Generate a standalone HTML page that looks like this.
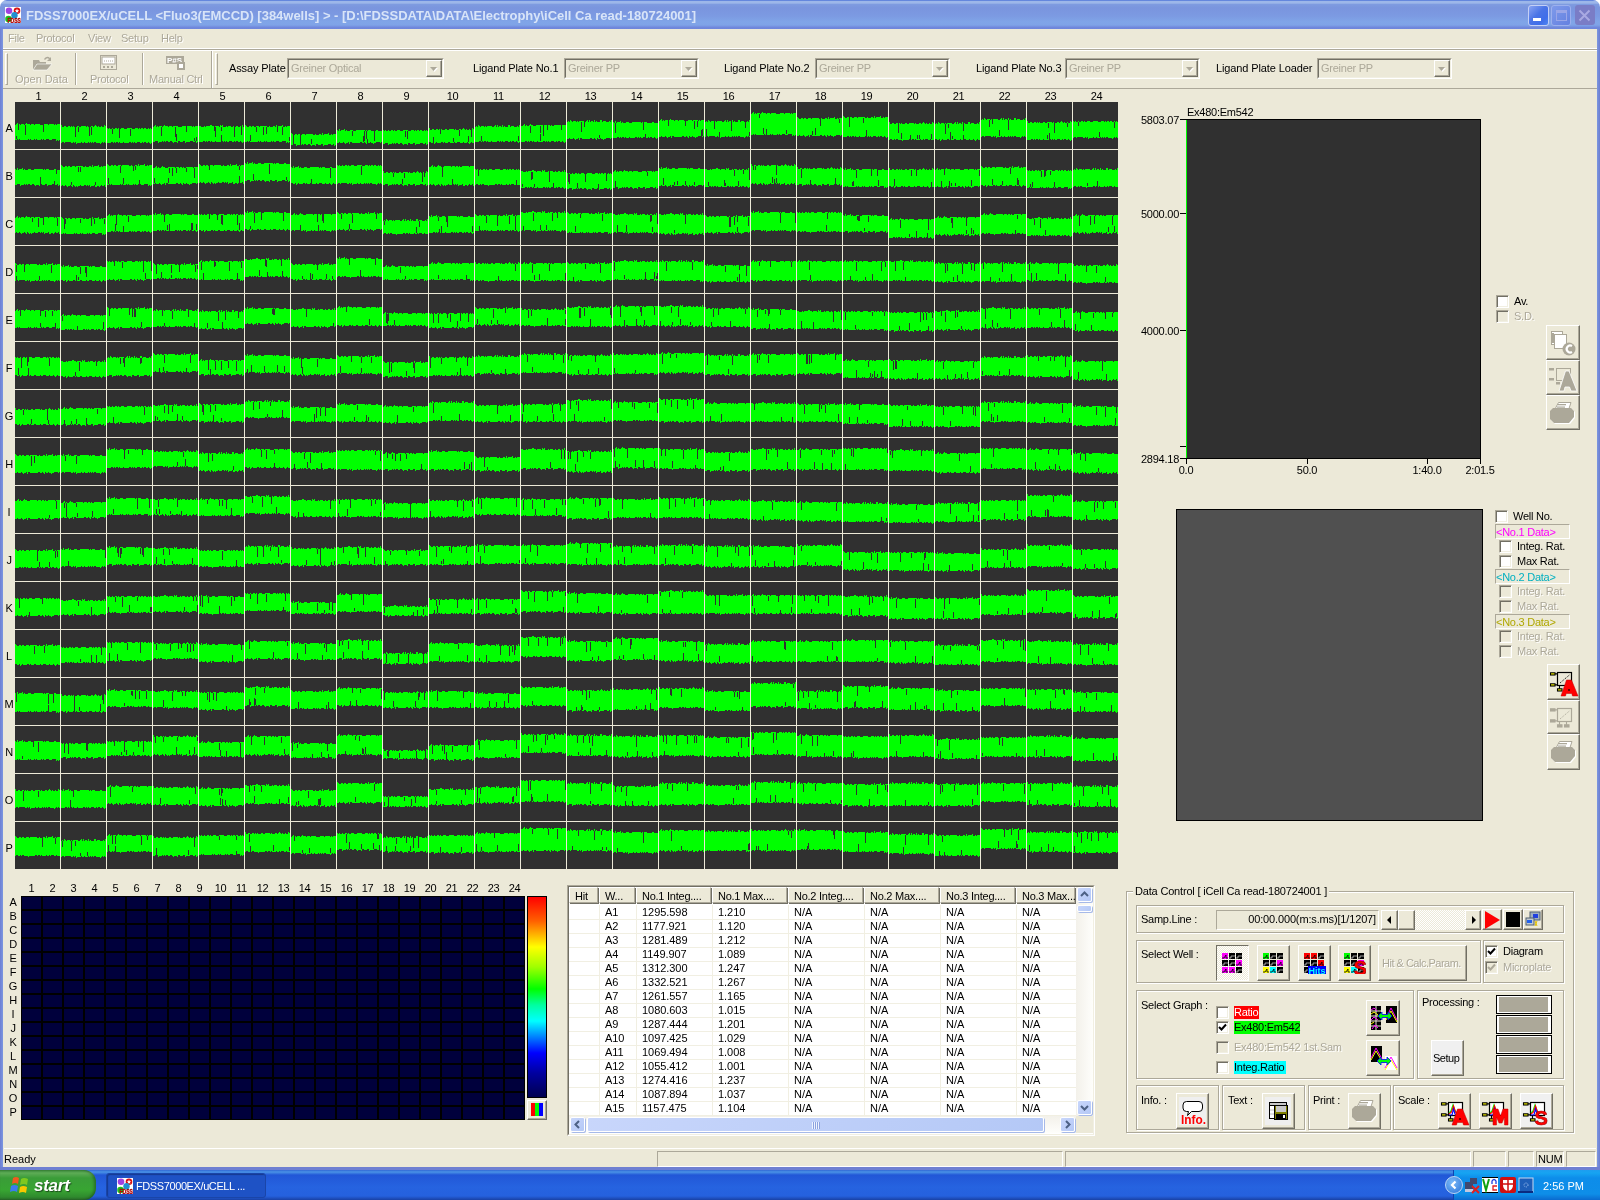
<!DOCTYPE html><html><head><meta charset="utf-8"><style>
*{margin:0;padding:0;box-sizing:border-box}
html,body{width:1600px;height:1200px;overflow:hidden;background:#ECE9D8;font-family:"Liberation Sans",sans-serif;font-size:11px;color:#000}
.ab{position:absolute}
.t{position:absolute;white-space:nowrap;line-height:1;letter-spacing:-0.25px}
.dis{color:#ACA899;text-shadow:1px 1px 0 #fff}
.cb{position:absolute;width:13px;height:13px;background:#fff;border-top:1px solid #ACA899;border-left:1px solid #ACA899;border-right:1px solid #fff;border-bottom:1px solid #fff;box-shadow:inset 1px 1px 0 #716F64, inset -1px -1px 0 #F1EFE2}
.cbd{background:#ECE9D8}
.btn{position:absolute;background:#ECE9D8;border-top:1px solid #fff;border-left:1px solid #fff;border-right:1px solid #716F64;border-bottom:1px solid #716F64;box-shadow:inset -1px -1px 0 #ACA899}
.grp{position:absolute;border:1px solid #D0D0BF;box-shadow:1px 1px 0 #fff inset, 1px 1px 0 #fff}
.sunk{position:absolute;border-top:1px solid #ACA899;border-left:1px solid #ACA899;border-right:1px solid #fff;border-bottom:1px solid #fff}
</style></head><body><div style="position:absolute;left:0;top:0;width:1600px;height:1200px;overflow:hidden;will-change:transform">

<div class="ab" style="left:0;top:0;width:10px;height:10px;background:#fff"></div><div class="ab" style="left:1590px;top:0;width:10px;height:10px;background:#fff"></div>
<div class="ab" style="left:0;top:0;width:1600px;height:29px;border-radius:7px 7px 0 0;background:linear-gradient(to bottom,#6487DD 0px,#6487DD 1px,#9DB7E9 1.5px,#9DB7E9 3px,#7E9BE0 4.5px,#7A95DE 8px,#7C9AE2 16px,#80A5E8 22px,#7FA3E7 25px,#7088DC 27.5px,#6E86DB 29px)"></div>
<svg class="ab" style="left:5px;top:7px" width="16" height="16" viewBox="0 0 16 16"><rect width="16" height="16" fill="#fff"/><circle cx="4" cy="3.8" r="3.3" fill="#A040E0"/><circle cx="12" cy="3.8" r="3.3" fill="#D81010"/><path d="M12 1.5 L12.7 3.2 L14.2 3.3 L13 4.3 L13.4 5.8 L12 5 L10.6 5.8 L11 4.3 L9.8 3.3 L11.3 3.2Z" fill="#fff"/><circle cx="9.5" cy="8.2" r="3.2" fill="#2090D0"/><circle cx="3.5" cy="12" r="3.3" fill="#20C020"/><text x="2.5" y="15.6" font-family="Liberation Sans" font-weight="bold" font-size="6.5" fill="#FF0000" stroke="#600000" stroke-width="0.3" textLength="13.5" lengthAdjust="spacingAndGlyphs">FDSS</text></svg>
<div class="t" style="left:26px;top:9px;font-size:13px;font-weight:bold;color:#D8E4F8;letter-spacing:-0.02px">FDSS7000EX/uCELL &lt;Fluo3(EMCCD) [384wells] &gt; - [D:\FDSSDATA\DATA\Electrophy\iCell Ca read-180724001]</div>
<div class="ab" style="left:1528px;top:5px;width:21px;height:21px;border-radius:3px;border:1px solid #C4D0F6;background:linear-gradient(135deg,#8AA4F2 0%,#4A74E6 45%,#3F6EEA 75%,#4F86F2 100%)"><div class="ab" style="left:4px;top:12px;width:8px;height:3px;background:#fff"></div></div>
<div class="ab" style="left:1551px;top:5px;width:20px;height:21px;border-radius:3px;border:1px solid #9CB0EE;background:linear-gradient(135deg,#7E9AEA,#6480E0)"><div class="ab" style="left:4px;top:4px;width:11px;height:11px;border:1px solid #9AA6E8;border-top-width:3px"></div></div>
<div class="ab" style="left:1575px;top:5px;width:20px;height:20px;border-radius:3px;background:#7A7DC6"><svg class="ab" style="left:3px;top:4px" width="13" height="13"><path d="M1.5 1.5 L11.5 11.5 M11.5 1.5 L1.5 11.5" stroke="#A9A9E2" stroke-width="2"/></svg></div>
<div class="ab" style="left:0;top:29px;width:3px;height:1141px;background:linear-gradient(to right,#6E7FD3,#7C97E0)"></div>
<div class="ab" style="left:1597px;top:29px;width:3px;height:1141px;background:linear-gradient(to right,#7C97E0,#6B7DD0)"></div>
<div class="ab" style="left:0;top:1167px;width:1600px;height:3px;background:#6F80D2"></div>
<div class="t dis" style="left:8px;top:33px;text-shadow:1px 1px 0 #fff">File</div>
<div class="t dis" style="left:36px;top:33px;text-shadow:1px 1px 0 #fff">Protocol</div>
<div class="t dis" style="left:88px;top:33px;text-shadow:1px 1px 0 #fff">View</div>
<div class="t dis" style="left:121px;top:33px;text-shadow:1px 1px 0 #fff">Setup</div>
<div class="t dis" style="left:161px;top:33px;text-shadow:1px 1px 0 #fff">Help</div>
<div class="ab" style="left:3px;top:48px;width:1594px;height:3px;background:#fff;border-top:1px solid #fff"></div>
<div class="ab" style="left:3px;top:49px;width:1594px;height:1px;background:#ACA899"></div>
<div class="ab" style="left:5px;top:53px;width:3px;height:32px;border-left:1px solid #fff;border-top:1px solid #fff;border-right:1px solid #ACA899;border-bottom:1px solid #ACA899"></div>
<div class="ab" style="left:75px;top:53px;width:2px;height:32px;border-left:1px solid #ACA899;border-right:1px solid #fff"></div>
<div class="ab" style="left:142px;top:53px;width:2px;height:32px;border-left:1px solid #ACA899;border-right:1px solid #fff"></div>
<div class="ab" style="left:211px;top:51px;width:2px;height:37px;border-left:1px solid #ACA899;border-right:1px solid #fff"></div>
<div class="ab" style="left:215px;top:53px;width:3px;height:32px;border-left:1px solid #fff;border-top:1px solid #fff;border-right:1px solid #ACA899;border-bottom:1px solid #ACA899"></div>
<div class="t dis" style="left:15px;top:74px;letter-spacing:-0.05px">Open Data</div>
<div class="t dis" style="left:90px;top:74px;text-shadow:1px 1px 0 #fff">Protocol</div>
<div class="t dis" style="left:149px;top:74px;text-shadow:1px 1px 0 #fff">Manual Ctrl</div>
<svg class="ab" style="left:32px;top:55px" width="21" height="16"><path d="M1 5 L7 5 L8 7 L14 7 L14 9 L5 9 L1 15 Z" fill="#ACA899"/><path d="M5 9 L20 9 L15 15 L1 15 Z" fill="#ACA899" stroke="#fff" stroke-width="0.6"/><path d="M12 4 Q15 0 18 3 L19 2 L19 6 L15 6 L17 4 Q15 2 13 5Z" fill="#ACA899"/></svg>
<svg class="ab" style="left:100px;top:55px" width="18" height="16"><rect x="0.5" y="0.5" width="16" height="14" fill="#ECE9D8" stroke="#ACA899"/><rect x="2" y="2" width="13" height="7" fill="#fff" stroke="#ACA899"/><path d="M4 6 H13" stroke="#ACA899" stroke-dasharray="1 1"/><rect x="3" y="11" width="2" height="2" fill="#ACA899"/><rect x="7" y="11" width="2" height="2" fill="#ACA899"/><rect x="11" y="11" width="2" height="2" fill="#ACA899"/></svg>
<svg class="ab" style="left:166px;top:55px" width="20" height="16"><rect x="0" y="1" width="18" height="8" fill="#ACA899"/><text x="1" y="8" font-size="8" fill="#fff" font-family="Liberation Sans" font-weight="bold">P#S</text><rect x="11" y="7" width="8" height="8" fill="#ACA899"/><rect x="13" y="9" width="4" height="4" fill="#fff"/></svg>
<div class="t" style="left:229px;top:63px;letter-spacing:-0.12px">Assay Plate</div>
<div class="ab" style="left:287px;top:58px;width:157px;height:21px;border-top:1px solid #ACA899;border-left:1px solid #ACA899;border-right:1px solid #fff;border-bottom:1px solid #fff;background:#ECE9D8"><div class="ab" style="left:0;top:0;right:0;bottom:0;border-top:1px solid #716F64;border-left:1px solid #716F64;border-right:1px solid #F1EFE2;border-bottom:1px solid #F1EFE2"></div><div class="t dis" style="left:3px;top:4px;text-shadow:none">Greiner Optical</div><div class="ab" style="right:1px;top:1px;width:16px;height:17px;border-top:1px solid #fff;border-left:1px solid #fff;border-right:1px solid #716F64;border-bottom:1px solid #716F64;box-shadow:inset -1px -1px 0 #ACA899"><svg class="ab" style="left:2px;top:5px" width="10" height="7"><path d="M2 2 H9 L5.5 6Z" fill="#fff"/><path d="M1 1 H8 L4.5 5Z" fill="#ACA899"/></svg></div></div>
<div class="t" style="left:473px;top:63px;letter-spacing:-0.12px">Ligand Plate No.1</div>
<div class="ab" style="left:564px;top:58px;width:135px;height:21px;border-top:1px solid #ACA899;border-left:1px solid #ACA899;border-right:1px solid #fff;border-bottom:1px solid #fff;background:#ECE9D8"><div class="ab" style="left:0;top:0;right:0;bottom:0;border-top:1px solid #716F64;border-left:1px solid #716F64;border-right:1px solid #F1EFE2;border-bottom:1px solid #F1EFE2"></div><div class="t dis" style="left:3px;top:4px;text-shadow:none">Greiner PP</div><div class="ab" style="right:1px;top:1px;width:16px;height:17px;border-top:1px solid #fff;border-left:1px solid #fff;border-right:1px solid #716F64;border-bottom:1px solid #716F64;box-shadow:inset -1px -1px 0 #ACA899"><svg class="ab" style="left:2px;top:5px" width="10" height="7"><path d="M2 2 H9 L5.5 6Z" fill="#fff"/><path d="M1 1 H8 L4.5 5Z" fill="#ACA899"/></svg></div></div>
<div class="t" style="left:724px;top:63px;letter-spacing:-0.12px">Ligand Plate No.2</div>
<div class="ab" style="left:815px;top:58px;width:135px;height:21px;border-top:1px solid #ACA899;border-left:1px solid #ACA899;border-right:1px solid #fff;border-bottom:1px solid #fff;background:#ECE9D8"><div class="ab" style="left:0;top:0;right:0;bottom:0;border-top:1px solid #716F64;border-left:1px solid #716F64;border-right:1px solid #F1EFE2;border-bottom:1px solid #F1EFE2"></div><div class="t dis" style="left:3px;top:4px;text-shadow:none">Greiner PP</div><div class="ab" style="right:1px;top:1px;width:16px;height:17px;border-top:1px solid #fff;border-left:1px solid #fff;border-right:1px solid #716F64;border-bottom:1px solid #716F64;box-shadow:inset -1px -1px 0 #ACA899"><svg class="ab" style="left:2px;top:5px" width="10" height="7"><path d="M2 2 H9 L5.5 6Z" fill="#fff"/><path d="M1 1 H8 L4.5 5Z" fill="#ACA899"/></svg></div></div>
<div class="t" style="left:976px;top:63px;letter-spacing:-0.12px">Ligand Plate No.3</div>
<div class="ab" style="left:1065px;top:58px;width:135px;height:21px;border-top:1px solid #ACA899;border-left:1px solid #ACA899;border-right:1px solid #fff;border-bottom:1px solid #fff;background:#ECE9D8"><div class="ab" style="left:0;top:0;right:0;bottom:0;border-top:1px solid #716F64;border-left:1px solid #716F64;border-right:1px solid #F1EFE2;border-bottom:1px solid #F1EFE2"></div><div class="t dis" style="left:3px;top:4px;text-shadow:none">Greiner PP</div><div class="ab" style="right:1px;top:1px;width:16px;height:17px;border-top:1px solid #fff;border-left:1px solid #fff;border-right:1px solid #716F64;border-bottom:1px solid #716F64;box-shadow:inset -1px -1px 0 #ACA899"><svg class="ab" style="left:2px;top:5px" width="10" height="7"><path d="M2 2 H9 L5.5 6Z" fill="#fff"/><path d="M1 1 H8 L4.5 5Z" fill="#ACA899"/></svg></div></div>
<div class="t" style="left:1216px;top:63px;letter-spacing:-0.12px">Ligand Plate Loader</div>
<div class="ab" style="left:1317px;top:58px;width:135px;height:21px;border-top:1px solid #ACA899;border-left:1px solid #ACA899;border-right:1px solid #fff;border-bottom:1px solid #fff;background:#ECE9D8"><div class="ab" style="left:0;top:0;right:0;bottom:0;border-top:1px solid #716F64;border-left:1px solid #716F64;border-right:1px solid #F1EFE2;border-bottom:1px solid #F1EFE2"></div><div class="t dis" style="left:3px;top:4px;text-shadow:none">Greiner PP</div><div class="ab" style="right:1px;top:1px;width:16px;height:17px;border-top:1px solid #fff;border-left:1px solid #fff;border-right:1px solid #716F64;border-bottom:1px solid #716F64;box-shadow:inset -1px -1px 0 #ACA899"><svg class="ab" style="left:2px;top:5px" width="10" height="7"><path d="M2 2 H9 L5.5 6Z" fill="#fff"/><path d="M1 1 H8 L4.5 5Z" fill="#ACA899"/></svg></div></div>
<div class="ab" style="left:3px;top:88px;width:1594px;height:1px;background:#ACA899"></div>
<div class="ab" style="left:15px;top:102px;width:1104px;height:767px;background:#ECE9D8"></div>
<div class="t" style="left:16px;top:91px;width:45px;text-align:center">1</div>
<div class="t" style="left:62px;top:91px;width:45px;text-align:center">2</div>
<div class="t" style="left:108px;top:91px;width:45px;text-align:center">3</div>
<div class="t" style="left:154px;top:91px;width:45px;text-align:center">4</div>
<div class="t" style="left:200px;top:91px;width:45px;text-align:center">5</div>
<div class="t" style="left:246px;top:91px;width:45px;text-align:center">6</div>
<div class="t" style="left:292px;top:91px;width:45px;text-align:center">7</div>
<div class="t" style="left:338px;top:91px;width:45px;text-align:center">8</div>
<div class="t" style="left:384px;top:91px;width:45px;text-align:center">9</div>
<div class="t" style="left:430px;top:91px;width:45px;text-align:center">10</div>
<div class="t" style="left:476px;top:91px;width:45px;text-align:center">11</div>
<div class="t" style="left:522px;top:91px;width:45px;text-align:center">12</div>
<div class="t" style="left:568px;top:91px;width:45px;text-align:center">13</div>
<div class="t" style="left:614px;top:91px;width:45px;text-align:center">14</div>
<div class="t" style="left:660px;top:91px;width:45px;text-align:center">15</div>
<div class="t" style="left:706px;top:91px;width:45px;text-align:center">16</div>
<div class="t" style="left:752px;top:91px;width:45px;text-align:center">17</div>
<div class="t" style="left:798px;top:91px;width:45px;text-align:center">18</div>
<div class="t" style="left:844px;top:91px;width:45px;text-align:center">19</div>
<div class="t" style="left:890px;top:91px;width:45px;text-align:center">20</div>
<div class="t" style="left:936px;top:91px;width:45px;text-align:center">21</div>
<div class="t" style="left:982px;top:91px;width:45px;text-align:center">22</div>
<div class="t" style="left:1028px;top:91px;width:45px;text-align:center">23</div>
<div class="t" style="left:1074px;top:91px;width:45px;text-align:center">24</div>
<div class="t" style="left:4px;top:123px;width:10px;text-align:center">A</div>
<div class="t" style="left:4px;top:171px;width:10px;text-align:center">B</div>
<div class="t" style="left:4px;top:219px;width:10px;text-align:center">C</div>
<div class="t" style="left:4px;top:267px;width:10px;text-align:center">D</div>
<div class="t" style="left:4px;top:315px;width:10px;text-align:center">E</div>
<div class="t" style="left:4px;top:363px;width:10px;text-align:center">F</div>
<div class="t" style="left:4px;top:411px;width:10px;text-align:center">G</div>
<div class="t" style="left:4px;top:459px;width:10px;text-align:center">H</div>
<div class="t" style="left:4px;top:507px;width:10px;text-align:center">I</div>
<div class="t" style="left:4px;top:555px;width:10px;text-align:center">J</div>
<div class="t" style="left:4px;top:603px;width:10px;text-align:center">K</div>
<div class="t" style="left:4px;top:651px;width:10px;text-align:center">L</div>
<div class="t" style="left:4px;top:699px;width:10px;text-align:center">M</div>
<div class="t" style="left:4px;top:747px;width:10px;text-align:center">N</div>
<div class="t" style="left:4px;top:795px;width:10px;text-align:center">O</div>
<div class="t" style="left:4px;top:843px;width:10px;text-align:center">P</div>
<svg class="ab" style="left:15px;top:102px" width="1104" height="767" viewBox="0 0 1104 767"><defs><path id="ft0" d="M0 4v1M1 4v1M5 4v1M7 4v1M8 4v1M9 4v1M10 4v1M11 3v2M12 3v2M13 4v1M14 4v1M16 4v1M17 4v1M18 4v1M19 4v1M21 3v2M22 4v1M23 3v2M27 4v1M29 4v1M30 4v1M31 4v1M34 4v1M37 4v1M38 4v1M41 4v1M43 3v2" stroke="#00FF00" stroke-width="1" transform="translate(0.5 0)"/><path id="fb0" d="M0 0v1M1 0v1M3 0v1M5 0v1M6 0v1M7 0v1M8 0v1M9 0v1M10 0v1M11 0v1M12 0v1M14 0v1M16 0v1M17 0v1M18 0v1M20 0v1M22 0v1M23 0v1M24 0v1M25 0v1M27 0v1M29 0v1M30 0v1M34 0v1M35 0v1M36 0v1M41 0v2M42 0v1M43 0v2M44 0v1" stroke="#00FF00" stroke-width="1" transform="translate(0.5 0)"/><path id="ft1" d="M1 4v1M2 3v2M4 4v1M6 4v1M7 4v1M8 4v1M10 4v1M11 3v2M12 4v1M13 4v1M14 4v1M16 4v1M17 4v1M18 4v1M20 4v1M21 4v1M22 4v1M23 4v1M24 4v1M29 4v1M30 4v1M31 4v1M32 4v1M34 4v1M35 4v1M36 4v1M37 4v1M38 4v1M40 4v1M42 4v1M43 4v1M44 4v1" stroke="#00FF00" stroke-width="1" transform="translate(0.5 0)"/><path id="fb1" d="M0 0v1M1 0v1M2 0v1M3 0v1M6 0v1M8 0v1M11 0v1M13 0v1M14 0v1M15 0v1M17 0v1M18 0v1M19 0v1M20 0v1M21 0v1M24 0v1M26 0v1M28 0v1M29 0v1M33 0v1M34 0v1M36 0v1M39 0v1M40 0v1M42 0v1M43 0v2M44 0v1" stroke="#00FF00" stroke-width="1" transform="translate(0.5 0)"/><path id="ft2" d="M0 4v1M2 4v1M5 4v1M8 4v1M9 4v1M11 4v1M14 4v1M15 4v1M16 4v1M20 4v1M21 4v1M22 4v1M23 4v1M24 4v1M28 4v1M29 4v1M30 4v1M32 4v1M34 4v1M35 4v1M37 4v1M38 4v1M41 4v1M43 4v1" stroke="#00FF00" stroke-width="1" transform="translate(0.5 0)"/><path id="fb2" d="M2 0v1M3 0v1M5 0v2M6 0v1M8 0v1M9 0v1M10 0v1M11 0v1M14 0v1M16 0v1M17 0v1M18 0v1M21 0v1M22 0v1M23 0v1M24 0v1M26 0v1M27 0v1M31 0v1M32 0v1M33 0v1M35 0v1M36 0v1M37 0v1M39 0v1M40 0v2M41 0v1M43 0v1M44 0v1" stroke="#00FF00" stroke-width="1" transform="translate(0.5 0)"/><path id="ft3" d="M0 3v2M1 4v1M4 4v1M5 4v1M7 4v1M8 4v1M11 4v1M12 4v1M13 4v1M15 4v1M16 4v1M17 4v1M18 4v1M19 4v1M20 4v1M21 4v1M24 4v1M28 4v1M29 4v1M31 3v2M33 4v1M34 4v1M35 4v1M36 4v1M37 3v2M40 4v1M42 4v1M43 4v1M44 4v1" stroke="#00FF00" stroke-width="1" transform="translate(0.5 0)"/><path id="fb3" d="M0 0v1M3 0v1M10 0v1M11 0v1M13 0v1M15 0v2M16 0v1M17 0v1M18 0v1M19 0v1M21 0v1M22 0v1M24 0v1M25 0v1M26 0v1M28 0v1M30 0v1M32 0v1M35 0v1M36 0v1M37 0v1M38 0v1M39 0v2M40 0v1M42 0v1M44 0v1" stroke="#00FF00" stroke-width="1" transform="translate(0.5 0)"/><path id="ft4" d="M0 3v2M3 4v1M4 4v1M7 4v1M8 4v1M10 4v1M12 4v1M16 4v1M17 4v1M20 4v1M21 4v1M22 4v1M23 4v1M24 4v1M26 4v1M30 4v1M31 4v1M33 4v1M34 3v2M35 4v1M37 4v1M40 4v1M43 3v2M44 4v1" stroke="#00FF00" stroke-width="1" transform="translate(0.5 0)"/><path id="fb4" d="M0 0v1M1 0v1M3 0v1M4 0v1M5 0v1M7 0v1M8 0v2M9 0v1M10 0v1M12 0v2M15 0v1M16 0v1M17 0v1M18 0v1M19 0v1M20 0v1M21 0v1M22 0v1M25 0v1M26 0v1M28 0v1M29 0v2M31 0v1M32 0v1M34 0v1M35 0v1M36 0v2M37 0v1M38 0v1M43 0v1" stroke="#00FF00" stroke-width="1" transform="translate(0.5 0)"/><path id="ft5" d="M1 4v1M3 3v2M4 4v1M6 4v1M7 4v1M8 4v1M10 4v1M12 4v1M13 4v1M14 4v1M15 4v1M16 4v1M19 4v1M20 3v2M22 3v2M24 4v1M25 4v1M27 3v2M29 4v1M33 3v2M34 3v2M36 4v1M37 4v1M38 4v1M42 4v1M44 3v2" stroke="#00FF00" stroke-width="1" transform="translate(0.5 0)"/><path id="fb5" d="M0 0v1M2 0v1M3 0v1M5 0v1M6 0v2M7 0v1M8 0v1M10 0v1M11 0v2M13 0v1M14 0v2M15 0v1M16 0v2M17 0v1M18 0v1M20 0v1M21 0v1M22 0v1M25 0v1M27 0v1M29 0v2M30 0v1M31 0v1M32 0v1M34 0v2M35 0v2M36 0v1M37 0v1M38 0v2M39 0v1M41 0v1M42 0v1M44 0v2" stroke="#00FF00" stroke-width="1" transform="translate(0.5 0)"/><path id="ft6" d="M2 4v1M3 3v2M5 4v1M8 4v1M9 3v2M10 4v1M11 4v1M15 4v1M16 4v1M17 4v1M18 4v1M19 4v1M20 4v1M21 4v1M23 4v1M24 4v1M25 4v1M27 4v1M28 4v1M30 4v1M33 4v1M34 4v1M35 4v1M36 4v1M37 4v1M38 4v1M39 4v1M41 4v1M42 4v1M43 4v1M44 4v1" stroke="#00FF00" stroke-width="1" transform="translate(0.5 0)"/><path id="fb6" d="M0 0v1M1 0v1M5 0v2M6 0v1M7 0v1M8 0v1M10 0v1M12 0v1M15 0v1M16 0v1M19 0v1M20 0v2M21 0v1M22 0v1M23 0v1M24 0v2M27 0v1M28 0v1M29 0v1M32 0v2M33 0v1M34 0v1M35 0v1M36 0v1M40 0v1M41 0v1M43 0v2M44 0v1" stroke="#00FF00" stroke-width="1" transform="translate(0.5 0)"/><path id="ft7" d="M0 4v1M2 3v2M4 4v1M5 4v1M6 4v1M7 3v2M9 4v1M13 4v1M14 4v1M15 4v1M19 4v1M20 4v1M21 4v1M22 4v1M23 4v1M24 4v1M25 4v1M26 4v1M27 4v1M29 4v1M31 4v1M32 4v1M33 4v1M39 4v1M40 4v1" stroke="#00FF00" stroke-width="1" transform="translate(0.5 0)"/><path id="fb7" d="M0 0v1M3 0v1M4 0v1M6 0v1M9 0v1M10 0v1M11 0v1M12 0v1M13 0v2M14 0v1M15 0v1M16 0v1M17 0v1M18 0v1M19 0v1M22 0v1M25 0v1M27 0v1M28 0v1M29 0v1M30 0v1M32 0v1M33 0v1M35 0v1M39 0v1M40 0v1M42 0v1M43 0v1M44 0v1" stroke="#00FF00" stroke-width="1" transform="translate(0.5 0)"/></defs><rect x="0" y="0" width="45" height="47" fill="#303030"/><rect x="46" y="0" width="45" height="47" fill="#303030"/><rect x="92" y="0" width="45" height="47" fill="#303030"/><rect x="138" y="0" width="45" height="47" fill="#303030"/><rect x="184" y="0" width="45" height="47" fill="#303030"/><rect x="230" y="0" width="45" height="47" fill="#303030"/><rect x="276" y="0" width="45" height="47" fill="#303030"/><rect x="322" y="0" width="45" height="47" fill="#303030"/><rect x="368" y="0" width="45" height="47" fill="#303030"/><rect x="414" y="0" width="45" height="47" fill="#303030"/><rect x="460" y="0" width="45" height="47" fill="#303030"/><rect x="506" y="0" width="45" height="47" fill="#303030"/><rect x="552" y="0" width="45" height="47" fill="#303030"/><rect x="598" y="0" width="45" height="47" fill="#303030"/><rect x="644" y="0" width="45" height="47" fill="#303030"/><rect x="690" y="0" width="45" height="47" fill="#303030"/><rect x="736" y="0" width="45" height="47" fill="#303030"/><rect x="782" y="0" width="45" height="47" fill="#303030"/><rect x="828" y="0" width="45" height="47" fill="#303030"/><rect x="874" y="0" width="45" height="47" fill="#303030"/><rect x="920" y="0" width="45" height="47" fill="#303030"/><rect x="966" y="0" width="45" height="47" fill="#303030"/><rect x="1012" y="0" width="45" height="47" fill="#303030"/><rect x="1058" y="0" width="45" height="47" fill="#303030"/><rect x="0" y="23" width="45" height="14" fill="#00FF00"/><use href="#ft1" x="0" y="18"/><use href="#fb0" x="0" y="37"/><path d="M1.5 11v3M3.5 0v5M28.5 0v7M10.5 0v10" transform="translate(0 23)" stroke="#303030"/><rect x="46" y="25" width="45" height="15" fill="#00FF00"/><use href="#ft4" x="46" y="20"/><use href="#fb3" x="46" y="40"/><path d="M17.5 0v5M30.5 0v8M14.5 0v10M28.5 0v9" transform="translate(46 25)" stroke="#303030"/><rect x="92" y="27" width="45" height="13" fill="#00FF00"/><use href="#ft2" x="92" y="22"/><use href="#fb1" x="92" y="40"/><path d="M12.5 0v9M23.5 0v7M5.5 0v5" transform="translate(92 27)" stroke="#303030"/><rect x="138" y="25" width="45" height="14" fill="#00FF00"/><use href="#ft1" x="138" y="20"/><use href="#fb6" x="138" y="39"/><path d="M22.5 0v10M8.5 0v9M23.5 7v7M43.5 10v4M41.5 11v3M33.5 0v5" transform="translate(138 25)" stroke="#303030"/><rect x="184" y="25" width="45" height="14" fill="#00FF00"/><use href="#ft0" x="184" y="20"/><use href="#fb1" x="184" y="39"/><path d="M42.5 0v8M22.5 0v4M22.5 8v6M15.5 0v4M16.5 0v10M35.5 0v10" transform="translate(184 25)" stroke="#303030"/><rect x="230" y="25" width="45" height="14" fill="#00FF00"/><use href="#ft3" x="230" y="20"/><use href="#fb0" x="230" y="39"/><path d="M37.5 0v8M11.5 0v5M5.5 8v6M21.5 0v7M18.5 0v8M44.5 10v4M32.5 0v5" transform="translate(230 25)" stroke="#303030"/><rect x="276" y="33" width="45" height="9" fill="#00FF00"/><use href="#ft3" x="276" y="28"/><use href="#fb6" x="276" y="42"/><path d="M2.5 0v9M9.5 0v10M20.5 4v5" transform="translate(276 33)" stroke="#303030"/><rect x="322" y="29" width="45" height="11" fill="#00FF00"/><use href="#ft7" x="322" y="24"/><use href="#fb4" x="322" y="40"/><path d="M26.5 5v6M27.5 0v10M15.5 0v5M37.5 0v10M30.5 8v3M29.5 0v8" transform="translate(322 29)" stroke="#303030"/><rect x="368" y="29" width="45" height="12" fill="#00FF00"/><use href="#ft2" x="368" y="24"/><use href="#fb6" x="368" y="41"/><path d="M24.5 0v8M22.5 0v6" transform="translate(368 29)" stroke="#303030"/><rect x="414" y="28" width="45" height="12" fill="#00FF00"/><use href="#ft4" x="414" y="23"/><use href="#fb2" x="414" y="40"/><path d="M42.5 0v7M4.5 7v5M11.5 0v4M39.5 6v6M30.5 0v6M24.5 8v4" transform="translate(414 28)" stroke="#303030"/><rect x="460" y="25" width="45" height="14" fill="#00FF00"/><use href="#ft5" x="460" y="20"/><use href="#fb1" x="460" y="39"/><path d="M6.5 9v5M43.5 9v5" transform="translate(460 25)" stroke="#303030"/><rect x="506" y="24" width="45" height="15" fill="#00FF00"/><use href="#ft6" x="506" y="19"/><use href="#fb1" x="506" y="39"/><path d="M19.5 0v7M22.5 0v4M26.5 0v4M40.5 0v4M19.5 8v7M9.5 0v7M22.5 0v10" transform="translate(506 24)" stroke="#303030"/><rect x="552" y="20" width="45" height="16" fill="#00FF00"/><use href="#ft5" x="552" y="15"/><use href="#fb4" x="552" y="36"/><path d="M32.5 13v3M14.5 0v10M17.5 0v5" transform="translate(552 20)" stroke="#303030"/><rect x="598" y="21" width="45" height="14" fill="#00FF00"/><use href="#ft7" x="598" y="16"/><use href="#fb1" x="598" y="35"/><path d="M32.5 11v3M30.5 0v7M2.5 0v10" transform="translate(598 21)" stroke="#303030"/><rect x="644" y="19" width="45" height="15" fill="#00FF00"/><use href="#ft1" x="644" y="14"/><use href="#fb4" x="644" y="34"/><path d="M9.5 0v5M26.5 0v5M35.5 0v8M42.5 9v6M38.5 0v6M43.5 8v7" transform="translate(644 19)" stroke="#303030"/><rect x="690" y="20" width="45" height="14" fill="#00FF00"/><use href="#ft5" x="690" y="15"/><use href="#fb3" x="690" y="34"/><path d="M1.5 7v7M9.5 0v7M14.5 10v4M44.5 10v4M26.5 0v9M40.5 0v6" transform="translate(690 20)" stroke="#303030"/><rect x="736" y="12" width="45" height="20" fill="#00FF00"/><use href="#ft1" x="736" y="7"/><use href="#fb0" x="736" y="32"/><path d="M12.5 14v6M15.5 15v5M35.5 16v4M8.5 0v4" transform="translate(736 12)" stroke="#303030"/><rect x="782" y="17" width="45" height="16" fill="#00FF00"/><use href="#ft3" x="782" y="12"/><use href="#fb4" x="782" y="33"/><path d="M42.5 0v4M15.5 12v4M23.5 0v7M18.5 9v7" transform="translate(782 17)" stroke="#303030"/><rect x="828" y="16" width="45" height="18" fill="#00FF00"/><use href="#ft3" x="828" y="11"/><use href="#fb1" x="828" y="34"/><path d="M23.5 12v6M6.5 0v9M20.5 0v5" transform="translate(828 16)" stroke="#303030"/><rect x="874" y="22" width="45" height="15" fill="#00FF00"/><use href="#ft4" x="874" y="17"/><use href="#fb7" x="874" y="37"/><path d="M9.5 0v9M28.5 11v4M30.5 11v4M12.5 9v6M21.5 11v4M42.5 10v5" transform="translate(874 22)" stroke="#303030"/><rect x="920" y="22" width="45" height="15" fill="#00FF00"/><use href="#ft5" x="920" y="17"/><use href="#fb2" x="920" y="37"/><path d="M15.5 8v7M13.5 0v4M28.5 0v7M10.5 0v10M17.5 12v3M28.5 11v4" transform="translate(920 22)" stroke="#303030"/><rect x="966" y="18" width="45" height="16" fill="#00FF00"/><use href="#ft5" x="966" y="13"/><use href="#fb3" x="966" y="34"/><path d="M27.5 0v10M18.5 10v6M8.5 0v7M11.5 0v4" transform="translate(966 18)" stroke="#303030"/><rect x="1012" y="21" width="45" height="16" fill="#00FF00"/><use href="#ft4" x="1012" y="16"/><use href="#fb1" x="1012" y="37"/><path d="M20.5 12v4M22.5 10v6M27.5 0v10M21.5 0v5M40.5 0v4" transform="translate(1012 21)" stroke="#303030"/><rect x="1058" y="20" width="45" height="15" fill="#00FF00"/><use href="#ft2" x="1058" y="15"/><use href="#fb3" x="1058" y="35"/><path d="M41.5 0v6M26.5 10v5M5.5 0v4" transform="translate(1058 20)" stroke="#303030"/><rect x="0" y="48" width="45" height="47" fill="#303030"/><rect x="46" y="48" width="45" height="47" fill="#303030"/><rect x="92" y="48" width="45" height="47" fill="#303030"/><rect x="138" y="48" width="45" height="47" fill="#303030"/><rect x="184" y="48" width="45" height="47" fill="#303030"/><rect x="230" y="48" width="45" height="47" fill="#303030"/><rect x="276" y="48" width="45" height="47" fill="#303030"/><rect x="322" y="48" width="45" height="47" fill="#303030"/><rect x="368" y="48" width="45" height="47" fill="#303030"/><rect x="414" y="48" width="45" height="47" fill="#303030"/><rect x="460" y="48" width="45" height="47" fill="#303030"/><rect x="506" y="48" width="45" height="47" fill="#303030"/><rect x="552" y="48" width="45" height="47" fill="#303030"/><rect x="598" y="48" width="45" height="47" fill="#303030"/><rect x="644" y="48" width="45" height="47" fill="#303030"/><rect x="690" y="48" width="45" height="47" fill="#303030"/><rect x="736" y="48" width="45" height="47" fill="#303030"/><rect x="782" y="48" width="45" height="47" fill="#303030"/><rect x="828" y="48" width="45" height="47" fill="#303030"/><rect x="874" y="48" width="45" height="47" fill="#303030"/><rect x="920" y="48" width="45" height="47" fill="#303030"/><rect x="966" y="48" width="45" height="47" fill="#303030"/><rect x="1012" y="48" width="45" height="47" fill="#303030"/><rect x="1058" y="48" width="45" height="47" fill="#303030"/><rect x="0" y="68" width="45" height="14" fill="#00FF00"/><use href="#ft7" x="0" y="63"/><use href="#fb6" x="0" y="82"/><path d="M41.5 0v4M25.5 7v7M39.5 11v3" transform="translate(0 68)" stroke="#303030"/><rect x="46" y="65" width="45" height="18" fill="#00FF00"/><use href="#ft3" x="46" y="60"/><use href="#fb5" x="46" y="83"/><path d="M19.5 0v5M10.5 15v3M17.5 0v5M34.5 15v3" transform="translate(46 65)" stroke="#303030"/><rect x="92" y="64" width="45" height="18" fill="#00FF00"/><use href="#ft3" x="92" y="59"/><use href="#fb0" x="92" y="82"/><path d="M32.5 14v4M1.5 12v6M13.5 0v7M28.5 0v4M26.5 0v5M16.5 12v6" transform="translate(92 64)" stroke="#303030"/><rect x="138" y="66" width="45" height="15" fill="#00FF00"/><use href="#ft6" x="138" y="61"/><use href="#fb4" x="138" y="81"/><path d="M16.5 0v5M33.5 0v4M19.5 0v8M15.5 10v5M23.5 0v5M41.5 0v10M1.5 10v5" transform="translate(138 66)" stroke="#303030"/><rect x="184" y="64" width="45" height="16" fill="#00FF00"/><use href="#ft3" x="184" y="59"/><use href="#fb5" x="184" y="80"/><path d="M10.5 0v4M40.5 10v6M40.5 0v4" transform="translate(184 64)" stroke="#303030"/><rect x="230" y="62" width="45" height="16" fill="#00FF00"/><use href="#ft7" x="230" y="57"/><use href="#fb6" x="230" y="78"/><path d="M8.5 10v6M24.5 0v10M41.5 13v3" transform="translate(230 62)" stroke="#303030"/><rect x="276" y="66" width="45" height="15" fill="#00FF00"/><use href="#ft7" x="276" y="61"/><use href="#fb2" x="276" y="81"/><path d="M20.5 11v4M39.5 0v10" transform="translate(276 66)" stroke="#303030"/><rect x="322" y="64" width="45" height="17" fill="#00FF00"/><use href="#ft2" x="322" y="59"/><use href="#fb3" x="322" y="81"/><path d="M24.5 0v6M24.5 0v9" transform="translate(322 64)" stroke="#303030"/><rect x="368" y="71" width="45" height="11" fill="#00FF00"/><use href="#ft4" x="368" y="66"/><use href="#fb6" x="368" y="82"/><path d="M41.5 0v4M10.5 0v4M19.5 6v5M21.5 0v5M39.5 0v9" transform="translate(368 71)" stroke="#303030"/><rect x="414" y="65" width="45" height="17" fill="#00FF00"/><use href="#ft6" x="414" y="60"/><use href="#fb5" x="414" y="82"/><path d="M23.5 12v5M13.5 0v10" transform="translate(414 65)" stroke="#303030"/><rect x="460" y="68" width="45" height="14" fill="#00FF00"/><use href="#ft2" x="460" y="63"/><use href="#fb7" x="460" y="82"/><path d="M3.5 0v6M41.5 10v4" transform="translate(460 68)" stroke="#303030"/><rect x="506" y="70" width="45" height="15" fill="#00FF00"/><use href="#ft0" x="506" y="65"/><use href="#fb1" x="506" y="85"/><path d="M28.5 0v10M10.5 0v8M11.5 0v7M10.5 0v4M13.5 12v3M32.5 11v4M1.5 12v3" transform="translate(506 70)" stroke="#303030"/><rect x="552" y="72" width="45" height="14" fill="#00FF00"/><use href="#ft2" x="552" y="67"/><use href="#fb6" x="552" y="86"/><path d="M18.5 0v8M1.5 0v8M2.5 0v10M39.5 0v7M10.5 9v5M31.5 10v4" transform="translate(552 72)" stroke="#303030"/><rect x="598" y="70" width="45" height="15" fill="#00FF00"/><use href="#ft1" x="598" y="65"/><use href="#fb6" x="598" y="85"/><path d="M2.5 9v6M34.5 0v4" transform="translate(598 70)" stroke="#303030"/><rect x="644" y="67" width="45" height="16" fill="#00FF00"/><use href="#ft7" x="644" y="62"/><use href="#fb4" x="644" y="83"/><path d="M18.5 12v4M35.5 13v3M4.5 9v7M26.5 12v4M15.5 13v3" transform="translate(644 67)" stroke="#303030"/><rect x="690" y="68" width="45" height="16" fill="#00FF00"/><use href="#ft0" x="690" y="63"/><use href="#fb1" x="690" y="84"/><path d="M3.5 12v4M20.5 13v3M44.5 0v10M29.5 0v6M19.5 10v6M38.5 0v4M33.5 11v5" transform="translate(690 68)" stroke="#303030"/><rect x="736" y="64" width="45" height="17" fill="#00FF00"/><use href="#ft4" x="736" y="59"/><use href="#fb5" x="736" y="81"/><path d="M25.5 0v9M25.5 12v5M21.5 11v6M2.5 0v4M4.5 0v4M23.5 13v4" transform="translate(736 64)" stroke="#303030"/><rect x="782" y="67" width="45" height="15" fill="#00FF00"/><use href="#ft4" x="782" y="62"/><use href="#fb6" x="782" y="82"/><path d="M4.5 0v9M13.5 11v4M38.5 9v6" transform="translate(782 67)" stroke="#303030"/><rect x="828" y="68" width="45" height="16" fill="#00FF00"/><use href="#ft7" x="828" y="63"/><use href="#fb0" x="828" y="84"/><path d="M10.5 11v5M13.5 0v8M9.5 12v4M28.5 0v6M34.5 0v6M35.5 10v6" transform="translate(828 68)" stroke="#303030"/><rect x="874" y="68" width="45" height="16" fill="#00FF00"/><use href="#ft4" x="874" y="63"/><use href="#fb2" x="874" y="84"/><path d="M42.5 12v4M5.5 9v7M27.5 0v6M22.5 0v6" transform="translate(874 68)" stroke="#303030"/><rect x="920" y="68" width="45" height="16" fill="#00FF00"/><use href="#ft1" x="920" y="63"/><use href="#fb4" x="920" y="84"/><path d="M36.5 10v6M44.5 0v6M16.5 13v3M9.5 0v5M6.5 11v5M14.5 11v5M20.5 13v3" transform="translate(920 68)" stroke="#303030"/><rect x="966" y="66" width="45" height="17" fill="#00FF00"/><use href="#ft3" x="966" y="61"/><use href="#fb2" x="966" y="83"/><path d="M37.5 13v4M29.5 0v6M37.5 12v5M21.5 13v4M11.5 11v6M36.5 10v7" transform="translate(966 66)" stroke="#303030"/><rect x="1012" y="69" width="45" height="16" fill="#00FF00"/><use href="#ft2" x="1012" y="64"/><use href="#fb0" x="1012" y="85"/><path d="M5.5 11v5M18.5 0v5M27.5 11v5M23.5 0v4M17.5 0v6M14.5 0v6M3.5 13v3" transform="translate(1012 69)" stroke="#303030"/><rect x="1058" y="68" width="45" height="16" fill="#00FF00"/><use href="#ft5" x="1058" y="63"/><use href="#fb7" x="1058" y="84"/><path d="M24.5 11v5M14.5 13v3" transform="translate(1058 68)" stroke="#303030"/><rect x="0" y="96" width="45" height="47" fill="#303030"/><rect x="46" y="96" width="45" height="47" fill="#303030"/><rect x="92" y="96" width="45" height="47" fill="#303030"/><rect x="138" y="96" width="45" height="47" fill="#303030"/><rect x="184" y="96" width="45" height="47" fill="#303030"/><rect x="230" y="96" width="45" height="47" fill="#303030"/><rect x="276" y="96" width="45" height="47" fill="#303030"/><rect x="322" y="96" width="45" height="47" fill="#303030"/><rect x="368" y="96" width="45" height="47" fill="#303030"/><rect x="414" y="96" width="45" height="47" fill="#303030"/><rect x="460" y="96" width="45" height="47" fill="#303030"/><rect x="506" y="96" width="45" height="47" fill="#303030"/><rect x="552" y="96" width="45" height="47" fill="#303030"/><rect x="598" y="96" width="45" height="47" fill="#303030"/><rect x="644" y="96" width="45" height="47" fill="#303030"/><rect x="690" y="96" width="45" height="47" fill="#303030"/><rect x="736" y="96" width="45" height="47" fill="#303030"/><rect x="782" y="96" width="45" height="47" fill="#303030"/><rect x="828" y="96" width="45" height="47" fill="#303030"/><rect x="874" y="96" width="45" height="47" fill="#303030"/><rect x="920" y="96" width="45" height="47" fill="#303030"/><rect x="966" y="96" width="45" height="47" fill="#303030"/><rect x="1012" y="96" width="45" height="47" fill="#303030"/><rect x="1058" y="96" width="45" height="47" fill="#303030"/><rect x="0" y="116" width="45" height="14" fill="#00FF00"/><use href="#ft1" x="0" y="111"/><use href="#fb5" x="0" y="130"/><path d="M17.5 0v4M23.5 0v9M28.5 0v7M42.5 0v8" transform="translate(0 116)" stroke="#303030"/><rect x="46" y="117" width="45" height="14" fill="#00FF00"/><use href="#ft3" x="46" y="112"/><use href="#fb0" x="46" y="131"/><path d="M19.5 0v4M3.5 0v10M33.5 0v5M4.5 0v5M30.5 0v7M43.5 0v5" transform="translate(46 117)" stroke="#303030"/><rect x="92" y="114" width="45" height="15" fill="#00FF00"/><use href="#ft1" x="92" y="109"/><use href="#fb1" x="92" y="129"/><path d="M16.5 10v5M8.5 8v7M21.5 0v6M9.5 0v9" transform="translate(92 114)" stroke="#303030"/><rect x="138" y="113" width="45" height="15" fill="#00FF00"/><use href="#ft7" x="138" y="108"/><use href="#fb1" x="138" y="128"/><path d="M39.5 8v7M16.5 9v6M38.5 8v7M39.5 11v4M11.5 0v7M14.5 10v5M43.5 9v6" transform="translate(138 113)" stroke="#303030"/><rect x="184" y="113" width="45" height="15" fill="#00FF00"/><use href="#ft2" x="184" y="108"/><use href="#fb2" x="184" y="128"/><path d="M40.5 8v7M38.5 0v10M40.5 12v3M10.5 0v4M23.5 0v10M22.5 0v9M18.5 0v5" transform="translate(184 113)" stroke="#303030"/><rect x="230" y="111" width="45" height="16" fill="#00FF00"/><use href="#ft7" x="230" y="106"/><use href="#fb2" x="230" y="127"/><path d="M5.5 13v3M9.5 0v10M16.5 0v7M38.5 0v8" transform="translate(230 111)" stroke="#303030"/><rect x="276" y="113" width="45" height="15" fill="#00FF00"/><use href="#ft6" x="276" y="108"/><use href="#fb3" x="276" y="128"/><path d="M32.5 0v8M31.5 0v6M27.5 10v5M9.5 10v5M26.5 0v7M9.5 12v3" transform="translate(276 113)" stroke="#303030"/><rect x="322" y="112" width="45" height="15" fill="#00FF00"/><use href="#ft3" x="322" y="107"/><use href="#fb4" x="322" y="127"/><path d="M39.5 0v5M12.5 10v5M15.5 0v9M4.5 0v5" transform="translate(322 112)" stroke="#303030"/><rect x="368" y="119" width="45" height="12" fill="#00FF00"/><use href="#ft5" x="368" y="114"/><use href="#fb7" x="368" y="131"/><path d="M33.5 6v6M1.5 0v4M36.5 0v6" transform="translate(368 119)" stroke="#303030"/><rect x="414" y="115" width="45" height="15" fill="#00FF00"/><use href="#ft7" x="414" y="110"/><use href="#fb1" x="414" y="130"/><path d="M12.5 9v6M17.5 0v5M43.5 9v6M10.5 12v3M18.5 0v10M9.5 0v4" transform="translate(414 115)" stroke="#303030"/><rect x="460" y="114" width="45" height="14" fill="#00FF00"/><use href="#ft3" x="460" y="109"/><use href="#fb1" x="460" y="128"/><path d="M11.5 0v7M22.5 0v10M4.5 10v4M40.5 0v10M34.5 0v8M40.5 10v4" transform="translate(460 114)" stroke="#303030"/><rect x="506" y="111" width="45" height="17" fill="#00FF00"/><use href="#ft0" x="506" y="106"/><use href="#fb3" x="506" y="128"/><path d="M19.5 12v5M2.5 13v4M25.5 12v5M12.5 0v8M36.5 0v5M31.5 0v8" transform="translate(506 111)" stroke="#303030"/><rect x="552" y="112" width="45" height="18" fill="#00FF00"/><use href="#ft3" x="552" y="107"/><use href="#fb0" x="552" y="130"/><path d="M8.5 12v6M13.5 0v4M35.5 0v7" transform="translate(552 112)" stroke="#303030"/><rect x="598" y="113" width="45" height="17" fill="#00FF00"/><use href="#ft0" x="598" y="108"/><use href="#fb3" x="598" y="130"/><path d="M4.5 10v7M37.5 0v7M39.5 12v5M38.5 0v6M13.5 10v7M44.5 0v9" transform="translate(598 113)" stroke="#303030"/><rect x="644" y="113" width="45" height="18" fill="#00FF00"/><use href="#ft0" x="644" y="108"/><use href="#fb5" x="644" y="131"/><path d="M26.5 0v9M15.5 15v3" transform="translate(644 113)" stroke="#303030"/><rect x="690" y="115" width="45" height="15" fill="#00FF00"/><use href="#ft3" x="690" y="110"/><use href="#fb4" x="690" y="130"/><path d="M43.5 0v9M32.5 0v5M29.5 0v8M24.5 0v10M32.5 10v5M25.5 0v10" transform="translate(690 115)" stroke="#303030"/><rect x="736" y="111" width="45" height="17" fill="#00FF00"/><use href="#ft7" x="736" y="106"/><use href="#fb3" x="736" y="128"/><path d="M44.5 0v10M29.5 0v10" transform="translate(736 111)" stroke="#303030"/><rect x="782" y="111" width="45" height="18" fill="#00FF00"/><use href="#ft2" x="782" y="106"/><use href="#fb7" x="782" y="129"/><path d="M30.5 0v6M29.5 12v6" transform="translate(782 111)" stroke="#303030"/><rect x="828" y="114" width="45" height="15" fill="#00FF00"/><use href="#ft7" x="828" y="109"/><use href="#fb6" x="828" y="129"/><path d="M21.5 12v3M25.5 0v6M14.5 0v4M15.5 0v5M16.5 0v5" transform="translate(828 114)" stroke="#303030"/><rect x="874" y="118" width="45" height="17" fill="#00FF00"/><use href="#ft1" x="874" y="113"/><use href="#fb1" x="874" y="135"/><path d="M11.5 0v8M39.5 0v10M20.5 14v3M27.5 11v6M38.5 13v4" transform="translate(874 118)" stroke="#303030"/><rect x="920" y="116" width="45" height="16" fill="#00FF00"/><use href="#ft6" x="920" y="111"/><use href="#fb5" x="920" y="132"/><path d="M31.5 12v4M31.5 0v8M36.5 10v6M38.5 12v4M16.5 0v5M17.5 0v10" transform="translate(920 116)" stroke="#303030"/><rect x="966" y="113" width="45" height="18" fill="#00FF00"/><use href="#ft6" x="966" y="108"/><use href="#fb7" x="966" y="131"/><path d="M36.5 0v4M34.5 15v3" transform="translate(966 113)" stroke="#303030"/><rect x="1012" y="117" width="45" height="16" fill="#00FF00"/><use href="#ft0" x="1012" y="112"/><use href="#fb1" x="1012" y="133"/><path d="M13.5 0v9M18.5 11v5M7.5 0v6" transform="translate(1012 117)" stroke="#303030"/><rect x="1058" y="114" width="45" height="16" fill="#00FF00"/><use href="#ft6" x="1058" y="109"/><use href="#fb5" x="1058" y="130"/><path d="M35.5 11v5M41.5 10v6M39.5 0v9M17.5 0v9M6.5 0v10M21.5 0v8" transform="translate(1058 114)" stroke="#303030"/><rect x="0" y="144" width="45" height="47" fill="#303030"/><rect x="46" y="144" width="45" height="47" fill="#303030"/><rect x="92" y="144" width="45" height="47" fill="#303030"/><rect x="138" y="144" width="45" height="47" fill="#303030"/><rect x="184" y="144" width="45" height="47" fill="#303030"/><rect x="230" y="144" width="45" height="47" fill="#303030"/><rect x="276" y="144" width="45" height="47" fill="#303030"/><rect x="322" y="144" width="45" height="47" fill="#303030"/><rect x="368" y="144" width="45" height="47" fill="#303030"/><rect x="414" y="144" width="45" height="47" fill="#303030"/><rect x="460" y="144" width="45" height="47" fill="#303030"/><rect x="506" y="144" width="45" height="47" fill="#303030"/><rect x="552" y="144" width="45" height="47" fill="#303030"/><rect x="598" y="144" width="45" height="47" fill="#303030"/><rect x="644" y="144" width="45" height="47" fill="#303030"/><rect x="690" y="144" width="45" height="47" fill="#303030"/><rect x="736" y="144" width="45" height="47" fill="#303030"/><rect x="782" y="144" width="45" height="47" fill="#303030"/><rect x="828" y="144" width="45" height="47" fill="#303030"/><rect x="874" y="144" width="45" height="47" fill="#303030"/><rect x="920" y="144" width="45" height="47" fill="#303030"/><rect x="966" y="144" width="45" height="47" fill="#303030"/><rect x="1012" y="144" width="45" height="47" fill="#303030"/><rect x="1058" y="144" width="45" height="47" fill="#303030"/><rect x="0" y="163" width="45" height="15" fill="#00FF00"/><use href="#ft3" x="0" y="158"/><use href="#fb3" x="0" y="178"/><path d="M24.5 11v4M1.5 0v7M1.5 11v4M36.5 0v8M9.5 0v7" transform="translate(0 163)" stroke="#303030"/><rect x="46" y="165" width="45" height="13" fill="#00FF00"/><use href="#ft7" x="46" y="160"/><use href="#fb2" x="46" y="178"/><path d="M19.5 0v7M24.5 0v6M25.5 0v10M25.5 0v6M17.5 10v3M15.5 8v5" transform="translate(46 165)" stroke="#303030"/><rect x="92" y="160" width="45" height="17" fill="#00FF00"/><use href="#ft2" x="92" y="155"/><use href="#fb4" x="92" y="177"/><path d="M15.5 0v6M38.5 11v6M7.5 0v4M36.5 0v10M44.5 0v9" transform="translate(92 160)" stroke="#303030"/><rect x="138" y="163" width="45" height="13" fill="#00FF00"/><use href="#ft3" x="138" y="158"/><use href="#fb1" x="138" y="176"/><path d="M44.5 0v4M3.5 0v9M26.5 0v7M18.5 10v3M18.5 0v8M8.5 7v6M42.5 0v7" transform="translate(138 163)" stroke="#303030"/><rect x="184" y="160" width="45" height="17" fill="#00FF00"/><use href="#ft1" x="184" y="155"/><use href="#fb0" x="184" y="177"/><path d="M38.5 11v6M15.5 0v5M42.5 0v6M2.5 0v8M4.5 11v6M30.5 0v9M16.5 0v4" transform="translate(184 160)" stroke="#303030"/><rect x="230" y="158" width="45" height="16" fill="#00FF00"/><use href="#ft0" x="230" y="153"/><use href="#fb1" x="230" y="174"/><path d="M36.5 0v6M21.5 0v7M20.5 0v6M14.5 10v6M37.5 11v5M22.5 12v4" transform="translate(230 158)" stroke="#303030"/><rect x="276" y="163" width="45" height="14" fill="#00FF00"/><use href="#ft3" x="276" y="158"/><use href="#fb2" x="276" y="177"/><path d="M35.5 9v5M26.5 0v5M41.5 11v3M19.5 8v6M21.5 11v3M21.5 9v5M11.5 11v3" transform="translate(276 163)" stroke="#303030"/><rect x="322" y="157" width="45" height="17" fill="#00FF00"/><use href="#ft7" x="322" y="152"/><use href="#fb7" x="322" y="174"/><path d="M23.5 11v6M12.5 0v6M38.5 0v6" transform="translate(322 157)" stroke="#303030"/><rect x="368" y="165" width="45" height="12" fill="#00FF00"/><use href="#ft6" x="368" y="160"/><use href="#fb0" x="368" y="177"/><path d="M22.5 9v3M17.5 0v6" transform="translate(368 165)" stroke="#303030"/><rect x="414" y="162" width="45" height="15" fill="#00FF00"/><use href="#ft6" x="414" y="157"/><use href="#fb0" x="414" y="177"/><path d="M9.5 11v4M37.5 11v4" transform="translate(414 162)" stroke="#303030"/><rect x="460" y="162" width="45" height="16" fill="#00FF00"/><use href="#ft4" x="460" y="157"/><use href="#fb7" x="460" y="178"/><path d="M23.5 12v4M40.5 0v7" transform="translate(460 162)" stroke="#303030"/><rect x="506" y="162" width="45" height="16" fill="#00FF00"/><use href="#ft6" x="506" y="157"/><use href="#fb7" x="506" y="178"/><path d="M28.5 0v7M11.5 0v9M18.5 10v6M44.5 9v7M13.5 11v5" transform="translate(506 162)" stroke="#303030"/><rect x="552" y="162" width="45" height="16" fill="#00FF00"/><use href="#ft3" x="552" y="157"/><use href="#fb4" x="552" y="178"/><path d="M18.5 0v5M6.5 13v3M33.5 0v9" transform="translate(552 162)" stroke="#303030"/><rect x="598" y="160" width="45" height="17" fill="#00FF00"/><use href="#ft0" x="598" y="155"/><use href="#fb0" x="598" y="177"/><path d="M32.5 10v7M1.5 0v9M11.5 13v4M43.5 14v3M44.5 11v6M41.5 10v7" transform="translate(598 160)" stroke="#303030"/><rect x="644" y="160" width="45" height="18" fill="#00FF00"/><use href="#ft5" x="644" y="155"/><use href="#fb0" x="644" y="178"/><path d="M7.5 0v9M33.5 0v8" transform="translate(644 160)" stroke="#303030"/><rect x="690" y="164" width="45" height="15" fill="#00FF00"/><use href="#ft7" x="690" y="159"/><use href="#fb2" x="690" y="179"/><path d="M32.5 11v4M20.5 0v6M41.5 0v10M34.5 8v7M34.5 0v4" transform="translate(690 164)" stroke="#303030"/><rect x="736" y="160" width="45" height="18" fill="#00FF00"/><use href="#ft1" x="736" y="155"/><use href="#fb2" x="736" y="178"/><path d="M19.5 0v5M8.5 0v4M40.5 0v5" transform="translate(736 160)" stroke="#303030"/><rect x="782" y="160" width="45" height="18" fill="#00FF00"/><use href="#ft1" x="782" y="155"/><use href="#fb3" x="782" y="178"/><path d="M13.5 13v5M12.5 0v8" transform="translate(782 160)" stroke="#303030"/><rect x="828" y="160" width="45" height="18" fill="#00FF00"/><use href="#ft1" x="828" y="155"/><use href="#fb3" x="828" y="178"/><path d="M38.5 0v9M7.5 14v4M42.5 0v5M29.5 12v6M22.5 15v3M13.5 0v9" transform="translate(828 160)" stroke="#303030"/><rect x="874" y="160" width="45" height="18" fill="#00FF00"/><use href="#ft0" x="874" y="155"/><use href="#fb1" x="874" y="178"/><path d="M6.5 0v9M16.5 15v3M14.5 0v8" transform="translate(874 160)" stroke="#303030"/><rect x="920" y="162" width="45" height="17" fill="#00FF00"/><use href="#ft5" x="920" y="157"/><use href="#fb4" x="920" y="179"/><path d="M10.5 0v9M39.5 0v7M27.5 0v10M36.5 0v6M12.5 0v7M18.5 13v4M22.5 11v6" transform="translate(920 162)" stroke="#303030"/><rect x="966" y="162" width="45" height="17" fill="#00FF00"/><use href="#ft5" x="966" y="157"/><use href="#fb3" x="966" y="179"/><path d="M30.5 10v7M9.5 13v4M21.5 0v8M2.5 0v5M18.5 14v3" transform="translate(966 162)" stroke="#303030"/><rect x="1012" y="162" width="45" height="16" fill="#00FF00"/><use href="#ft6" x="1012" y="157"/><use href="#fb2" x="1012" y="178"/><path d="M9.5 9v7M2.5 0v7M31.5 0v10M4.5 9v7M38.5 10v6" transform="translate(1012 162)" stroke="#303030"/><rect x="1058" y="164" width="45" height="16" fill="#00FF00"/><use href="#ft4" x="1058" y="159"/><use href="#fb7" x="1058" y="180"/><path d="M32.5 11v5M13.5 0v6M23.5 0v5M23.5 0v7" transform="translate(1058 164)" stroke="#303030"/><rect x="0" y="192" width="45" height="47" fill="#303030"/><rect x="46" y="192" width="45" height="47" fill="#303030"/><rect x="92" y="192" width="45" height="47" fill="#303030"/><rect x="138" y="192" width="45" height="47" fill="#303030"/><rect x="184" y="192" width="45" height="47" fill="#303030"/><rect x="230" y="192" width="45" height="47" fill="#303030"/><rect x="276" y="192" width="45" height="47" fill="#303030"/><rect x="322" y="192" width="45" height="47" fill="#303030"/><rect x="368" y="192" width="45" height="47" fill="#303030"/><rect x="414" y="192" width="45" height="47" fill="#303030"/><rect x="460" y="192" width="45" height="47" fill="#303030"/><rect x="506" y="192" width="45" height="47" fill="#303030"/><rect x="552" y="192" width="45" height="47" fill="#303030"/><rect x="598" y="192" width="45" height="47" fill="#303030"/><rect x="644" y="192" width="45" height="47" fill="#303030"/><rect x="690" y="192" width="45" height="47" fill="#303030"/><rect x="736" y="192" width="45" height="47" fill="#303030"/><rect x="782" y="192" width="45" height="47" fill="#303030"/><rect x="828" y="192" width="45" height="47" fill="#303030"/><rect x="874" y="192" width="45" height="47" fill="#303030"/><rect x="920" y="192" width="45" height="47" fill="#303030"/><rect x="966" y="192" width="45" height="47" fill="#303030"/><rect x="1012" y="192" width="45" height="47" fill="#303030"/><rect x="1058" y="192" width="45" height="47" fill="#303030"/><rect x="0" y="209" width="45" height="16" fill="#00FF00"/><use href="#ft1" x="0" y="204"/><use href="#fb0" x="0" y="225"/><path d="M30.5 0v6M25.5 0v5M5.5 0v5M40.5 12v4M37.5 0v5M25.5 12v4" transform="translate(0 209)" stroke="#303030"/><rect x="46" y="214" width="45" height="13" fill="#00FF00"/><use href="#ft1" x="46" y="209"/><use href="#fb1" x="46" y="227"/><path d="M16.5 10v3M1.5 0v5M42.5 6v7" transform="translate(46 214)" stroke="#303030"/><rect x="92" y="207" width="45" height="18" fill="#00FF00"/><use href="#ft3" x="92" y="202"/><use href="#fb4" x="92" y="225"/><path d="M25.5 0v8M2.5 0v7M22.5 0v6M28.5 0v8M34.5 13v5M27.5 0v8" transform="translate(92 207)" stroke="#303030"/><rect x="138" y="209" width="45" height="15" fill="#00FF00"/><use href="#ft5" x="138" y="204"/><use href="#fb1" x="138" y="224"/><path d="M19.5 0v8M9.5 0v5M35.5 0v6M11.5 12v3M41.5 12v3" transform="translate(138 209)" stroke="#303030"/><rect x="184" y="210" width="45" height="16" fill="#00FF00"/><use href="#ft5" x="184" y="205"/><use href="#fb4" x="184" y="226"/><path d="M19.5 0v9M39.5 0v6M26.5 0v8M23.5 10v6M8.5 11v5" transform="translate(184 210)" stroke="#303030"/><rect x="230" y="207" width="45" height="14" fill="#00FF00"/><use href="#ft7" x="230" y="202"/><use href="#fb4" x="230" y="221"/><path d="M29.5 0v6M28.5 0v6M27.5 0v5" transform="translate(230 207)" stroke="#303030"/><rect x="276" y="208" width="45" height="16" fill="#00FF00"/><use href="#ft0" x="276" y="203"/><use href="#fb4" x="276" y="224"/><path d="M15.5 0v7M42.5 13v3" transform="translate(276 208)" stroke="#303030"/><rect x="322" y="206" width="45" height="17" fill="#00FF00"/><use href="#ft1" x="322" y="201"/><use href="#fb2" x="322" y="223"/><path d="M32.5 11v6M9.5 0v4" transform="translate(322 206)" stroke="#303030"/><rect x="368" y="212" width="45" height="11" fill="#00FF00"/><use href="#ft1" x="368" y="207"/><use href="#fb1" x="368" y="223"/><path d="M4.5 0v10M5.5 0v7M11.5 6v5M11.5 6v5M3.5 0v9" transform="translate(368 212)" stroke="#303030"/><rect x="414" y="212" width="45" height="13" fill="#00FF00"/><use href="#ft2" x="414" y="207"/><use href="#fb4" x="414" y="225"/><path d="M31.5 0v7M18.5 0v4M21.5 0v8M28.5 7v6M9.5 0v9M4.5 0v9M39.5 0v8" transform="translate(414 212)" stroke="#303030"/><rect x="460" y="207" width="45" height="15" fill="#00FF00"/><use href="#ft3" x="460" y="202"/><use href="#fb5" x="460" y="222"/><path d="M18.5 0v9M2.5 10v5M22.5 11v4M30.5 0v4M16.5 11v4" transform="translate(460 207)" stroke="#303030"/><rect x="506" y="208" width="45" height="15" fill="#00FF00"/><use href="#ft4" x="506" y="203"/><use href="#fb7" x="506" y="223"/><path d="M7.5 0v8M44.5 0v4M44.5 9v6M26.5 8v7M10.5 0v6" transform="translate(506 208)" stroke="#303030"/><rect x="552" y="206" width="45" height="18" fill="#00FF00"/><use href="#ft0" x="552" y="201"/><use href="#fb1" x="552" y="224"/><path d="M12.5 0v10M13.5 0v10M44.5 0v10M43.5 0v7M17.5 0v8M23.5 11v7" transform="translate(552 206)" stroke="#303030"/><rect x="598" y="205" width="45" height="18" fill="#00FF00"/><use href="#ft6" x="598" y="200"/><use href="#fb4" x="598" y="223"/><path d="M41.5 0v8M27.5 0v5M7.5 0v10M23.5 12v6M31.5 13v5M28.5 0v9M11.5 13v5" transform="translate(598 205)" stroke="#303030"/><rect x="644" y="205" width="45" height="18" fill="#00FF00"/><use href="#ft0" x="644" y="200"/><use href="#fb5" x="644" y="223"/><path d="M31.5 15v3M13.5 15v3M19.5 0v10M12.5 0v6M1.5 14v4M21.5 12v6" transform="translate(644 205)" stroke="#303030"/><rect x="690" y="207" width="45" height="17" fill="#00FF00"/><use href="#ft4" x="690" y="202"/><use href="#fb2" x="690" y="224"/><path d="M40.5 0v5M8.5 0v8M25.5 12v5M13.5 0v6M6.5 13v4" transform="translate(690 207)" stroke="#303030"/><rect x="736" y="208" width="45" height="18" fill="#00FF00"/><use href="#ft7" x="736" y="203"/><use href="#fb6" x="736" y="226"/><path d="M6.5 0v7M18.5 14v4M29.5 0v5M17.5 0v6M18.5 0v4M14.5 0v4" transform="translate(736 208)" stroke="#303030"/><rect x="782" y="210" width="45" height="16" fill="#00FF00"/><use href="#ft0" x="782" y="205"/><use href="#fb1" x="782" y="226"/><path d="M44.5 0v8M4.5 9v7M16.5 10v6M36.5 0v10" transform="translate(782 210)" stroke="#303030"/><rect x="828" y="210" width="45" height="17" fill="#00FF00"/><use href="#ft2" x="828" y="205"/><use href="#fb0" x="828" y="227"/><path d="M2.5 0v8M12.5 13v4M41.5 0v4M29.5 0v4" transform="translate(828 210)" stroke="#303030"/><rect x="874" y="211" width="45" height="17" fill="#00FF00"/><use href="#ft2" x="874" y="206"/><use href="#fb6" x="874" y="228"/><path d="M39.5 13v4M31.5 0v9M37.5 0v7M34.5 0v7M10.5 13v4M43.5 0v5M20.5 10v7" transform="translate(874 211)" stroke="#303030"/><rect x="920" y="210" width="45" height="17" fill="#00FF00"/><use href="#ft0" x="920" y="205"/><use href="#fb4" x="920" y="227"/><path d="M26.5 14v3M20.5 0v6M22.5 0v5M10.5 0v10M6.5 0v4" transform="translate(920 210)" stroke="#303030"/><rect x="966" y="207" width="45" height="18" fill="#00FF00"/><use href="#ft0" x="966" y="202"/><use href="#fb5" x="966" y="225"/><path d="M4.5 15v3M4.5 0v10M16.5 14v4M4.5 0v7M29.5 0v10M11.5 11v7" transform="translate(966 207)" stroke="#303030"/><rect x="1012" y="207" width="45" height="18" fill="#00FF00"/><use href="#ft3" x="1012" y="202"/><use href="#fb1" x="1012" y="225"/><path d="M37.5 11v7M12.5 0v6M33.5 0v9M24.5 13v5" transform="translate(1012 207)" stroke="#303030"/><rect x="1058" y="211" width="45" height="17" fill="#00FF00"/><use href="#ft6" x="1058" y="206"/><use href="#fb2" x="1058" y="228"/><path d="M7.5 0v6M39.5 0v4M2.5 11v6M32.5 0v5M32.5 0v6M18.5 12v5M20.5 0v5" transform="translate(1058 211)" stroke="#303030"/><rect x="0" y="240" width="45" height="47" fill="#303030"/><rect x="46" y="240" width="45" height="47" fill="#303030"/><rect x="92" y="240" width="45" height="47" fill="#303030"/><rect x="138" y="240" width="45" height="47" fill="#303030"/><rect x="184" y="240" width="45" height="47" fill="#303030"/><rect x="230" y="240" width="45" height="47" fill="#303030"/><rect x="276" y="240" width="45" height="47" fill="#303030"/><rect x="322" y="240" width="45" height="47" fill="#303030"/><rect x="368" y="240" width="45" height="47" fill="#303030"/><rect x="414" y="240" width="45" height="47" fill="#303030"/><rect x="460" y="240" width="45" height="47" fill="#303030"/><rect x="506" y="240" width="45" height="47" fill="#303030"/><rect x="552" y="240" width="45" height="47" fill="#303030"/><rect x="598" y="240" width="45" height="47" fill="#303030"/><rect x="644" y="240" width="45" height="47" fill="#303030"/><rect x="690" y="240" width="45" height="47" fill="#303030"/><rect x="736" y="240" width="45" height="47" fill="#303030"/><rect x="782" y="240" width="45" height="47" fill="#303030"/><rect x="828" y="240" width="45" height="47" fill="#303030"/><rect x="874" y="240" width="45" height="47" fill="#303030"/><rect x="920" y="240" width="45" height="47" fill="#303030"/><rect x="966" y="240" width="45" height="47" fill="#303030"/><rect x="1012" y="240" width="45" height="47" fill="#303030"/><rect x="1058" y="240" width="45" height="47" fill="#303030"/><rect x="0" y="256" width="45" height="17" fill="#00FF00"/><use href="#ft2" x="0" y="251"/><use href="#fb2" x="0" y="273"/><path d="M13.5 0v4M3.5 10v7M34.5 0v8M6.5 0v10M13.5 10v7M13.5 12v5M12.5 0v8" transform="translate(0 256)" stroke="#303030"/><rect x="46" y="260" width="45" height="14" fill="#00FF00"/><use href="#ft0" x="46" y="255"/><use href="#fb2" x="46" y="274"/><path d="M18.5 0v9M35.5 0v4M14.5 10v4" transform="translate(46 260)" stroke="#303030"/><rect x="92" y="256" width="45" height="17" fill="#00FF00"/><use href="#ft5" x="92" y="251"/><use href="#fb6" x="92" y="273"/><path d="M34.5 0v5M16.5 0v5M17.5 0v9M16.5 0v5M13.5 0v6M33.5 0v6" transform="translate(92 256)" stroke="#303030"/><rect x="138" y="253" width="45" height="16" fill="#00FF00"/><use href="#ft3" x="138" y="248"/><use href="#fb4" x="138" y="269"/><path d="M10.5 12v4M33.5 13v3M37.5 0v8M11.5 0v8M6.5 13v3" transform="translate(138 253)" stroke="#303030"/><rect x="184" y="259" width="45" height="13" fill="#00FF00"/><use href="#ft1" x="184" y="254"/><use href="#fb6" x="184" y="272"/><path d="M11.5 8v5M16.5 0v9M29.5 0v7M37.5 0v10M9.5 0v5M9.5 0v9M22.5 0v9" transform="translate(184 259)" stroke="#303030"/><rect x="230" y="254" width="45" height="16" fill="#00FF00"/><use href="#ft7" x="230" y="249"/><use href="#fb3" x="230" y="270"/><path d="M6.5 9v7M19.5 10v6M32.5 9v7M2.5 13v3M39.5 10v6" transform="translate(230 254)" stroke="#303030"/><rect x="276" y="257" width="45" height="15" fill="#00FF00"/><use href="#ft7" x="276" y="252"/><use href="#fb5" x="276" y="272"/><path d="M11.5 8v7M10.5 0v9M26.5 0v8" transform="translate(276 257)" stroke="#303030"/><rect x="322" y="255" width="45" height="16" fill="#00FF00"/><use href="#ft3" x="322" y="250"/><use href="#fb3" x="322" y="271"/><path d="M3.5 9v7M24.5 0v6M14.5 0v5M24.5 11v5M34.5 0v6" transform="translate(322 255)" stroke="#303030"/><rect x="368" y="261" width="45" height="13" fill="#00FF00"/><use href="#ft3" x="368" y="256"/><use href="#fb6" x="368" y="274"/><path d="M23.5 8v5M6.5 0v10M31.5 0v10M8.5 0v9M30.5 0v5" transform="translate(368 261)" stroke="#303030"/><rect x="414" y="256" width="45" height="17" fill="#00FF00"/><use href="#ft4" x="414" y="251"/><use href="#fb1" x="414" y="273"/><path d="M1.5 0v10M31.5 10v7M27.5 0v4M12.5 0v6M38.5 0v8M28.5 14v3" transform="translate(414 256)" stroke="#303030"/><rect x="460" y="255" width="45" height="16" fill="#00FF00"/><use href="#ft5" x="460" y="250"/><use href="#fb6" x="460" y="271"/><path d="M30.5 12v4M16.5 13v3" transform="translate(460 255)" stroke="#303030"/><rect x="506" y="253" width="45" height="17" fill="#00FF00"/><use href="#ft5" x="506" y="248"/><use href="#fb0" x="506" y="270"/><path d="M32.5 0v5M6.5 0v7M11.5 12v5M42.5 0v8M32.5 0v5" transform="translate(506 253)" stroke="#303030"/><rect x="552" y="254" width="45" height="18" fill="#00FF00"/><use href="#ft4" x="552" y="249"/><use href="#fb2" x="552" y="272"/><path d="M11.5 14v4M21.5 13v5M31.5 12v6M4.5 0v5M1.5 0v4M28.5 0v6" transform="translate(552 254)" stroke="#303030"/><rect x="598" y="253" width="45" height="18" fill="#00FF00"/><use href="#ft4" x="598" y="248"/><use href="#fb0" x="598" y="271"/><path d="M1.5 13v5M22.5 15v3" transform="translate(598 253)" stroke="#303030"/><rect x="644" y="252" width="45" height="18" fill="#00FF00"/><use href="#ft6" x="644" y="247"/><use href="#fb5" x="644" y="270"/><path d="M17.5 0v4M3.5 0v10M11.5 0v4" transform="translate(644 252)" stroke="#303030"/><rect x="690" y="254" width="45" height="18" fill="#00FF00"/><use href="#ft5" x="690" y="249"/><use href="#fb6" x="690" y="272"/><path d="M23.5 13v5M27.5 0v9M2.5 0v9M14.5 0v4" transform="translate(690 254)" stroke="#303030"/><rect x="736" y="253" width="45" height="19" fill="#00FF00"/><use href="#ft1" x="736" y="248"/><use href="#fb6" x="736" y="272"/><path d="M8.5 0v5M17.5 0v8M6.5 0v8" transform="translate(736 253)" stroke="#303030"/><rect x="782" y="253" width="45" height="18" fill="#00FF00"/><use href="#ft3" x="782" y="248"/><use href="#fb4" x="782" y="271"/><path d="M10.5 0v9M10.5 0v9M14.5 0v8M9.5 0v9M12.5 0v9M38.5 0v5" transform="translate(782 253)" stroke="#303030"/><rect x="828" y="259" width="45" height="16" fill="#00FF00"/><use href="#ft6" x="828" y="254"/><use href="#fb0" x="828" y="275"/><path d="M38.5 10v6M34.5 13v3M25.5 0v6M31.5 10v6M27.5 12v4M29.5 13v3M13.5 9v7" transform="translate(828 259)" stroke="#303030"/><rect x="874" y="259" width="45" height="17" fill="#00FF00"/><use href="#ft3" x="874" y="254"/><use href="#fb5" x="874" y="276"/><path d="M4.5 0v9M7.5 0v8M6.5 0v8M6.5 0v5M28.5 12v5" transform="translate(874 259)" stroke="#303030"/><rect x="920" y="260" width="45" height="16" fill="#00FF00"/><use href="#ft1" x="920" y="255"/><use href="#fb5" x="920" y="276"/><path d="M20.5 12v4M8.5 0v7M12.5 13v3M32.5 10v6M38.5 0v6M26.5 12v4" transform="translate(920 260)" stroke="#303030"/><rect x="966" y="256" width="45" height="17" fill="#00FF00"/><use href="#ft5" x="966" y="251"/><use href="#fb1" x="966" y="273"/><path d="M28.5 11v6M18.5 13v4M1.5 13v4" transform="translate(966 256)" stroke="#303030"/><rect x="1012" y="255" width="45" height="19" fill="#00FF00"/><use href="#ft4" x="1012" y="250"/><use href="#fb4" x="1012" y="274"/><path d="M23.5 0v4M42.5 13v6M38.5 0v10M27.5 0v4M11.5 0v4" transform="translate(1012 255)" stroke="#303030"/><rect x="1058" y="260" width="45" height="17" fill="#00FF00"/><use href="#ft6" x="1058" y="255"/><use href="#fb5" x="1058" y="277"/><path d="M33.5 12v5M29.5 0v9M5.5 10v7" transform="translate(1058 260)" stroke="#303030"/><rect x="0" y="288" width="45" height="47" fill="#303030"/><rect x="46" y="288" width="45" height="47" fill="#303030"/><rect x="92" y="288" width="45" height="47" fill="#303030"/><rect x="138" y="288" width="45" height="47" fill="#303030"/><rect x="184" y="288" width="45" height="47" fill="#303030"/><rect x="230" y="288" width="45" height="47" fill="#303030"/><rect x="276" y="288" width="45" height="47" fill="#303030"/><rect x="322" y="288" width="45" height="47" fill="#303030"/><rect x="368" y="288" width="45" height="47" fill="#303030"/><rect x="414" y="288" width="45" height="47" fill="#303030"/><rect x="460" y="288" width="45" height="47" fill="#303030"/><rect x="506" y="288" width="45" height="47" fill="#303030"/><rect x="552" y="288" width="45" height="47" fill="#303030"/><rect x="598" y="288" width="45" height="47" fill="#303030"/><rect x="644" y="288" width="45" height="47" fill="#303030"/><rect x="690" y="288" width="45" height="47" fill="#303030"/><rect x="736" y="288" width="45" height="47" fill="#303030"/><rect x="782" y="288" width="45" height="47" fill="#303030"/><rect x="828" y="288" width="45" height="47" fill="#303030"/><rect x="874" y="288" width="45" height="47" fill="#303030"/><rect x="920" y="288" width="45" height="47" fill="#303030"/><rect x="966" y="288" width="45" height="47" fill="#303030"/><rect x="1012" y="288" width="45" height="47" fill="#303030"/><rect x="1058" y="288" width="45" height="47" fill="#303030"/><rect x="0" y="308" width="45" height="14" fill="#00FF00"/><use href="#ft4" x="0" y="303"/><use href="#fb2" x="0" y="322"/><path d="M32.5 0v10M33.5 10v4M8.5 0v5M16.5 9v5" transform="translate(0 308)" stroke="#303030"/><rect x="46" y="307" width="45" height="15" fill="#00FF00"/><use href="#ft6" x="46" y="302"/><use href="#fb6" x="46" y="322"/><path d="M15.5 10v5M10.5 12v3M25.5 9v6M3.5 11v4M36.5 0v5" transform="translate(46 307)" stroke="#303030"/><rect x="92" y="305" width="45" height="15" fill="#00FF00"/><use href="#ft2" x="92" y="300"/><use href="#fb4" x="92" y="320"/><path d="M37.5 0v8M6.5 10v5" transform="translate(92 305)" stroke="#303030"/><rect x="138" y="304" width="45" height="14" fill="#00FF00"/><use href="#ft0" x="138" y="299"/><use href="#fb4" x="138" y="318"/><path d="M4.5 11v3M19.5 0v6M15.5 0v8M24.5 8v6M29.5 10v4M2.5 10v4M11.5 0v7" transform="translate(138 304)" stroke="#303030"/><rect x="184" y="303" width="45" height="16" fill="#00FF00"/><use href="#ft3" x="184" y="298"/><use href="#fb6" x="184" y="319"/><path d="M14.5 10v6M4.5 0v10M22.5 13v3M11.5 0v7M3.5 0v7M16.5 0v6" transform="translate(184 303)" stroke="#303030"/><rect x="230" y="300" width="45" height="15" fill="#00FF00"/><use href="#ft5" x="230" y="295"/><use href="#fb7" x="230" y="315"/><path d="M8.5 0v7M14.5 0v7M25.5 0v4M8.5 0v8M22.5 12v3M37.5 8v7" transform="translate(230 300)" stroke="#303030"/><rect x="276" y="306" width="45" height="13" fill="#00FF00"/><use href="#ft7" x="276" y="301"/><use href="#fb3" x="276" y="319"/><path d="M34.5 0v8M23.5 6v7M25.5 0v10M29.5 0v8" transform="translate(276 306)" stroke="#303030"/><rect x="322" y="303" width="45" height="16" fill="#00FF00"/><use href="#ft7" x="322" y="298"/><use href="#fb2" x="322" y="319"/><path d="M17.5 12v4M20.5 0v5M31.5 12v4M29.5 10v6" transform="translate(322 303)" stroke="#303030"/><rect x="368" y="305" width="45" height="15" fill="#00FF00"/><use href="#ft1" x="368" y="300"/><use href="#fb4" x="368" y="320"/><path d="M14.5 8v7M30.5 0v5" transform="translate(368 305)" stroke="#303030"/><rect x="414" y="301" width="45" height="17" fill="#00FF00"/><use href="#ft5" x="414" y="296"/><use href="#fb1" x="414" y="318"/><path d="M12.5 13v4M30.5 11v6M4.5 0v10" transform="translate(414 301)" stroke="#303030"/><rect x="460" y="304" width="45" height="15" fill="#00FF00"/><use href="#ft3" x="460" y="299"/><use href="#fb4" x="460" y="319"/><path d="M35.5 9v6M22.5 0v8" transform="translate(460 304)" stroke="#303030"/><rect x="506" y="303" width="45" height="16" fill="#00FF00"/><use href="#ft3" x="506" y="298"/><use href="#fb2" x="506" y="319"/><path d="M39.5 0v6M32.5 9v7M16.5 11v5M1.5 9v7M2.5 0v7M31.5 0v8" transform="translate(506 303)" stroke="#303030"/><rect x="552" y="299" width="45" height="20" fill="#00FF00"/><use href="#ft0" x="552" y="294"/><use href="#fb3" x="552" y="319"/><path d="M11.5 0v10M37.5 16v4M9.5 0v4M3.5 0v8M44.5 0v8M7.5 13v7" transform="translate(552 299)" stroke="#303030"/><rect x="598" y="301" width="45" height="17" fill="#00FF00"/><use href="#ft1" x="598" y="296"/><use href="#fb7" x="598" y="318"/><path d="M5.5 0v5M36.5 0v5M21.5 0v6M44.5 0v10M19.5 0v4" transform="translate(598 301)" stroke="#303030"/><rect x="644" y="298" width="45" height="21" fill="#00FF00"/><use href="#ft3" x="644" y="293"/><use href="#fb6" x="644" y="319"/><path d="M18.5 0v9M12.5 0v7M6.5 0v5M34.5 0v9M28.5 0v6" transform="translate(644 298)" stroke="#303030"/><rect x="690" y="302" width="45" height="17" fill="#00FF00"/><use href="#ft6" x="690" y="297"/><use href="#fb3" x="690" y="319"/><path d="M5.5 12v5M16.5 10v7" transform="translate(690 302)" stroke="#303030"/><rect x="736" y="302" width="45" height="17" fill="#00FF00"/><use href="#ft0" x="736" y="297"/><use href="#fb1" x="736" y="319"/><path d="M30.5 13v4M41.5 13v4M3.5 0v6" transform="translate(736 302)" stroke="#303030"/><rect x="782" y="303" width="45" height="16" fill="#00FF00"/><use href="#ft3" x="782" y="298"/><use href="#fb2" x="782" y="319"/><path d="M41.5 9v7M24.5 0v4M28.5 0v8M7.5 0v9M22.5 0v7" transform="translate(782 303)" stroke="#303030"/><rect x="828" y="303" width="45" height="18" fill="#00FF00"/><use href="#ft7" x="828" y="298"/><use href="#fb0" x="828" y="321"/><path d="M6.5 12v6M24.5 15v3M14.5 12v6M16.5 0v5" transform="translate(828 303)" stroke="#303030"/><rect x="874" y="304" width="45" height="20" fill="#00FF00"/><use href="#ft3" x="874" y="299"/><use href="#fb1" x="874" y="324"/><path d="M18.5 0v4M21.5 15v5M13.5 13v7M33.5 15v5" transform="translate(874 304)" stroke="#303030"/><rect x="920" y="305" width="45" height="19" fill="#00FF00"/><use href="#ft2" x="920" y="300"/><use href="#fb7" x="920" y="324"/><path d="M38.5 0v8M40.5 0v9M27.5 0v7M8.5 0v6M15.5 14v5M8.5 0v8" transform="translate(920 305)" stroke="#303030"/><rect x="966" y="301" width="45" height="18" fill="#00FF00"/><use href="#ft5" x="966" y="296"/><use href="#fb7" x="966" y="319"/><path d="M7.5 0v8M16.5 12v6M12.5 14v4M10.5 11v7M13.5 0v4" transform="translate(966 301)" stroke="#303030"/><rect x="1012" y="302" width="45" height="18" fill="#00FF00"/><use href="#ft6" x="1012" y="297"/><use href="#fb7" x="1012" y="320"/><path d="M42.5 14v4M35.5 0v9M17.5 13v5" transform="translate(1012 302)" stroke="#303030"/><rect x="1058" y="305" width="45" height="18" fill="#00FF00"/><use href="#ft7" x="1058" y="300"/><use href="#fb7" x="1058" y="323"/><path d="M42.5 11v7M23.5 0v8M43.5 0v6M32.5 0v10" transform="translate(1058 305)" stroke="#303030"/><rect x="0" y="336" width="45" height="47" fill="#303030"/><rect x="46" y="336" width="45" height="47" fill="#303030"/><rect x="92" y="336" width="45" height="47" fill="#303030"/><rect x="138" y="336" width="45" height="47" fill="#303030"/><rect x="184" y="336" width="45" height="47" fill="#303030"/><rect x="230" y="336" width="45" height="47" fill="#303030"/><rect x="276" y="336" width="45" height="47" fill="#303030"/><rect x="322" y="336" width="45" height="47" fill="#303030"/><rect x="368" y="336" width="45" height="47" fill="#303030"/><rect x="414" y="336" width="45" height="47" fill="#303030"/><rect x="460" y="336" width="45" height="47" fill="#303030"/><rect x="506" y="336" width="45" height="47" fill="#303030"/><rect x="552" y="336" width="45" height="47" fill="#303030"/><rect x="598" y="336" width="45" height="47" fill="#303030"/><rect x="644" y="336" width="45" height="47" fill="#303030"/><rect x="690" y="336" width="45" height="47" fill="#303030"/><rect x="736" y="336" width="45" height="47" fill="#303030"/><rect x="782" y="336" width="45" height="47" fill="#303030"/><rect x="828" y="336" width="45" height="47" fill="#303030"/><rect x="874" y="336" width="45" height="47" fill="#303030"/><rect x="920" y="336" width="45" height="47" fill="#303030"/><rect x="966" y="336" width="45" height="47" fill="#303030"/><rect x="1012" y="336" width="45" height="47" fill="#303030"/><rect x="1058" y="336" width="45" height="47" fill="#303030"/><rect x="0" y="354" width="45" height="16" fill="#00FF00"/><use href="#ft3" x="0" y="349"/><use href="#fb4" x="0" y="370"/><path d="M19.5 0v7M16.5 0v10" transform="translate(0 354)" stroke="#303030"/><rect x="46" y="354" width="45" height="16" fill="#00FF00"/><use href="#ft7" x="46" y="349"/><use href="#fb3" x="46" y="370"/><path d="M15.5 0v8M4.5 0v5" transform="translate(46 354)" stroke="#303030"/><rect x="92" y="348" width="45" height="17" fill="#00FF00"/><use href="#ft7" x="92" y="343"/><use href="#fb1" x="92" y="365"/><path d="M21.5 0v4M17.5 0v9M35.5 0v5" transform="translate(92 348)" stroke="#303030"/><rect x="138" y="350" width="45" height="14" fill="#00FF00"/><use href="#ft4" x="138" y="345"/><use href="#fb3" x="138" y="364"/><path d="M24.5 10v4M32.5 7v7M30.5 0v5" transform="translate(138 350)" stroke="#303030"/><rect x="184" y="352" width="45" height="16" fill="#00FF00"/><use href="#ft5" x="184" y="347"/><use href="#fb5" x="184" y="368"/><path d="M13.5 0v7M9.5 0v8M34.5 12v4" transform="translate(184 352)" stroke="#303030"/><rect x="230" y="348" width="45" height="17" fill="#00FF00"/><use href="#ft1" x="230" y="343"/><use href="#fb2" x="230" y="365"/><path d="M16.5 0v7M29.5 0v4M29.5 13v4M21.5 0v9" transform="translate(230 348)" stroke="#303030"/><rect x="276" y="351" width="45" height="15" fill="#00FF00"/><use href="#ft3" x="276" y="346"/><use href="#fb6" x="276" y="366"/><path d="M30.5 10v5M13.5 0v6M16.5 9v6M3.5 11v4M19.5 0v10" transform="translate(276 351)" stroke="#303030"/><rect x="322" y="349" width="45" height="18" fill="#00FF00"/><use href="#ft2" x="322" y="344"/><use href="#fb3" x="322" y="367"/><path d="M38.5 0v4M43.5 0v10" transform="translate(322 349)" stroke="#303030"/><rect x="368" y="352" width="45" height="15" fill="#00FF00"/><use href="#ft6" x="368" y="347"/><use href="#fb6" x="368" y="367"/><path d="M17.5 0v7M23.5 0v5M38.5 10v5M4.5 0v4M12.5 0v7M9.5 0v5" transform="translate(368 352)" stroke="#303030"/><rect x="414" y="350" width="45" height="17" fill="#00FF00"/><use href="#ft7" x="414" y="345"/><use href="#fb6" x="414" y="367"/><path d="M42.5 10v7M40.5 12v5M35.5 10v7" transform="translate(414 350)" stroke="#303030"/><rect x="460" y="356" width="45" height="12" fill="#00FF00"/><use href="#ft3" x="460" y="351"/><use href="#fb6" x="460" y="368"/><path d="M12.5 9v3M9.5 0v9" transform="translate(460 356)" stroke="#303030"/><rect x="506" y="348" width="45" height="18" fill="#00FF00"/><use href="#ft0" x="506" y="343"/><use href="#fb6" x="506" y="366"/><path d="M43.5 0v9M29.5 12v6M40.5 0v9" transform="translate(506 348)" stroke="#303030"/><rect x="552" y="350" width="45" height="19" fill="#00FF00"/><use href="#ft0" x="552" y="345"/><use href="#fb5" x="552" y="369"/><path d="M23.5 0v7M16.5 0v5M1.5 0v7M10.5 0v10M8.5 12v7M3.5 0v7" transform="translate(552 350)" stroke="#303030"/><rect x="598" y="347" width="45" height="18" fill="#00FF00"/><use href="#ft6" x="598" y="342"/><use href="#fb6" x="598" y="365"/><path d="M41.5 12v6M14.5 0v9M30.5 11v7M2.5 12v6M1.5 0v8M6.5 15v3M22.5 11v7" transform="translate(598 347)" stroke="#303030"/><rect x="644" y="348" width="45" height="18" fill="#00FF00"/><use href="#ft3" x="644" y="343"/><use href="#fb7" x="644" y="366"/><path d="M13.5 11v7M2.5 0v6M36.5 15v3M38.5 0v9M24.5 0v9M6.5 0v6" transform="translate(644 348)" stroke="#303030"/><rect x="690" y="351" width="45" height="17" fill="#00FF00"/><use href="#ft4" x="690" y="346"/><use href="#fb6" x="690" y="368"/><path d="M15.5 14v3M24.5 0v4M24.5 0v8M18.5 13v4" transform="translate(690 351)" stroke="#303030"/><rect x="736" y="348" width="45" height="19" fill="#00FF00"/><use href="#ft0" x="736" y="343"/><use href="#fb6" x="736" y="367"/><path d="M17.5 0v4M26.5 0v7M15.5 0v10M36.5 12v7" transform="translate(736 348)" stroke="#303030"/><rect x="782" y="348" width="45" height="19" fill="#00FF00"/><use href="#ft6" x="782" y="343"/><use href="#fb2" x="782" y="367"/><path d="M35.5 0v7M25.5 13v6M3.5 0v8M34.5 13v6M24.5 0v5M17.5 12v7M37.5 0v4" transform="translate(782 348)" stroke="#303030"/><rect x="828" y="347" width="45" height="20" fill="#00FF00"/><use href="#ft2" x="828" y="342"/><use href="#fb0" x="828" y="367"/><path d="M8.5 0v7M2.5 15v5M10.5 0v8M44.5 0v4" transform="translate(828 347)" stroke="#303030"/><rect x="874" y="349" width="45" height="19" fill="#00FF00"/><use href="#ft0" x="874" y="344"/><use href="#fb1" x="874" y="368"/><path d="M32.5 0v4M32.5 0v5M1.5 0v4M3.5 0v7" transform="translate(874 349)" stroke="#303030"/><rect x="920" y="352" width="45" height="18" fill="#00FF00"/><use href="#ft6" x="920" y="347"/><use href="#fb2" x="920" y="370"/><path d="M24.5 0v7M35.5 12v6" transform="translate(920 352)" stroke="#303030"/><rect x="966" y="347" width="45" height="19" fill="#00FF00"/><use href="#ft2" x="966" y="342"/><use href="#fb0" x="966" y="366"/><path d="M12.5 0v8M10.5 15v4" transform="translate(966 347)" stroke="#303030"/><rect x="1012" y="348" width="45" height="19" fill="#00FF00"/><use href="#ft6" x="1012" y="343"/><use href="#fb5" x="1012" y="367"/><path d="M21.5 0v4M8.5 12v7M31.5 0v5M44.5 0v5M22.5 16v3M32.5 16v3M28.5 14v5" transform="translate(1012 348)" stroke="#303030"/><rect x="1058" y="352" width="45" height="18" fill="#00FF00"/><use href="#ft7" x="1058" y="347"/><use href="#fb5" x="1058" y="370"/><path d="M12.5 0v7M25.5 15v3M7.5 0v6M25.5 14v4" transform="translate(1058 352)" stroke="#303030"/><rect x="0" y="384" width="45" height="47" fill="#303030"/><rect x="46" y="384" width="45" height="47" fill="#303030"/><rect x="92" y="384" width="45" height="47" fill="#303030"/><rect x="138" y="384" width="45" height="47" fill="#303030"/><rect x="184" y="384" width="45" height="47" fill="#303030"/><rect x="230" y="384" width="45" height="47" fill="#303030"/><rect x="276" y="384" width="45" height="47" fill="#303030"/><rect x="322" y="384" width="45" height="47" fill="#303030"/><rect x="368" y="384" width="45" height="47" fill="#303030"/><rect x="414" y="384" width="45" height="47" fill="#303030"/><rect x="460" y="384" width="45" height="47" fill="#303030"/><rect x="506" y="384" width="45" height="47" fill="#303030"/><rect x="552" y="384" width="45" height="47" fill="#303030"/><rect x="598" y="384" width="45" height="47" fill="#303030"/><rect x="644" y="384" width="45" height="47" fill="#303030"/><rect x="690" y="384" width="45" height="47" fill="#303030"/><rect x="736" y="384" width="45" height="47" fill="#303030"/><rect x="782" y="384" width="45" height="47" fill="#303030"/><rect x="828" y="384" width="45" height="47" fill="#303030"/><rect x="874" y="384" width="45" height="47" fill="#303030"/><rect x="920" y="384" width="45" height="47" fill="#303030"/><rect x="966" y="384" width="45" height="47" fill="#303030"/><rect x="1012" y="384" width="45" height="47" fill="#303030"/><rect x="1058" y="384" width="45" height="47" fill="#303030"/><rect x="0" y="399" width="45" height="17" fill="#00FF00"/><use href="#ft6" x="0" y="394"/><use href="#fb4" x="0" y="416"/><path d="M34.5 14v3M41.5 0v8" transform="translate(0 399)" stroke="#303030"/><rect x="46" y="401" width="45" height="14" fill="#00FF00"/><use href="#ft6" x="46" y="396"/><use href="#fb4" x="46" y="415"/><path d="M3.5 0v5M5.5 8v6M15.5 0v4M5.5 0v8M31.5 8v6M16.5 10v4" transform="translate(46 401)" stroke="#303030"/><rect x="92" y="397" width="45" height="15" fill="#00FF00"/><use href="#ft7" x="92" y="392"/><use href="#fb0" x="92" y="412"/><path d="M30.5 0v10M42.5 0v9M6.5 10v5" transform="translate(92 397)" stroke="#303030"/><rect x="138" y="398" width="45" height="14" fill="#00FF00"/><use href="#ft0" x="138" y="393"/><use href="#fb5" x="138" y="412"/><path d="M28.5 11v3M24.5 0v7M5.5 0v7M6.5 9v5M17.5 11v3M3.5 9v5" transform="translate(138 398)" stroke="#303030"/><rect x="184" y="398" width="45" height="15" fill="#00FF00"/><use href="#ft1" x="184" y="393"/><use href="#fb0" x="184" y="413"/><path d="M32.5 8v7M23.5 0v6M27.5 0v9M8.5 0v4M20.5 0v6" transform="translate(184 398)" stroke="#303030"/><rect x="230" y="395" width="45" height="16" fill="#00FF00"/><use href="#ft0" x="230" y="390"/><use href="#fb3" x="230" y="411"/><path d="M26.5 0v7M17.5 0v10M7.5 0v6M31.5 10v6" transform="translate(230 395)" stroke="#303030"/><rect x="276" y="399" width="45" height="15" fill="#00FF00"/><use href="#ft0" x="276" y="394"/><use href="#fb2" x="276" y="414"/><path d="M39.5 0v8M12.5 12v3M7.5 11v4" transform="translate(276 399)" stroke="#303030"/><rect x="322" y="398" width="45" height="16" fill="#00FF00"/><use href="#ft2" x="322" y="393"/><use href="#fb7" x="322" y="414"/><path d="M2.5 0v4M1.5 13v3M38.5 0v4M43.5 12v4M13.5 0v8M34.5 0v6M10.5 9v7" transform="translate(322 398)" stroke="#303030"/><rect x="368" y="402" width="45" height="13" fill="#00FF00"/><use href="#ft1" x="368" y="397"/><use href="#fb3" x="368" y="415"/><path d="M1.5 0v6M27.5 10v3M27.5 0v8M27.5 0v10" transform="translate(368 402)" stroke="#303030"/><rect x="414" y="399" width="45" height="15" fill="#00FF00"/><use href="#ft4" x="414" y="394"/><use href="#fb5" x="414" y="414"/><path d="M34.5 0v10M28.5 0v6M43.5 0v6M1.5 10v5" transform="translate(414 399)" stroke="#303030"/><rect x="460" y="397" width="45" height="15" fill="#00FF00"/><use href="#ft1" x="460" y="392"/><use href="#fb2" x="460" y="412"/><path d="M6.5 0v10M6.5 0v9M41.5 0v8M3.5 0v5" transform="translate(460 397)" stroke="#303030"/><rect x="506" y="398" width="45" height="15" fill="#00FF00"/><use href="#ft1" x="506" y="393"/><use href="#fb0" x="506" y="413"/><path d="M41.5 0v5M44.5 0v5M14.5 9v6M2.5 0v10M35.5 8v7M23.5 0v8M11.5 0v9" transform="translate(506 398)" stroke="#303030"/><rect x="552" y="397" width="45" height="19" fill="#00FF00"/><use href="#ft6" x="552" y="392"/><use href="#fb6" x="552" y="416"/><path d="M32.5 0v7M41.5 12v7M28.5 0v8M16.5 0v5M33.5 0v6M41.5 16v3" transform="translate(552 397)" stroke="#303030"/><rect x="598" y="398" width="45" height="17" fill="#00FF00"/><use href="#ft3" x="598" y="393"/><use href="#fb1" x="598" y="415"/><path d="M37.5 13v4M9.5 0v9" transform="translate(598 398)" stroke="#303030"/><rect x="644" y="397" width="45" height="18" fill="#00FF00"/><use href="#ft3" x="644" y="392"/><use href="#fb1" x="644" y="415"/><path d="M35.5 0v8M10.5 0v10M44.5 0v7M16.5 0v8M25.5 0v5" transform="translate(644 397)" stroke="#303030"/><rect x="690" y="399" width="45" height="17" fill="#00FF00"/><use href="#ft4" x="690" y="394"/><use href="#fb1" x="690" y="416"/><path d="M5.5 0v4M4.5 13v4" transform="translate(690 399)" stroke="#303030"/><rect x="736" y="400" width="45" height="17" fill="#00FF00"/><use href="#ft0" x="736" y="395"/><use href="#fb5" x="736" y="417"/><path d="M12.5 14v3M21.5 0v8" transform="translate(736 400)" stroke="#303030"/><rect x="782" y="401" width="45" height="17" fill="#00FF00"/><use href="#ft6" x="782" y="396"/><use href="#fb5" x="782" y="418"/><path d="M39.5 0v8M4.5 0v7" transform="translate(782 401)" stroke="#303030"/><rect x="828" y="402" width="45" height="17" fill="#00FF00"/><use href="#ft5" x="828" y="397"/><use href="#fb0" x="828" y="419"/><path d="M43.5 14v3M38.5 13v4" transform="translate(828 402)" stroke="#303030"/><rect x="874" y="403" width="45" height="17" fill="#00FF00"/><use href="#ft7" x="874" y="398"/><use href="#fb1" x="874" y="420"/><path d="M27.5 0v5M29.5 14v3" transform="translate(874 403)" stroke="#303030"/><rect x="920" y="402" width="45" height="17" fill="#00FF00"/><use href="#ft5" x="920" y="397"/><use href="#fb7" x="920" y="419"/><path d="M33.5 0v8M21.5 12v5M43.5 11v6M15.5 0v10M43.5 0v7M38.5 11v6" transform="translate(920 402)" stroke="#303030"/><rect x="966" y="399" width="45" height="18" fill="#00FF00"/><use href="#ft2" x="966" y="394"/><use href="#fb6" x="966" y="417"/><path d="M36.5 0v10M23.5 12v6M36.5 13v5" transform="translate(966 399)" stroke="#303030"/><rect x="1012" y="394" width="45" height="20" fill="#00FF00"/><use href="#ft4" x="1012" y="389"/><use href="#fb7" x="1012" y="414"/><path d="M18.5 14v6M20.5 13v7M4.5 14v6M21.5 14v6M26.5 0v6" transform="translate(1012 394)" stroke="#303030"/><rect x="1058" y="400" width="45" height="17" fill="#00FF00"/><use href="#ft6" x="1058" y="395"/><use href="#fb4" x="1058" y="417"/><path d="M24.5 0v6M13.5 13v4M21.5 0v10M42.5 0v6M30.5 0v7" transform="translate(1058 400)" stroke="#303030"/><rect x="0" y="432" width="45" height="47" fill="#303030"/><rect x="46" y="432" width="45" height="47" fill="#303030"/><rect x="92" y="432" width="45" height="47" fill="#303030"/><rect x="138" y="432" width="45" height="47" fill="#303030"/><rect x="184" y="432" width="45" height="47" fill="#303030"/><rect x="230" y="432" width="45" height="47" fill="#303030"/><rect x="276" y="432" width="45" height="47" fill="#303030"/><rect x="322" y="432" width="45" height="47" fill="#303030"/><rect x="368" y="432" width="45" height="47" fill="#303030"/><rect x="414" y="432" width="45" height="47" fill="#303030"/><rect x="460" y="432" width="45" height="47" fill="#303030"/><rect x="506" y="432" width="45" height="47" fill="#303030"/><rect x="552" y="432" width="45" height="47" fill="#303030"/><rect x="598" y="432" width="45" height="47" fill="#303030"/><rect x="644" y="432" width="45" height="47" fill="#303030"/><rect x="690" y="432" width="45" height="47" fill="#303030"/><rect x="736" y="432" width="45" height="47" fill="#303030"/><rect x="782" y="432" width="45" height="47" fill="#303030"/><rect x="828" y="432" width="45" height="47" fill="#303030"/><rect x="874" y="432" width="45" height="47" fill="#303030"/><rect x="920" y="432" width="45" height="47" fill="#303030"/><rect x="966" y="432" width="45" height="47" fill="#303030"/><rect x="1012" y="432" width="45" height="47" fill="#303030"/><rect x="1058" y="432" width="45" height="47" fill="#303030"/><rect x="0" y="449" width="45" height="16" fill="#00FF00"/><use href="#ft3" x="0" y="444"/><use href="#fb1" x="0" y="465"/><path d="M24.5 11v5M22.5 0v10M42.5 0v6M34.5 11v5M40.5 0v7" transform="translate(0 449)" stroke="#303030"/><rect x="46" y="448" width="45" height="16" fill="#00FF00"/><use href="#ft7" x="46" y="443"/><use href="#fb3" x="46" y="464"/><path d="M44.5 0v8M7.5 11v5" transform="translate(46 448)" stroke="#303030"/><rect x="92" y="446" width="45" height="16" fill="#00FF00"/><use href="#ft7" x="92" y="441"/><use href="#fb6" x="92" y="462"/><path d="M10.5 0v5M14.5 0v6M33.5 0v6M13.5 0v10M11.5 0v9M35.5 0v7M36.5 0v9" transform="translate(92 446)" stroke="#303030"/><rect x="138" y="447" width="45" height="15" fill="#00FF00"/><use href="#ft0" x="138" y="442"/><use href="#fb7" x="138" y="462"/><path d="M10.5 0v6M11.5 10v5M16.5 0v6M3.5 8v7M19.5 12v3M39.5 9v6" transform="translate(138 447)" stroke="#303030"/><rect x="184" y="449" width="45" height="15" fill="#00FF00"/><use href="#ft2" x="184" y="444"/><use href="#fb7" x="184" y="464"/><path d="M37.5 9v6M23.5 0v9" transform="translate(184 449)" stroke="#303030"/><rect x="230" y="445" width="45" height="16" fill="#00FF00"/><use href="#ft5" x="230" y="440"/><use href="#fb4" x="230" y="461"/><path d="M36.5 13v3M12.5 0v10M33.5 0v10M25.5 0v4M18.5 0v10" transform="translate(230 445)" stroke="#303030"/><rect x="276" y="447" width="45" height="16" fill="#00FF00"/><use href="#ft4" x="276" y="442"/><use href="#fb4" x="276" y="463"/><path d="M43.5 12v4M40.5 13v3M29.5 0v10M26.5 0v5M15.5 11v5M29.5 10v6" transform="translate(276 447)" stroke="#303030"/><rect x="322" y="446" width="45" height="16" fill="#00FF00"/><use href="#ft0" x="322" y="441"/><use href="#fb3" x="322" y="462"/><path d="M21.5 0v10M12.5 13v3M6.5 0v5M28.5 0v9M37.5 9v7M20.5 0v6" transform="translate(322 446)" stroke="#303030"/><rect x="368" y="449" width="45" height="13" fill="#00FF00"/><use href="#ft3" x="368" y="444"/><use href="#fb6" x="368" y="462"/><path d="M23.5 0v4M36.5 0v5M2.5 10v3M7.5 0v4" transform="translate(368 449)" stroke="#303030"/><rect x="414" y="445" width="45" height="17" fill="#00FF00"/><use href="#ft3" x="414" y="440"/><use href="#fb7" x="414" y="462"/><path d="M37.5 0v6M20.5 0v4M22.5 0v6M38.5 14v3M7.5 0v10M12.5 14v3M14.5 12v5" transform="translate(414 445)" stroke="#303030"/><rect x="460" y="444" width="45" height="17" fill="#00FF00"/><use href="#ft7" x="460" y="439"/><use href="#fb7" x="460" y="461"/><path d="M44.5 14v3M3.5 0v6M9.5 0v7M5.5 10v7" transform="translate(460 444)" stroke="#303030"/><rect x="506" y="444" width="45" height="17" fill="#00FF00"/><use href="#ft1" x="506" y="439"/><use href="#fb4" x="506" y="461"/><path d="M16.5 0v10M4.5 12v5M9.5 0v6M16.5 0v5" transform="translate(506 444)" stroke="#303030"/><rect x="552" y="442" width="45" height="20" fill="#00FF00"/><use href="#ft6" x="552" y="437"/><use href="#fb3" x="552" y="462"/><path d="M19.5 14v6M13.5 0v4M29.5 14v6M20.5 0v9M43.5 0v4M33.5 0v8" transform="translate(552 442)" stroke="#303030"/><rect x="598" y="445" width="45" height="17" fill="#00FF00"/><use href="#ft5" x="598" y="440"/><use href="#fb7" x="598" y="462"/><path d="M9.5 0v5M5.5 13v4M41.5 0v7M18.5 0v6M11.5 10v7" transform="translate(598 445)" stroke="#303030"/><rect x="644" y="444" width="45" height="18" fill="#00FF00"/><use href="#ft5" x="644" y="439"/><use href="#fb6" x="644" y="462"/><path d="M6.5 12v6M15.5 0v9M33.5 0v8" transform="translate(644 444)" stroke="#303030"/><rect x="690" y="445" width="45" height="19" fill="#00FF00"/><use href="#ft5" x="690" y="440"/><use href="#fb5" x="690" y="464"/><path d="M44.5 0v9M33.5 0v9M1.5 0v5M26.5 16v3M30.5 0v6M12.5 0v10" transform="translate(690 445)" stroke="#303030"/><rect x="736" y="445" width="45" height="19" fill="#00FF00"/><use href="#ft7" x="736" y="440"/><use href="#fb4" x="736" y="464"/><path d="M43.5 0v8M1.5 0v8M4.5 13v6M17.5 16v3M42.5 13v6M23.5 16v3M23.5 14v5" transform="translate(736 445)" stroke="#303030"/><rect x="782" y="444" width="45" height="19" fill="#00FF00"/><use href="#ft4" x="782" y="439"/><use href="#fb3" x="782" y="463"/><path d="M4.5 0v5M18.5 16v3M44.5 15v4M10.5 16v3" transform="translate(782 444)" stroke="#303030"/><rect x="828" y="451" width="45" height="16" fill="#00FF00"/><use href="#ft3" x="828" y="446"/><use href="#fb5" x="828" y="467"/><path d="M34.5 0v10M28.5 0v7M6.5 0v7M20.5 9v7" transform="translate(828 451)" stroke="#303030"/><rect x="874" y="451" width="45" height="17" fill="#00FF00"/><use href="#ft2" x="874" y="446"/><use href="#fb3" x="874" y="468"/><path d="M34.5 10v7M22.5 0v5M35.5 0v7M11.5 0v9M36.5 0v5M39.5 11v6" transform="translate(874 451)" stroke="#303030"/><rect x="920" y="452" width="45" height="16" fill="#00FF00"/><use href="#ft7" x="920" y="447"/><use href="#fb4" x="920" y="468"/><path d="M37.5 10v6M14.5 11v5" transform="translate(920 452)" stroke="#303030"/><rect x="966" y="448" width="45" height="17" fill="#00FF00"/><use href="#ft4" x="966" y="443"/><use href="#fb1" x="966" y="465"/><path d="M29.5 11v6M23.5 13v4M22.5 0v6M26.5 0v10M6.5 11v6" transform="translate(966 448)" stroke="#303030"/><rect x="1012" y="444" width="45" height="20" fill="#00FF00"/><use href="#ft4" x="1012" y="439"/><use href="#fb3" x="1012" y="464"/><path d="M22.5 0v4M35.5 17v3" transform="translate(1012 444)" stroke="#303030"/><rect x="1058" y="448" width="45" height="18" fill="#00FF00"/><use href="#ft2" x="1058" y="443"/><use href="#fb4" x="1058" y="466"/><path d="M12.5 14v4M32.5 11v7M21.5 14v4M8.5 0v5" transform="translate(1058 448)" stroke="#303030"/><rect x="0" y="480" width="45" height="47" fill="#303030"/><rect x="46" y="480" width="45" height="47" fill="#303030"/><rect x="92" y="480" width="45" height="47" fill="#303030"/><rect x="138" y="480" width="45" height="47" fill="#303030"/><rect x="184" y="480" width="45" height="47" fill="#303030"/><rect x="230" y="480" width="45" height="47" fill="#303030"/><rect x="276" y="480" width="45" height="47" fill="#303030"/><rect x="322" y="480" width="45" height="47" fill="#303030"/><rect x="368" y="480" width="45" height="47" fill="#303030"/><rect x="414" y="480" width="45" height="47" fill="#303030"/><rect x="460" y="480" width="45" height="47" fill="#303030"/><rect x="506" y="480" width="45" height="47" fill="#303030"/><rect x="552" y="480" width="45" height="47" fill="#303030"/><rect x="598" y="480" width="45" height="47" fill="#303030"/><rect x="644" y="480" width="45" height="47" fill="#303030"/><rect x="690" y="480" width="45" height="47" fill="#303030"/><rect x="736" y="480" width="45" height="47" fill="#303030"/><rect x="782" y="480" width="45" height="47" fill="#303030"/><rect x="828" y="480" width="45" height="47" fill="#303030"/><rect x="874" y="480" width="45" height="47" fill="#303030"/><rect x="920" y="480" width="45" height="47" fill="#303030"/><rect x="966" y="480" width="45" height="47" fill="#303030"/><rect x="1012" y="480" width="45" height="47" fill="#303030"/><rect x="1058" y="480" width="45" height="47" fill="#303030"/><rect x="0" y="497" width="45" height="16" fill="#00FF00"/><use href="#ft2" x="0" y="492"/><use href="#fb4" x="0" y="513"/><path d="M14.5 13v3M27.5 0v5M4.5 0v9" transform="translate(0 497)" stroke="#303030"/><rect x="46" y="499" width="45" height="13" fill="#00FF00"/><use href="#ft0" x="46" y="494"/><use href="#fb4" x="46" y="512"/><path d="M17.5 0v5M30.5 6v7" transform="translate(46 499)" stroke="#303030"/><rect x="92" y="495" width="45" height="15" fill="#00FF00"/><use href="#ft2" x="92" y="490"/><use href="#fb7" x="92" y="510"/><path d="M15.5 0v10M1.5 10v5M30.5 0v4M43.5 10v5M8.5 0v5M44.5 10v5M22.5 8v7" transform="translate(92 495)" stroke="#303030"/><rect x="138" y="495" width="45" height="14" fill="#00FF00"/><use href="#ft0" x="138" y="490"/><use href="#fb4" x="138" y="509"/><path d="M43.5 0v4M40.5 0v4M31.5 10v4M44.5 8v6" transform="translate(138 495)" stroke="#303030"/><rect x="184" y="495" width="45" height="16" fill="#00FF00"/><use href="#ft7" x="184" y="490"/><use href="#fb7" x="184" y="511"/><path d="M3.5 0v10M20.5 9v7M35.5 0v4M1.5 0v9M3.5 0v6M9.5 0v6M32.5 0v9" transform="translate(184 495)" stroke="#303030"/><rect x="230" y="492" width="45" height="16" fill="#00FF00"/><use href="#ft2" x="230" y="487"/><use href="#fb0" x="230" y="508"/><path d="M12.5 0v10M5.5 0v4M21.5 0v8M38.5 13v3M40.5 0v7M5.5 0v5" transform="translate(230 492)" stroke="#303030"/><rect x="276" y="501" width="45" height="10" fill="#00FF00"/><use href="#ft7" x="276" y="496"/><use href="#fb1" x="276" y="511"/><path d="M26.5 0v8M33.5 7v3M38.5 0v7M41.5 0v8M6.5 0v7" transform="translate(276 501)" stroke="#303030"/><rect x="322" y="493" width="45" height="16" fill="#00FF00"/><use href="#ft6" x="322" y="488"/><use href="#fb7" x="322" y="509"/><path d="M26.5 0v10M14.5 0v5M17.5 13v3" transform="translate(322 493)" stroke="#303030"/><rect x="368" y="505" width="45" height="8" fill="#00FF00"/><use href="#ft0" x="368" y="500"/><use href="#fb2" x="368" y="513"/><path d="M30.5 5v3M34.5 3v5M40.5 2v6M1.5 0v6" transform="translate(368 505)" stroke="#303030"/><rect x="414" y="498" width="45" height="13" fill="#00FF00"/><use href="#ft4" x="414" y="493"/><use href="#fb1" x="414" y="511"/><path d="M42.5 9v4M5.5 10v3M28.5 0v8M10.5 0v5M7.5 0v6M8.5 6v7" transform="translate(414 498)" stroke="#303030"/><rect x="460" y="498" width="45" height="13" fill="#00FF00"/><use href="#ft1" x="460" y="493"/><use href="#fb6" x="460" y="511"/><path d="M11.5 0v5M3.5 0v10M41.5 9v4M40.5 8v5M11.5 0v8M37.5 0v4" transform="translate(460 498)" stroke="#303030"/><rect x="506" y="490" width="45" height="19" fill="#00FF00"/><use href="#ft3" x="506" y="485"/><use href="#fb6" x="506" y="509"/><path d="M44.5 0v4M42.5 15v4M7.5 0v7M31.5 0v5M26.5 0v9M13.5 0v10" transform="translate(506 490)" stroke="#303030"/><rect x="552" y="492" width="45" height="18" fill="#00FF00"/><use href="#ft7" x="552" y="487"/><use href="#fb4" x="552" y="510"/><path d="M31.5 12v6M10.5 0v9" transform="translate(552 492)" stroke="#303030"/><rect x="598" y="493" width="45" height="18" fill="#00FF00"/><use href="#ft6" x="598" y="488"/><use href="#fb4" x="598" y="511"/><path d="M34.5 0v8M8.5 15v3" transform="translate(598 493)" stroke="#303030"/><rect x="644" y="490" width="45" height="21" fill="#00FF00"/><use href="#ft0" x="644" y="485"/><use href="#fb1" x="644" y="511"/><path d="M11.5 18v3M3.5 17v4M10.5 0v5M23.5 0v6M1.5 0v4" transform="translate(644 490)" stroke="#303030"/><rect x="690" y="494" width="45" height="17" fill="#00FF00"/><use href="#ft3" x="690" y="489"/><use href="#fb3" x="690" y="511"/><path d="M14.5 0v10M10.5 0v9" transform="translate(690 494)" stroke="#303030"/><rect x="736" y="494" width="45" height="17" fill="#00FF00"/><use href="#ft1" x="736" y="489"/><use href="#fb2" x="736" y="511"/><path d="M3.5 12v5M40.5 11v6M29.5 14v3M17.5 0v5M41.5 0v8M27.5 0v6M1.5 0v10" transform="translate(736 494)" stroke="#303030"/><rect x="782" y="494" width="45" height="17" fill="#00FF00"/><use href="#ft2" x="782" y="489"/><use href="#fb1" x="782" y="511"/><path d="M7.5 0v5M21.5 0v7M31.5 0v10M14.5 13v4M18.5 0v5" transform="translate(782 494)" stroke="#303030"/><rect x="828" y="495" width="45" height="18" fill="#00FF00"/><use href="#ft0" x="828" y="490"/><use href="#fb6" x="828" y="513"/><path d="M40.5 0v4M8.5 12v6M29.5 0v6M16.5 11v7M26.5 0v8" transform="translate(828 495)" stroke="#303030"/><rect x="874" y="497" width="45" height="19" fill="#00FF00"/><use href="#ft7" x="874" y="492"/><use href="#fb4" x="874" y="516"/><path d="M26.5 0v9M7.5 0v9" transform="translate(874 497)" stroke="#303030"/><rect x="920" y="497" width="45" height="19" fill="#00FF00"/><use href="#ft3" x="920" y="492"/><use href="#fb4" x="920" y="516"/><path d="M14.5 0v5M8.5 12v7M44.5 0v6M18.5 13v6M9.5 0v10" transform="translate(920 497)" stroke="#303030"/><rect x="966" y="494" width="45" height="18" fill="#00FF00"/><use href="#ft4" x="966" y="489"/><use href="#fb7" x="966" y="512"/><path d="M41.5 14v4M27.5 12v6M16.5 15v3" transform="translate(966 494)" stroke="#303030"/><rect x="1012" y="489" width="45" height="21" fill="#00FF00"/><use href="#ft3" x="1012" y="484"/><use href="#fb4" x="1012" y="510"/><path d="M15.5 16v5M19.5 0v10" transform="translate(1012 489)" stroke="#303030"/><rect x="1058" y="495" width="45" height="20" fill="#00FF00"/><use href="#ft3" x="1058" y="490"/><use href="#fb6" x="1058" y="515"/><path d="M26.5 13v7M19.5 14v6M36.5 0v6M2.5 17v3M42.5 17v3M43.5 16v4M36.5 0v7" transform="translate(1058 495)" stroke="#303030"/><rect x="0" y="528" width="45" height="47" fill="#303030"/><rect x="46" y="528" width="45" height="47" fill="#303030"/><rect x="92" y="528" width="45" height="47" fill="#303030"/><rect x="138" y="528" width="45" height="47" fill="#303030"/><rect x="184" y="528" width="45" height="47" fill="#303030"/><rect x="230" y="528" width="45" height="47" fill="#303030"/><rect x="276" y="528" width="45" height="47" fill="#303030"/><rect x="322" y="528" width="45" height="47" fill="#303030"/><rect x="368" y="528" width="45" height="47" fill="#303030"/><rect x="414" y="528" width="45" height="47" fill="#303030"/><rect x="460" y="528" width="45" height="47" fill="#303030"/><rect x="506" y="528" width="45" height="47" fill="#303030"/><rect x="552" y="528" width="45" height="47" fill="#303030"/><rect x="598" y="528" width="45" height="47" fill="#303030"/><rect x="644" y="528" width="45" height="47" fill="#303030"/><rect x="690" y="528" width="45" height="47" fill="#303030"/><rect x="736" y="528" width="45" height="47" fill="#303030"/><rect x="782" y="528" width="45" height="47" fill="#303030"/><rect x="828" y="528" width="45" height="47" fill="#303030"/><rect x="874" y="528" width="45" height="47" fill="#303030"/><rect x="920" y="528" width="45" height="47" fill="#303030"/><rect x="966" y="528" width="45" height="47" fill="#303030"/><rect x="1012" y="528" width="45" height="47" fill="#303030"/><rect x="1058" y="528" width="45" height="47" fill="#303030"/><rect x="0" y="544" width="45" height="18" fill="#00FF00"/><use href="#ft3" x="0" y="539"/><use href="#fb2" x="0" y="562"/><path d="M19.5 0v8M29.5 0v7" transform="translate(0 544)" stroke="#303030"/><rect x="46" y="546" width="45" height="14" fill="#00FF00"/><use href="#ft2" x="46" y="541"/><use href="#fb1" x="46" y="560"/><path d="M40.5 0v7M19.5 11v3M35.5 7v7M30.5 7v7" transform="translate(46 546)" stroke="#303030"/><rect x="92" y="541" width="45" height="17" fill="#00FF00"/><use href="#ft2" x="92" y="536"/><use href="#fb4" x="92" y="558"/><path d="M33.5 0v10M4.5 0v5M10.5 11v6M2.5 10v7M20.5 0v7" transform="translate(92 541)" stroke="#303030"/><rect x="138" y="542" width="45" height="14" fill="#00FF00"/><use href="#ft4" x="138" y="537"/><use href="#fb7" x="138" y="556"/><path d="M25.5 0v5M17.5 0v7M34.5 0v8M28.5 0v4M3.5 0v6M37.5 0v8M40.5 0v7" transform="translate(138 542)" stroke="#303030"/><rect x="184" y="543" width="45" height="16" fill="#00FF00"/><use href="#ft7" x="184" y="538"/><use href="#fb4" x="184" y="559"/><path d="M42.5 0v5M33.5 10v6" transform="translate(184 543)" stroke="#303030"/><rect x="230" y="540" width="45" height="16" fill="#00FF00"/><use href="#ft6" x="230" y="535"/><use href="#fb4" x="230" y="556"/><path d="M4.5 0v7M28.5 10v6M42.5 0v4" transform="translate(230 540)" stroke="#303030"/><rect x="276" y="542" width="45" height="15" fill="#00FF00"/><use href="#ft7" x="276" y="537"/><use href="#fb7" x="276" y="557"/><path d="M33.5 0v4M35.5 0v8M6.5 9v6M31.5 11v4M14.5 0v10" transform="translate(276 542)" stroke="#303030"/><rect x="322" y="539" width="45" height="17" fill="#00FF00"/><use href="#ft0" x="322" y="534"/><use href="#fb6" x="322" y="556"/><path d="M5.5 0v4M6.5 11v6M25.5 10v7M11.5 0v8M25.5 0v4M2.5 0v5M31.5 0v9" transform="translate(322 539)" stroke="#303030"/><rect x="368" y="552" width="45" height="9" fill="#00FF00"/><use href="#ft5" x="368" y="547"/><use href="#fb4" x="368" y="561"/><path d="M25.5 0v10M15.5 0v8M3.5 0v9M40.5 0v9" transform="translate(368 552)" stroke="#303030"/><rect x="414" y="542" width="45" height="17" fill="#00FF00"/><use href="#ft1" x="414" y="537"/><use href="#fb3" x="414" y="559"/><path d="M29.5 0v5M38.5 11v6M10.5 12v5" transform="translate(414 542)" stroke="#303030"/><rect x="460" y="544" width="45" height="15" fill="#00FF00"/><use href="#ft0" x="460" y="539"/><use href="#fb4" x="460" y="559"/><path d="M37.5 0v6M34.5 0v10M4.5 12v3M39.5 0v9M25.5 0v9M11.5 9v6M40.5 0v4" transform="translate(460 544)" stroke="#303030"/><rect x="506" y="536" width="45" height="18" fill="#00FF00"/><use href="#ft0" x="506" y="531"/><use href="#fb2" x="506" y="554"/><path d="M7.5 0v8M41.5 0v6M17.5 0v8M26.5 0v8M39.5 0v8" transform="translate(506 536)" stroke="#303030"/><rect x="552" y="540" width="45" height="18" fill="#00FF00"/><use href="#ft7" x="552" y="535"/><use href="#fb4" x="552" y="558"/><path d="M23.5 0v9M39.5 0v5M19.5 0v10M31.5 14v4M25.5 15v3" transform="translate(552 540)" stroke="#303030"/><rect x="598" y="537" width="45" height="20" fill="#00FF00"/><use href="#ft6" x="598" y="532"/><use href="#fb7" x="598" y="557"/><path d="M18.5 0v6M41.5 16v4M17.5 0v10M30.5 15v5M10.5 16v4M6.5 17v3M8.5 0v6" transform="translate(598 537)" stroke="#303030"/><rect x="644" y="540" width="45" height="18" fill="#00FF00"/><use href="#ft7" x="644" y="535"/><use href="#fb5" x="644" y="558"/><path d="M24.5 11v7M39.5 12v6M24.5 0v5M26.5 0v5M37.5 0v9" transform="translate(644 540)" stroke="#303030"/><rect x="690" y="543" width="45" height="17" fill="#00FF00"/><use href="#ft5" x="690" y="538"/><use href="#fb5" x="690" y="560"/><path d="M1.5 0v6M14.5 11v6" transform="translate(690 543)" stroke="#303030"/><rect x="736" y="540" width="45" height="19" fill="#00FF00"/><use href="#ft1" x="736" y="535"/><use href="#fb2" x="736" y="559"/><path d="M1.5 14v5M34.5 0v8M33.5 0v7" transform="translate(736 540)" stroke="#303030"/><rect x="782" y="540" width="45" height="19" fill="#00FF00"/><use href="#ft6" x="782" y="535"/><use href="#fb7" x="782" y="559"/><path d="M35.5 0v8M39.5 14v5M40.5 15v4M30.5 14v5" transform="translate(782 540)" stroke="#303030"/><rect x="828" y="539" width="45" height="20" fill="#00FF00"/><use href="#ft6" x="828" y="534"/><use href="#fb0" x="828" y="559"/><path d="M32.5 0v7M34.5 17v3" transform="translate(828 539)" stroke="#303030"/><rect x="874" y="540" width="45" height="20" fill="#00FF00"/><use href="#ft1" x="874" y="535"/><use href="#fb5" x="874" y="560"/><path d="M43.5 14v6M16.5 0v8M1.5 0v5M26.5 14v6" transform="translate(874 540)" stroke="#303030"/><rect x="920" y="544" width="45" height="18" fill="#00FF00"/><use href="#ft5" x="920" y="539"/><use href="#fb1" x="920" y="562"/><path d="M8.5 0v4M42.5 0v4M26.5 14v4M44.5 0v5M15.5 0v5" transform="translate(920 544)" stroke="#303030"/><rect x="966" y="539" width="45" height="20" fill="#00FF00"/><use href="#ft0" x="966" y="534"/><use href="#fb7" x="966" y="559"/><path d="M44.5 0v10M16.5 0v4M42.5 0v9M16.5 17v3M22.5 0v8M39.5 0v6" transform="translate(966 539)" stroke="#303030"/><rect x="1012" y="540" width="45" height="21" fill="#00FF00"/><use href="#ft0" x="1012" y="535"/><use href="#fb3" x="1012" y="561"/><path d="M23.5 15v6M11.5 14v7" transform="translate(1012 540)" stroke="#303030"/><rect x="1058" y="543" width="45" height="19" fill="#00FF00"/><use href="#ft5" x="1058" y="538"/><use href="#fb7" x="1058" y="562"/><path d="M7.5 0v9M15.5 0v10M7.5 0v10M19.5 13v6M35.5 0v6M30.5 16v3" transform="translate(1058 543)" stroke="#303030"/><rect x="0" y="576" width="45" height="47" fill="#303030"/><rect x="46" y="576" width="45" height="47" fill="#303030"/><rect x="92" y="576" width="45" height="47" fill="#303030"/><rect x="138" y="576" width="45" height="47" fill="#303030"/><rect x="184" y="576" width="45" height="47" fill="#303030"/><rect x="230" y="576" width="45" height="47" fill="#303030"/><rect x="276" y="576" width="45" height="47" fill="#303030"/><rect x="322" y="576" width="45" height="47" fill="#303030"/><rect x="368" y="576" width="45" height="47" fill="#303030"/><rect x="414" y="576" width="45" height="47" fill="#303030"/><rect x="460" y="576" width="45" height="47" fill="#303030"/><rect x="506" y="576" width="45" height="47" fill="#303030"/><rect x="552" y="576" width="45" height="47" fill="#303030"/><rect x="598" y="576" width="45" height="47" fill="#303030"/><rect x="644" y="576" width="45" height="47" fill="#303030"/><rect x="690" y="576" width="45" height="47" fill="#303030"/><rect x="736" y="576" width="45" height="47" fill="#303030"/><rect x="782" y="576" width="45" height="47" fill="#303030"/><rect x="828" y="576" width="45" height="47" fill="#303030"/><rect x="874" y="576" width="45" height="47" fill="#303030"/><rect x="920" y="576" width="45" height="47" fill="#303030"/><rect x="966" y="576" width="45" height="47" fill="#303030"/><rect x="1012" y="576" width="45" height="47" fill="#303030"/><rect x="1058" y="576" width="45" height="47" fill="#303030"/><rect x="0" y="592" width="45" height="17" fill="#00FF00"/><use href="#ft7" x="0" y="587"/><use href="#fb0" x="0" y="609"/><path d="M38.5 0v9M33.5 11v6M33.5 0v10M1.5 0v8" transform="translate(0 592)" stroke="#303030"/><rect x="46" y="594" width="45" height="15" fill="#00FF00"/><use href="#ft4" x="46" y="589"/><use href="#fb2" x="46" y="609"/><path d="M42.5 0v8M13.5 0v9M13.5 8v7M18.5 11v4M39.5 8v7M41.5 0v4" transform="translate(46 594)" stroke="#303030"/><rect x="92" y="589" width="45" height="15" fill="#00FF00"/><use href="#ft7" x="92" y="584"/><use href="#fb7" x="92" y="604"/><path d="M39.5 0v8M24.5 0v4M25.5 0v5M32.5 0v8M17.5 12v3M28.5 0v8" transform="translate(92 589)" stroke="#303030"/><rect x="138" y="590" width="45" height="15" fill="#00FF00"/><use href="#ft0" x="138" y="585"/><use href="#fb3" x="138" y="605"/><path d="M10.5 8v7M32.5 0v4M29.5 0v4M19.5 0v9" transform="translate(138 590)" stroke="#303030"/><rect x="184" y="591" width="45" height="16" fill="#00FF00"/><use href="#ft2" x="184" y="586"/><use href="#fb4" x="184" y="607"/><path d="M17.5 0v8M8.5 0v7M27.5 13v3M10.5 0v9M14.5 0v7" transform="translate(184 591)" stroke="#303030"/><rect x="230" y="586" width="45" height="17" fill="#00FF00"/><use href="#ft0" x="230" y="581"/><use href="#fb6" x="230" y="603"/><path d="M5.5 14v3M4.5 11v6M19.5 0v5M10.5 0v7M10.5 11v6M9.5 10v7" transform="translate(230 586)" stroke="#303030"/><rect x="276" y="590" width="45" height="16" fill="#00FF00"/><use href="#ft3" x="276" y="585"/><use href="#fb1" x="276" y="606"/><path d="M35.5 13v3M7.5 10v6M37.5 10v6" transform="translate(276 590)" stroke="#303030"/><rect x="322" y="587" width="45" height="16" fill="#00FF00"/><use href="#ft1" x="322" y="582"/><use href="#fb2" x="322" y="603"/><path d="M23.5 0v4M44.5 0v10M13.5 12v4M15.5 0v4M19.5 11v5" transform="translate(322 587)" stroke="#303030"/><rect x="368" y="591" width="45" height="14" fill="#00FF00"/><use href="#ft4" x="368" y="586"/><use href="#fb4" x="368" y="605"/><path d="M10.5 8v6M32.5 8v6M36.5 0v4M1.5 0v7M41.5 0v7M35.5 0v7" transform="translate(368 591)" stroke="#303030"/><rect x="414" y="590" width="45" height="15" fill="#00FF00"/><use href="#ft7" x="414" y="585"/><use href="#fb7" x="414" y="605"/><path d="M41.5 11v4M8.5 0v9M34.5 0v6" transform="translate(414 590)" stroke="#303030"/><rect x="460" y="592" width="45" height="13" fill="#00FF00"/><use href="#ft7" x="460" y="587"/><use href="#fb2" x="460" y="605"/><path d="M21.5 8v5M33.5 0v9M29.5 7v6M14.5 7v6M33.5 0v9" transform="translate(460 592)" stroke="#303030"/><rect x="506" y="586" width="45" height="17" fill="#00FF00"/><use href="#ft3" x="506" y="581"/><use href="#fb2" x="506" y="603"/><path d="M11.5 13v4M11.5 14v3" transform="translate(506 586)" stroke="#303030"/><rect x="552" y="589" width="45" height="19" fill="#00FF00"/><use href="#ft4" x="552" y="584"/><use href="#fb6" x="552" y="608"/><path d="M15.5 16v3M32.5 16v3M15.5 0v4M14.5 14v5M9.5 16v3M19.5 0v9M22.5 0v7" transform="translate(552 589)" stroke="#303030"/><rect x="598" y="588" width="45" height="19" fill="#00FF00"/><use href="#ft4" x="598" y="583"/><use href="#fb0" x="598" y="607"/><path d="M32.5 15v4M43.5 0v10M38.5 0v4M23.5 16v3M37.5 13v6" transform="translate(598 588)" stroke="#303030"/><rect x="644" y="587" width="45" height="18" fill="#00FF00"/><use href="#ft4" x="644" y="582"/><use href="#fb7" x="644" y="605"/><path d="M12.5 0v7M22.5 0v8M11.5 0v6" transform="translate(644 587)" stroke="#303030"/><rect x="690" y="590" width="45" height="18" fill="#00FF00"/><use href="#ft7" x="690" y="585"/><use href="#fb7" x="690" y="608"/><path d="M29.5 0v5M32.5 0v5M10.5 15v3M37.5 15v3M34.5 0v7" transform="translate(690 590)" stroke="#303030"/><rect x="736" y="582" width="45" height="22" fill="#00FF00"/><use href="#ft5" x="736" y="577"/><use href="#fb6" x="736" y="604"/><path d="M34.5 18v4M42.5 0v4" transform="translate(736 582)" stroke="#303030"/><rect x="782" y="590" width="45" height="16" fill="#00FF00"/><use href="#ft5" x="782" y="585"/><use href="#fb3" x="782" y="606"/><path d="M20.5 0v6M40.5 0v10M1.5 0v9M6.5 0v6M12.5 11v5M18.5 13v3M11.5 0v5" transform="translate(782 590)" stroke="#303030"/><rect x="828" y="585" width="45" height="20" fill="#00FF00"/><use href="#ft3" x="828" y="580"/><use href="#fb6" x="828" y="605"/><path d="M39.5 14v6M11.5 15v5M14.5 0v9M12.5 14v6M26.5 0v5" transform="translate(828 585)" stroke="#303030"/><rect x="874" y="587" width="45" height="20" fill="#00FF00"/><use href="#ft6" x="874" y="582"/><use href="#fb0" x="874" y="607"/><path d="M21.5 16v4M17.5 0v6M37.5 16v4M35.5 17v3M26.5 13v7" transform="translate(874 587)" stroke="#303030"/><rect x="920" y="589" width="45" height="19" fill="#00FF00"/><use href="#ft7" x="920" y="584"/><use href="#fb6" x="920" y="608"/><path d="M8.5 12v7M22.5 0v4M37.5 16v3M16.5 0v7M21.5 12v7" transform="translate(920 589)" stroke="#303030"/><rect x="966" y="587" width="45" height="16" fill="#00FF00"/><use href="#ft2" x="966" y="582"/><use href="#fb7" x="966" y="603"/><path d="M23.5 9v7M44.5 0v8" transform="translate(966 587)" stroke="#303030"/><rect x="1012" y="588" width="45" height="18" fill="#00FF00"/><use href="#ft2" x="1012" y="583"/><use href="#fb5" x="1012" y="606"/><path d="M37.5 0v5M8.5 0v5M36.5 0v4M23.5 11v7M28.5 0v8" transform="translate(1012 588)" stroke="#303030"/><rect x="1058" y="591" width="45" height="18" fill="#00FF00"/><use href="#ft7" x="1058" y="586"/><use href="#fb1" x="1058" y="609"/><path d="M23.5 0v7M13.5 0v5M7.5 13v5M11.5 14v4M38.5 12v6" transform="translate(1058 591)" stroke="#303030"/><rect x="0" y="624" width="45" height="47" fill="#303030"/><rect x="46" y="624" width="45" height="47" fill="#303030"/><rect x="92" y="624" width="45" height="47" fill="#303030"/><rect x="138" y="624" width="45" height="47" fill="#303030"/><rect x="184" y="624" width="45" height="47" fill="#303030"/><rect x="230" y="624" width="45" height="47" fill="#303030"/><rect x="276" y="624" width="45" height="47" fill="#303030"/><rect x="322" y="624" width="45" height="47" fill="#303030"/><rect x="368" y="624" width="45" height="47" fill="#303030"/><rect x="414" y="624" width="45" height="47" fill="#303030"/><rect x="460" y="624" width="45" height="47" fill="#303030"/><rect x="506" y="624" width="45" height="47" fill="#303030"/><rect x="552" y="624" width="45" height="47" fill="#303030"/><rect x="598" y="624" width="45" height="47" fill="#303030"/><rect x="644" y="624" width="45" height="47" fill="#303030"/><rect x="690" y="624" width="45" height="47" fill="#303030"/><rect x="736" y="624" width="45" height="47" fill="#303030"/><rect x="782" y="624" width="45" height="47" fill="#303030"/><rect x="828" y="624" width="45" height="47" fill="#303030"/><rect x="874" y="624" width="45" height="47" fill="#303030"/><rect x="920" y="624" width="45" height="47" fill="#303030"/><rect x="966" y="624" width="45" height="47" fill="#303030"/><rect x="1012" y="624" width="45" height="47" fill="#303030"/><rect x="1058" y="624" width="45" height="47" fill="#303030"/><rect x="0" y="640" width="45" height="17" fill="#00FF00"/><use href="#ft7" x="0" y="635"/><use href="#fb0" x="0" y="657"/><path d="M18.5 0v5M7.5 14v3M23.5 0v10" transform="translate(0 640)" stroke="#303030"/><rect x="46" y="642" width="45" height="13" fill="#00FF00"/><use href="#ft2" x="46" y="637"/><use href="#fb6" x="46" y="655"/><path d="M7.5 0v10M26.5 0v7M3.5 0v9M25.5 0v6" transform="translate(46 642)" stroke="#303030"/><rect x="92" y="640" width="45" height="13" fill="#00FF00"/><use href="#ft2" x="92" y="635"/><use href="#fb1" x="92" y="653"/><path d="M17.5 0v10M26.5 10v3M14.5 10v3M36.5 0v10M7.5 0v4M31.5 0v5M19.5 8v5" transform="translate(92 640)" stroke="#303030"/><rect x="138" y="635" width="45" height="17" fill="#00FF00"/><use href="#ft4" x="138" y="630"/><use href="#fb5" x="138" y="652"/><path d="M10.5 0v5M2.5 0v6M44.5 0v4M36.5 13v4M41.5 10v7M24.5 0v4M23.5 10v7" transform="translate(138 635)" stroke="#303030"/><rect x="184" y="641" width="45" height="13" fill="#00FF00"/><use href="#ft6" x="184" y="636"/><use href="#fb1" x="184" y="654"/><path d="M27.5 8v5M41.5 8v5M21.5 7v6M20.5 0v7M41.5 0v9" transform="translate(184 641)" stroke="#303030"/><rect x="230" y="635" width="45" height="17" fill="#00FF00"/><use href="#ft6" x="230" y="630"/><use href="#fb5" x="230" y="652"/><path d="M39.5 12v5M36.5 0v6M6.5 0v8M19.5 0v8" transform="translate(230 635)" stroke="#303030"/><rect x="276" y="642" width="45" height="13" fill="#00FF00"/><use href="#ft7" x="276" y="637"/><use href="#fb0" x="276" y="655"/><path d="M30.5 8v5M1.5 0v7M36.5 0v7M21.5 10v3M37.5 10v3M6.5 0v4" transform="translate(276 642)" stroke="#303030"/><rect x="322" y="634" width="45" height="18" fill="#00FF00"/><use href="#ft1" x="322" y="629"/><use href="#fb3" x="322" y="652"/><path d="M18.5 0v4M22.5 0v5M28.5 11v7M25.5 12v6M8.5 15v3M26.5 13v5" transform="translate(322 634)" stroke="#303030"/><rect x="368" y="649" width="45" height="7" fill="#00FF00"/><use href="#ft4" x="368" y="644"/><use href="#fb3" x="368" y="656"/><path d="M4.5 0v5M5.5 0v6M42.5 0v10M33.5 0v8M16.5 2v5" transform="translate(368 649)" stroke="#303030"/><rect x="414" y="644" width="45" height="13" fill="#00FF00"/><use href="#ft1" x="414" y="639"/><use href="#fb6" x="414" y="657"/><path d="M13.5 0v5M3.5 0v8M15.5 0v8M23.5 0v6M17.5 6v7M38.5 0v6" transform="translate(414 644)" stroke="#303030"/><rect x="460" y="639" width="45" height="16" fill="#00FF00"/><use href="#ft1" x="460" y="634"/><use href="#fb7" x="460" y="655"/><path d="M3.5 0v4M30.5 13v3M41.5 0v8M4.5 0v9" transform="translate(460 639)" stroke="#303030"/><rect x="506" y="633" width="45" height="17" fill="#00FF00"/><use href="#ft4" x="506" y="628"/><use href="#fb0" x="506" y="650"/><path d="M12.5 0v7M20.5 13v4M26.5 0v5M15.5 0v6M7.5 11v6M33.5 0v4M24.5 0v10" transform="translate(506 633)" stroke="#303030"/><rect x="552" y="634" width="45" height="19" fill="#00FF00"/><use href="#ft5" x="552" y="629"/><use href="#fb0" x="552" y="653"/><path d="M10.5 0v7M23.5 12v7M22.5 0v7M16.5 0v7M39.5 14v5M25.5 0v10M11.5 16v3" transform="translate(552 634)" stroke="#303030"/><rect x="598" y="635" width="45" height="19" fill="#00FF00"/><use href="#ft5" x="598" y="630"/><use href="#fb5" x="598" y="654"/><path d="M39.5 15v4M14.5 15v4M23.5 0v10M24.5 14v5M23.5 0v5" transform="translate(598 635)" stroke="#303030"/><rect x="644" y="634" width="45" height="19" fill="#00FF00"/><use href="#ft2" x="644" y="629"/><use href="#fb3" x="644" y="653"/><path d="M35.5 0v7M17.5 0v9M4.5 0v6M5.5 15v4M37.5 0v7M28.5 0v8M7.5 0v8" transform="translate(644 634)" stroke="#303030"/><rect x="690" y="636" width="45" height="18" fill="#00FF00"/><use href="#ft6" x="690" y="631"/><use href="#fb2" x="690" y="654"/><path d="M36.5 0v10M33.5 14v4M23.5 0v5M21.5 0v5M43.5 0v9" transform="translate(690 636)" stroke="#303030"/><rect x="736" y="631" width="45" height="21" fill="#00FF00"/><use href="#ft2" x="736" y="626"/><use href="#fb1" x="736" y="652"/><path d="M1.5 0v7M22.5 0v10M25.5 0v7M26.5 17v4M2.5 14v7M2.5 0v6" transform="translate(736 631)" stroke="#303030"/><rect x="782" y="634" width="45" height="20" fill="#00FF00"/><use href="#ft6" x="782" y="629"/><use href="#fb3" x="782" y="654"/><path d="M27.5 17v3M9.5 15v5M15.5 0v10M36.5 15v5M20.5 0v10M4.5 0v8" transform="translate(782 634)" stroke="#303030"/><rect x="828" y="635" width="45" height="20" fill="#00FF00"/><use href="#ft2" x="828" y="630"/><use href="#fb3" x="828" y="655"/><path d="M10.5 14v6M8.5 16v4" transform="translate(828 635)" stroke="#303030"/><rect x="874" y="634" width="45" height="20" fill="#00FF00"/><use href="#ft4" x="874" y="629"/><use href="#fb7" x="874" y="654"/><path d="M7.5 15v5M11.5 0v8M34.5 16v4" transform="translate(874 634)" stroke="#303030"/><rect x="920" y="638" width="45" height="18" fill="#00FF00"/><use href="#ft0" x="920" y="633"/><use href="#fb7" x="920" y="656"/><path d="M3.5 14v4M2.5 0v6M14.5 0v10M17.5 13v5M41.5 15v3M5.5 11v7" transform="translate(920 638)" stroke="#303030"/><rect x="966" y="636" width="45" height="18" fill="#00FF00"/><use href="#ft2" x="966" y="631"/><use href="#fb1" x="966" y="654"/><path d="M1.5 15v3M21.5 0v8M18.5 0v7M35.5 15v3" transform="translate(966 636)" stroke="#303030"/><rect x="1012" y="635" width="45" height="19" fill="#00FF00"/><use href="#ft5" x="1012" y="630"/><use href="#fb4" x="1012" y="654"/><path d="M17.5 12v7M9.5 14v5M9.5 13v6" transform="translate(1012 635)" stroke="#303030"/><rect x="1058" y="637" width="45" height="21" fill="#00FF00"/><use href="#ft6" x="1058" y="632"/><use href="#fb4" x="1058" y="658"/><path d="M43.5 17v4M40.5 14v7M20.5 14v7" transform="translate(1058 637)" stroke="#303030"/><rect x="0" y="672" width="45" height="47" fill="#303030"/><rect x="46" y="672" width="45" height="47" fill="#303030"/><rect x="92" y="672" width="45" height="47" fill="#303030"/><rect x="138" y="672" width="45" height="47" fill="#303030"/><rect x="184" y="672" width="45" height="47" fill="#303030"/><rect x="230" y="672" width="45" height="47" fill="#303030"/><rect x="276" y="672" width="45" height="47" fill="#303030"/><rect x="322" y="672" width="45" height="47" fill="#303030"/><rect x="368" y="672" width="45" height="47" fill="#303030"/><rect x="414" y="672" width="45" height="47" fill="#303030"/><rect x="460" y="672" width="45" height="47" fill="#303030"/><rect x="506" y="672" width="45" height="47" fill="#303030"/><rect x="552" y="672" width="45" height="47" fill="#303030"/><rect x="598" y="672" width="45" height="47" fill="#303030"/><rect x="644" y="672" width="45" height="47" fill="#303030"/><rect x="690" y="672" width="45" height="47" fill="#303030"/><rect x="736" y="672" width="45" height="47" fill="#303030"/><rect x="782" y="672" width="45" height="47" fill="#303030"/><rect x="828" y="672" width="45" height="47" fill="#303030"/><rect x="874" y="672" width="45" height="47" fill="#303030"/><rect x="920" y="672" width="45" height="47" fill="#303030"/><rect x="966" y="672" width="45" height="47" fill="#303030"/><rect x="1012" y="672" width="45" height="47" fill="#303030"/><rect x="1058" y="672" width="45" height="47" fill="#303030"/><rect x="0" y="689" width="45" height="16" fill="#00FF00"/><use href="#ft4" x="0" y="684"/><use href="#fb3" x="0" y="705"/><path d="M23.5 0v6M8.5 0v10" transform="translate(0 689)" stroke="#303030"/><rect x="46" y="689" width="45" height="16" fill="#00FF00"/><use href="#ft7" x="46" y="684"/><use href="#fb1" x="46" y="705"/><path d="M12.5 0v6M9.5 9v7" transform="translate(46 689)" stroke="#303030"/><rect x="92" y="685" width="45" height="16" fill="#00FF00"/><use href="#ft6" x="92" y="680"/><use href="#fb5" x="92" y="701"/><path d="M3.5 0v10M25.5 0v5" transform="translate(92 685)" stroke="#303030"/><rect x="138" y="686" width="45" height="16" fill="#00FF00"/><use href="#ft4" x="138" y="681"/><use href="#fb4" x="138" y="702"/><path d="M7.5 10v6M42.5 0v6M36.5 12v4" transform="translate(138 686)" stroke="#303030"/><rect x="184" y="687" width="45" height="16" fill="#00FF00"/><use href="#ft6" x="184" y="682"/><use href="#fb4" x="184" y="703"/><path d="M22.5 0v7M23.5 0v4M26.5 11v5M23.5 10v6M20.5 0v6M21.5 9v7" transform="translate(184 687)" stroke="#303030"/><rect x="230" y="684" width="45" height="17" fill="#00FF00"/><use href="#ft0" x="230" y="679"/><use href="#fb7" x="230" y="701"/><path d="M43.5 11v6M34.5 13v4M16.5 0v6M9.5 0v5M9.5 10v7M4.5 0v6" transform="translate(230 684)" stroke="#303030"/><rect x="276" y="689" width="45" height="14" fill="#00FF00"/><use href="#ft3" x="276" y="684"/><use href="#fb5" x="276" y="703"/><path d="M7.5 10v4M5.5 11v3M27.5 8v6M17.5 0v7M29.5 7v7M28.5 8v6" transform="translate(276 689)" stroke="#303030"/><rect x="322" y="682" width="45" height="18" fill="#00FF00"/><use href="#ft3" x="322" y="677"/><use href="#fb4" x="322" y="700"/><path d="M37.5 0v7M18.5 13v5" transform="translate(322 682)" stroke="#303030"/><rect x="368" y="695" width="45" height="9" fill="#00FF00"/><use href="#ft2" x="368" y="690"/><use href="#fb1" x="368" y="704"/><path d="M28.5 2v7M21.5 0v4M1.5 5v4M5.5 0v10M32.5 0v6" transform="translate(368 695)" stroke="#303030"/><rect x="414" y="688" width="45" height="14" fill="#00FF00"/><use href="#ft0" x="414" y="683"/><use href="#fb4" x="414" y="702"/><path d="M32.5 10v4M36.5 0v5M7.5 11v3M7.5 0v5" transform="translate(414 688)" stroke="#303030"/><rect x="460" y="686" width="45" height="14" fill="#00FF00"/><use href="#ft0" x="460" y="681"/><use href="#fb5" x="460" y="700"/><path d="M41.5 0v8M37.5 9v5M38.5 8v6M5.5 0v6M2.5 7v7M2.5 0v7M4.5 10v4" transform="translate(460 686)" stroke="#303030"/><rect x="506" y="679" width="45" height="20" fill="#00FF00"/><use href="#ft2" x="506" y="674"/><use href="#fb1" x="506" y="699"/><path d="M26.5 14v6M10.5 13v7M26.5 13v7M7.5 0v10M11.5 16v4M44.5 0v9M9.5 0v9" transform="translate(506 679)" stroke="#303030"/><rect x="552" y="682" width="45" height="20" fill="#00FF00"/><use href="#ft5" x="552" y="677"/><use href="#fb6" x="552" y="702"/><path d="M23.5 17v3M23.5 0v10M34.5 0v7" transform="translate(552 682)" stroke="#303030"/><rect x="598" y="685" width="45" height="18" fill="#00FF00"/><use href="#ft3" x="598" y="680"/><use href="#fb2" x="598" y="703"/><path d="M19.5 14v4M8.5 0v5M12.5 14v4M13.5 0v9M2.5 0v5M35.5 14v4" transform="translate(598 685)" stroke="#303030"/><rect x="644" y="682" width="45" height="20" fill="#00FF00"/><use href="#ft5" x="644" y="677"/><use href="#fb4" x="644" y="702"/><path d="M13.5 0v7M28.5 0v7M8.5 0v5" transform="translate(644 682)" stroke="#303030"/><rect x="690" y="684" width="45" height="18" fill="#00FF00"/><use href="#ft4" x="690" y="679"/><use href="#fb7" x="690" y="702"/><path d="M33.5 0v4M31.5 0v4M28.5 12v6" transform="translate(690 684)" stroke="#303030"/><rect x="736" y="681" width="45" height="19" fill="#00FF00"/><use href="#ft5" x="736" y="676"/><use href="#fb1" x="736" y="700"/><path d="M19.5 12v7M24.5 12v7M5.5 15v4M41.5 15v4M4.5 0v7M39.5 0v6" transform="translate(736 681)" stroke="#303030"/><rect x="782" y="682" width="45" height="19" fill="#00FF00"/><use href="#ft1" x="782" y="677"/><use href="#fb2" x="782" y="701"/><path d="M6.5 0v5M44.5 16v3M6.5 0v8M33.5 16v3M18.5 0v7" transform="translate(782 682)" stroke="#303030"/><rect x="828" y="683" width="45" height="20" fill="#00FF00"/><use href="#ft3" x="828" y="678"/><use href="#fb6" x="828" y="703"/><path d="M42.5 0v5M26.5 14v6M34.5 0v9M13.5 0v10M44.5 0v7" transform="translate(828 683)" stroke="#303030"/><rect x="874" y="682" width="45" height="21" fill="#00FF00"/><use href="#ft5" x="874" y="677"/><use href="#fb1" x="874" y="703"/><path d="M16.5 16v5M39.5 18v3" transform="translate(874 682)" stroke="#303030"/><rect x="920" y="683" width="45" height="20" fill="#00FF00"/><use href="#ft0" x="920" y="678"/><use href="#fb4" x="920" y="703"/><path d="M37.5 14v6M5.5 0v9M7.5 0v7M19.5 0v6M5.5 0v7M42.5 0v9M42.5 0v10" transform="translate(920 683)" stroke="#303030"/><rect x="966" y="682" width="45" height="17" fill="#00FF00"/><use href="#ft1" x="966" y="677"/><use href="#fb7" x="966" y="699"/><path d="M43.5 0v10M22.5 0v7" transform="translate(966 682)" stroke="#303030"/><rect x="1012" y="682" width="45" height="20" fill="#00FF00"/><use href="#ft4" x="1012" y="677"/><use href="#fb6" x="1012" y="702"/><path d="M10.5 16v4M2.5 16v4M3.5 0v7M25.5 0v7" transform="translate(1012 682)" stroke="#303030"/><rect x="1058" y="685" width="45" height="19" fill="#00FF00"/><use href="#ft5" x="1058" y="680"/><use href="#fb1" x="1058" y="704"/><path d="M6.5 13v6M10.5 0v9M37.5 12v7M24.5 15v4M29.5 0v7M1.5 16v3M35.5 0v8" transform="translate(1058 685)" stroke="#303030"/><rect x="0" y="720" width="45" height="47" fill="#303030"/><rect x="46" y="720" width="45" height="47" fill="#303030"/><rect x="92" y="720" width="45" height="47" fill="#303030"/><rect x="138" y="720" width="45" height="47" fill="#303030"/><rect x="184" y="720" width="45" height="47" fill="#303030"/><rect x="230" y="720" width="45" height="47" fill="#303030"/><rect x="276" y="720" width="45" height="47" fill="#303030"/><rect x="322" y="720" width="45" height="47" fill="#303030"/><rect x="368" y="720" width="45" height="47" fill="#303030"/><rect x="414" y="720" width="45" height="47" fill="#303030"/><rect x="460" y="720" width="45" height="47" fill="#303030"/><rect x="506" y="720" width="45" height="47" fill="#303030"/><rect x="552" y="720" width="45" height="47" fill="#303030"/><rect x="598" y="720" width="45" height="47" fill="#303030"/><rect x="644" y="720" width="45" height="47" fill="#303030"/><rect x="690" y="720" width="45" height="47" fill="#303030"/><rect x="736" y="720" width="45" height="47" fill="#303030"/><rect x="782" y="720" width="45" height="47" fill="#303030"/><rect x="828" y="720" width="45" height="47" fill="#303030"/><rect x="874" y="720" width="45" height="47" fill="#303030"/><rect x="920" y="720" width="45" height="47" fill="#303030"/><rect x="966" y="720" width="45" height="47" fill="#303030"/><rect x="1012" y="720" width="45" height="47" fill="#303030"/><rect x="1058" y="720" width="45" height="47" fill="#303030"/><rect x="0" y="736" width="45" height="17" fill="#00FF00"/><use href="#ft3" x="0" y="731"/><use href="#fb7" x="0" y="753"/><path d="M27.5 0v9M40.5 0v6" transform="translate(0 736)" stroke="#303030"/><rect x="46" y="739" width="45" height="15" fill="#00FF00"/><use href="#ft5" x="46" y="734"/><use href="#fb3" x="46" y="754"/><path d="M14.5 0v5M1.5 0v6M26.5 11v4M10.5 0v10M19.5 12v3" transform="translate(46 739)" stroke="#303030"/><rect x="92" y="734" width="45" height="15" fill="#00FF00"/><use href="#ft1" x="92" y="729"/><use href="#fb7" x="92" y="749"/><path d="M8.5 12v3M34.5 0v9M8.5 0v8M8.5 10v5M1.5 9v6M40.5 0v4M5.5 0v8" transform="translate(92 734)" stroke="#303030"/><rect x="138" y="736" width="45" height="17" fill="#00FF00"/><use href="#ft4" x="138" y="731"/><use href="#fb6" x="138" y="753"/><path d="M41.5 0v9M3.5 10v7M35.5 12v5M41.5 0v6" transform="translate(138 736)" stroke="#303030"/><rect x="184" y="734" width="45" height="18" fill="#00FF00"/><use href="#ft2" x="184" y="729"/><use href="#fb0" x="184" y="752"/><path d="M37.5 0v4M37.5 15v3M20.5 0v4" transform="translate(184 734)" stroke="#303030"/><rect x="230" y="732" width="45" height="17" fill="#00FF00"/><use href="#ft4" x="230" y="727"/><use href="#fb7" x="230" y="749"/><path d="M5.5 12v5M28.5 11v6M44.5 13v4M28.5 13v4M4.5 0v8" transform="translate(230 732)" stroke="#303030"/><rect x="276" y="735" width="45" height="16" fill="#00FF00"/><use href="#ft1" x="276" y="730"/><use href="#fb3" x="276" y="751"/><path d="M39.5 11v5M11.5 13v3M3.5 0v4M18.5 11v5" transform="translate(276 735)" stroke="#303030"/><rect x="322" y="732" width="45" height="15" fill="#00FF00"/><use href="#ft2" x="322" y="727"/><use href="#fb6" x="322" y="747"/><path d="M24.5 10v5M42.5 11v4M12.5 8v7M40.5 0v5M9.5 0v9M41.5 0v5M36.5 9v6" transform="translate(322 732)" stroke="#303030"/><rect x="368" y="736" width="45" height="13" fill="#00FF00"/><use href="#ft5" x="368" y="731"/><use href="#fb6" x="368" y="749"/><path d="M13.5 0v6M3.5 8v5M27.5 8v5M23.5 0v5M12.5 8v5M30.5 0v10M35.5 0v10" transform="translate(368 736)" stroke="#303030"/><rect x="414" y="734" width="45" height="16" fill="#00FF00"/><use href="#ft2" x="414" y="729"/><use href="#fb6" x="414" y="750"/><path d="M11.5 11v5M32.5 11v5" transform="translate(414 734)" stroke="#303030"/><rect x="460" y="732" width="45" height="17" fill="#00FF00"/><use href="#ft1" x="460" y="727"/><use href="#fb7" x="460" y="749"/><path d="M1.5 10v7M19.5 0v4M6.5 13v4M22.5 11v6M43.5 10v7" transform="translate(460 732)" stroke="#303030"/><rect x="506" y="727" width="45" height="21" fill="#00FF00"/><use href="#ft6" x="506" y="722"/><use href="#fb4" x="506" y="748"/><path d="M11.5 0v5M27.5 0v6M36.5 0v10" transform="translate(506 727)" stroke="#303030"/><rect x="552" y="729" width="45" height="19" fill="#00FF00"/><use href="#ft5" x="552" y="724"/><use href="#fb3" x="552" y="748"/><path d="M27.5 0v9M35.5 16v3M39.5 16v3M11.5 0v5M5.5 15v4M34.5 0v4M27.5 0v9" transform="translate(552 729)" stroke="#303030"/><rect x="598" y="731" width="45" height="19" fill="#00FF00"/><use href="#ft7" x="598" y="726"/><use href="#fb3" x="598" y="750"/><path d="M4.5 15v4M30.5 0v10" transform="translate(598 731)" stroke="#303030"/><rect x="644" y="729" width="45" height="19" fill="#00FF00"/><use href="#ft1" x="644" y="724"/><use href="#fb5" x="644" y="748"/><path d="M22.5 15v4M12.5 0v10" transform="translate(644 729)" stroke="#303030"/><rect x="690" y="730" width="45" height="18" fill="#00FF00"/><use href="#ft5" x="690" y="725"/><use href="#fb0" x="690" y="748"/><path d="M44.5 11v7M43.5 12v6" transform="translate(690 730)" stroke="#303030"/><rect x="736" y="729" width="45" height="19" fill="#00FF00"/><use href="#ft4" x="736" y="724"/><use href="#fb3" x="736" y="748"/><path d="M16.5 13v6M37.5 0v4M7.5 15v4M5.5 15v4M40.5 0v7" transform="translate(736 729)" stroke="#303030"/><rect x="782" y="729" width="45" height="18" fill="#00FF00"/><use href="#ft7" x="782" y="724"/><use href="#fb1" x="782" y="747"/><path d="M37.5 0v8M11.5 12v6M36.5 0v4M10.5 15v3" transform="translate(782 729)" stroke="#303030"/><rect x="828" y="731" width="45" height="18" fill="#00FF00"/><use href="#ft3" x="828" y="726"/><use href="#fb0" x="828" y="749"/><path d="M22.5 0v10M15.5 11v7" transform="translate(828 731)" stroke="#303030"/><rect x="874" y="733" width="45" height="18" fill="#00FF00"/><use href="#ft5" x="874" y="728"/><use href="#fb3" x="874" y="751"/><path d="M14.5 12v6M16.5 0v10M39.5 0v10" transform="translate(874 733)" stroke="#303030"/><rect x="920" y="734" width="45" height="19" fill="#00FF00"/><use href="#ft3" x="920" y="729"/><use href="#fb1" x="920" y="753"/><path d="M4.5 15v4M9.5 16v3M26.5 14v5M7.5 0v6" transform="translate(920 734)" stroke="#303030"/><rect x="966" y="728" width="45" height="18" fill="#00FF00"/><use href="#ft3" x="966" y="723"/><use href="#fb3" x="966" y="746"/><path d="M36.5 14v4M23.5 0v7M35.5 11v7M17.5 11v7M37.5 0v10M30.5 0v5" transform="translate(966 728)" stroke="#303030"/><rect x="1012" y="731" width="45" height="18" fill="#00FF00"/><use href="#ft5" x="1012" y="726"/><use href="#fb2" x="1012" y="749"/><path d="M26.5 14v4M14.5 14v4M21.5 11v7M2.5 12v6M26.5 14v4" transform="translate(1012 731)" stroke="#303030"/><rect x="1058" y="731" width="45" height="19" fill="#00FF00"/><use href="#ft0" x="1058" y="726"/><use href="#fb4" x="1058" y="750"/><path d="M34.5 0v5M18.5 0v8M14.5 0v6M25.5 0v8M8.5 0v10M4.5 0v4M1.5 13v6" transform="translate(1058 731)" stroke="#303030"/><rect x="45" y="0" width="1" height="767" fill="#ECE9D8"/><rect x="91" y="0" width="1" height="767" fill="#ECE9D8"/><rect x="137" y="0" width="1" height="767" fill="#ECE9D8"/><rect x="183" y="0" width="1" height="767" fill="#ECE9D8"/><rect x="229" y="0" width="1" height="767" fill="#ECE9D8"/><rect x="275" y="0" width="1" height="767" fill="#ECE9D8"/><rect x="321" y="0" width="1" height="767" fill="#ECE9D8"/><rect x="367" y="0" width="1" height="767" fill="#ECE9D8"/><rect x="413" y="0" width="1" height="767" fill="#ECE9D8"/><rect x="459" y="0" width="1" height="767" fill="#ECE9D8"/><rect x="505" y="0" width="1" height="767" fill="#ECE9D8"/><rect x="551" y="0" width="1" height="767" fill="#ECE9D8"/><rect x="597" y="0" width="1" height="767" fill="#ECE9D8"/><rect x="643" y="0" width="1" height="767" fill="#ECE9D8"/><rect x="689" y="0" width="1" height="767" fill="#ECE9D8"/><rect x="735" y="0" width="1" height="767" fill="#ECE9D8"/><rect x="781" y="0" width="1" height="767" fill="#ECE9D8"/><rect x="827" y="0" width="1" height="767" fill="#ECE9D8"/><rect x="873" y="0" width="1" height="767" fill="#ECE9D8"/><rect x="919" y="0" width="1" height="767" fill="#ECE9D8"/><rect x="965" y="0" width="1" height="767" fill="#ECE9D8"/><rect x="1011" y="0" width="1" height="767" fill="#ECE9D8"/><rect x="1057" y="0" width="1" height="767" fill="#ECE9D8"/><rect x="0" y="47" width="1104" height="1" fill="#ECE9D8"/><rect x="0" y="95" width="1104" height="1" fill="#ECE9D8"/><rect x="0" y="143" width="1104" height="1" fill="#ECE9D8"/><rect x="0" y="191" width="1104" height="1" fill="#ECE9D8"/><rect x="0" y="239" width="1104" height="1" fill="#ECE9D8"/><rect x="0" y="287" width="1104" height="1" fill="#ECE9D8"/><rect x="0" y="335" width="1104" height="1" fill="#ECE9D8"/><rect x="0" y="383" width="1104" height="1" fill="#ECE9D8"/><rect x="0" y="431" width="1104" height="1" fill="#ECE9D8"/><rect x="0" y="479" width="1104" height="1" fill="#ECE9D8"/><rect x="0" y="527" width="1104" height="1" fill="#ECE9D8"/><rect x="0" y="575" width="1104" height="1" fill="#ECE9D8"/><rect x="0" y="623" width="1104" height="1" fill="#ECE9D8"/><rect x="0" y="671" width="1104" height="1" fill="#ECE9D8"/><rect x="0" y="719" width="1104" height="1" fill="#ECE9D8"/></svg>
<div class="ab" style="left:1186px;top:119px;width:295px;height:340px;background:#303030;border-top:1px solid #000;border-right:1px solid #000;border-bottom:1px solid #000"></div>
<div class="ab" style="left:1186px;top:120px;width:1px;height:338px;background:#00FF00"></div>
<div class="t" style="left:1187px;top:107px;font-size:11px">Ex480:Em542</div>
<div class="ab" style="left:1180px;top:119px;width:6px;height:1px;background:#000"></div>
<div class="t" style="left:1099px;top:115px;width:80px;text-align:right">5803.07</div>
<div class="ab" style="left:1180px;top:213px;width:6px;height:1px;background:#000"></div>
<div class="t" style="left:1099px;top:209px;width:80px;text-align:right">5000.00</div>
<div class="ab" style="left:1180px;top:330px;width:6px;height:1px;background:#000"></div>
<div class="t" style="left:1099px;top:326px;width:80px;text-align:right">4000.00</div>
<div class="ab" style="left:1180px;top:446px;width:6px;height:1px;background:#000"></div>
<div class="ab" style="left:1180px;top:458px;width:6px;height:1px;background:#000"></div>
<div class="t" style="left:1099px;top:454px;width:80px;text-align:right">2894.18</div>
<div class="ab" style="left:1186px;top:459px;width:1px;height:5px;background:#000"></div>
<div class="t" style="left:1146px;top:465px;width:80px;text-align:center;font-size:11px">0.0</div>
<div class="ab" style="left:1307px;top:459px;width:1px;height:5px;background:#000"></div>
<div class="t" style="left:1267px;top:465px;width:80px;text-align:center;font-size:11px">50.0</div>
<div class="ab" style="left:1427px;top:459px;width:1px;height:5px;background:#000"></div>
<div class="t" style="left:1387px;top:465px;width:80px;text-align:center;font-size:11px">1:40.0</div>
<div class="ab" style="left:1480px;top:459px;width:1px;height:5px;background:#000"></div>
<div class="t" style="left:1440px;top:465px;width:80px;text-align:center;font-size:11px">2:01.5</div>
<div class="cb" style="left:1496px;top:295px"></div><div class="t" style="left:1514px;top:296px;font-size:11px">Av.</div>
<div class="cb cbd" style="left:1496px;top:310px"></div><div class="t dis" style="left:1514px;top:311px;font-size:11px">S.D.</div>
<div class="btn" style="left:1546px;top:325px;width:34px;height:35px"><svg class="ab" style="left:-1px;top:-1px" width="33" height="36"><rect x="5.5" y="6.5" width="11" height="13" fill="#fff" stroke="#ACA899"/><rect x="8.5" y="9.5" width="12" height="14" fill="#fff" stroke="#ACA899"/><rect x="6" y="8" width="2" height="10" fill="#ACA899"/><circle cx="23" cy="24" r="6.5" fill="#ACA899"/><path d="M26 21 A3.5 3.5 0 1 0 26 27" stroke="#fff" stroke-width="2.2" fill="none"/></svg></div>
<div class="btn" style="left:1546px;top:360px;width:34px;height:35px"><svg class="ab" style="left:-1px;top:-1px" width="33" height="36"><rect x="10.5" y="8.5" width="14" height="12" fill="none" stroke="#ACA899"/><rect x="3" y="8" width="5" height="2.5" fill="#ACA899"/><rect x="3" y="18" width="5" height="2.5" fill="#ACA899"/><rect x="10" y="22" width="4" height="2.5" fill="#ACA899"/><path d="M13 31 L19.5 11 L23 11 L31 31 H25 L23.5 27 H19 L18 31Z" fill="#ACA899" stroke="#fff" stroke-width="0.8"/></svg></div>
<div class="btn" style="left:1546px;top:395px;width:34px;height:35px"><svg class="ab" style="left:-1px;top:-1px" width="33" height="36"><path d="M4 16 L7 13 H25 L28 16 V22 L23 28 H8 L4 24 Z" fill="#fff" transform="translate(1 1)"/><path d="M12.5 7.5 H25 L22.5 15 H8.5 Z" fill="#fff" stroke="#ACA899" stroke-width="1"/><path d="M4 16 L7 13 H25 L28 16 V22 L23 28 H8 L4 24 Z" fill="#ACA899"/><rect x="12" y="9" width="8" height="1.3" fill="#ACA899"/><rect x="11" y="11.5" width="8" height="1.2" fill="#ACA899"/><rect x="11" y="13.5" width="6" height="1" fill="#ACA899"/></svg></div>
<div class="ab" style="left:1176px;top:509px;width:307px;height:312px;background:#505050;border:1px solid #000"></div>
<div class="cb" style="left:1495px;top:510px"></div><div class="t" style="left:1513px;top:511px;font-size:11px">Well No.</div>
<div class="ab" style="left:1495px;top:524px;width:75px;height:15px;border:1px solid #ACA899;border-right-color:#fff;border-bottom-color:#fff"></div><div class="t" style="left:1496px;top:527px;font-size:11px;color:#FF00FF">&lt;No.1 Data&gt;</div>
<div class="cb" style="left:1499px;top:540px"></div><div class="t" style="left:1517px;top:541px;font-size:11px">Integ. Rat.</div>
<div class="cb" style="left:1499px;top:555px"></div><div class="t" style="left:1517px;top:556px;font-size:11px">Max Rat.</div>
<div class="ab" style="left:1495px;top:569px;width:75px;height:15px;border:1px solid #ACA899;border-right-color:#fff;border-bottom-color:#fff"></div><div class="t" style="left:1496px;top:572px;font-size:11px;color:#00B0C0">&lt;No.2 Data&gt;</div>
<div class="cb cbd" style="left:1499px;top:585px"></div><div class="t dis" style="left:1517px;top:586px;font-size:11px">Integ. Rat.</div>
<div class="cb cbd" style="left:1499px;top:600px"></div><div class="t dis" style="left:1517px;top:601px;font-size:11px">Max Rat.</div>
<div class="ab" style="left:1495px;top:614px;width:75px;height:15px;border:1px solid #ACA899;border-right-color:#fff;border-bottom-color:#fff"></div><div class="t" style="left:1496px;top:617px;font-size:11px;color:#B0A800">&lt;No.3 Data&gt;</div>
<div class="cb cbd" style="left:1499px;top:630px"></div><div class="t dis" style="left:1517px;top:631px;font-size:11px">Integ. Rat.</div>
<div class="cb cbd" style="left:1499px;top:645px"></div><div class="t dis" style="left:1517px;top:646px;font-size:11px">Max Rat.</div>
<div class="btn" style="left:1547px;top:664px;width:33px;height:36px"><svg class="ab" style="left:-1px;top:-1px" width="33" height="36"><rect x="10.5" y="8.5" width="14" height="13" fill="#ECE9D8" stroke="#000" stroke-width="1.2"/><path d="M13 19.0 L23 10.5" stroke="#000" stroke-width="0.9" stroke-dasharray="1.2 1"/><rect x="3.5" y="8.8" width="4.5" height="2.2" fill="#FFFF00" stroke="#000" stroke-width="1.1"/><rect x="3.5" y="19.8" width="4.5" height="2.2" fill="#FFFF00" stroke="#000" stroke-width="1.1"/><rect x="10.5" y="24.8" width="4.5" height="2.2" fill="#FFFF00" stroke="#000" stroke-width="1.1"/><path d="M8 9.9 H10.5 M8 20.9 H10.5 M12.5 21.5 V24.8" stroke="#000" stroke-width="1.1"/><path d="M19.5 16.0 H24.5 L31 32.0 H25.5 L24.8 29.5 H19.2 L18.5 32.0 H14 Z" fill="#FF0000" stroke="#C00000" stroke-width="0.5"/><circle cx="22" cy="26.0" r="1" fill="#400000"/></svg></div>
<div class="btn" style="left:1547px;top:700px;width:33px;height:34px"><svg class="ab" style="left:-1px;top:-1px" width="33" height="36"><rect x="10.5" y="8.5" width="14" height="13" fill="#ECE9D8" stroke="#ACA899" stroke-width="1.2"/><path d="M13 19.0 L23 10.5" stroke="#ACA899" stroke-width="0.9" stroke-dasharray="1.2 1"/><rect x="3.5" y="8.8" width="4.5" height="2.2" fill="#ACA899" stroke="#ACA899" stroke-width="1.1"/><rect x="3.5" y="19.8" width="4.5" height="2.2" fill="#ACA899" stroke="#ACA899" stroke-width="1.1"/><rect x="10.5" y="24.8" width="4.5" height="2.2" fill="#ACA899" stroke="#ACA899" stroke-width="1.1"/><path d="M8 9.9 H10.5 M8 20.9 H10.5 M12.5 21.5 V24.8" stroke="#ACA899" stroke-width="1.1"/><rect x="17.5" y="24.8" width="4.5" height="2.2" fill="#ACA899" stroke="#ACA899" stroke-width="1.1"/><path d="M19.5 21.5 V24.8" stroke="#ACA899" stroke-width="1.1"/></svg></div>
<div class="btn" style="left:1547px;top:734px;width:33px;height:36px"><svg class="ab" style="left:-1px;top:-1px" width="33" height="36"><path d="M4 16 L7 13 H25 L28 16 V22 L23 28 H8 L4 24 Z" fill="#fff" transform="translate(1 1)"/><path d="M12.5 7.5 H25 L22.5 15 H8.5 Z" fill="#fff" stroke="#ACA899" stroke-width="1"/><path d="M4 16 L7 13 H25 L28 16 V22 L23 28 H8 L4 24 Z" fill="#ACA899"/><rect x="12" y="9" width="8" height="1.3" fill="#ACA899"/><rect x="11" y="11.5" width="8" height="1.2" fill="#ACA899"/><rect x="11" y="13.5" width="6" height="1" fill="#ACA899"/></svg></div>
<svg class="ab" style="left:21px;top:896px" width="504" height="224"><rect x="0" y="0" width="504" height="224" fill="#000"/><rect x="1" y="1" width="19" height="12" fill="#00003C"/><rect x="22" y="1" width="19" height="12" fill="#00003C"/><rect x="43" y="1" width="19" height="12" fill="#00003C"/><rect x="64" y="1" width="19" height="12" fill="#00003C"/><rect x="85" y="1" width="19" height="12" fill="#00003C"/><rect x="106" y="1" width="19" height="12" fill="#00003C"/><rect x="127" y="1" width="19" height="12" fill="#00003C"/><rect x="148" y="1" width="19" height="12" fill="#00003C"/><rect x="169" y="1" width="19" height="12" fill="#00003C"/><rect x="190" y="1" width="19" height="12" fill="#00003C"/><rect x="211" y="1" width="19" height="12" fill="#00003C"/><rect x="232" y="1" width="19" height="12" fill="#00003C"/><rect x="253" y="1" width="19" height="12" fill="#00003C"/><rect x="274" y="1" width="19" height="12" fill="#00003C"/><rect x="295" y="1" width="19" height="12" fill="#00003C"/><rect x="316" y="1" width="19" height="12" fill="#00003C"/><rect x="337" y="1" width="19" height="12" fill="#00003C"/><rect x="358" y="1" width="19" height="12" fill="#00003C"/><rect x="379" y="1" width="19" height="12" fill="#00003C"/><rect x="400" y="1" width="19" height="12" fill="#00003C"/><rect x="421" y="1" width="19" height="12" fill="#00003C"/><rect x="442" y="1" width="19" height="12" fill="#00003C"/><rect x="463" y="1" width="19" height="12" fill="#00003C"/><rect x="484" y="1" width="19" height="12" fill="#00003C"/><rect x="1" y="15" width="19" height="12" fill="#00003C"/><rect x="22" y="15" width="19" height="12" fill="#00003C"/><rect x="43" y="15" width="19" height="12" fill="#00003C"/><rect x="64" y="15" width="19" height="12" fill="#00003C"/><rect x="85" y="15" width="19" height="12" fill="#00003C"/><rect x="106" y="15" width="19" height="12" fill="#00003C"/><rect x="127" y="15" width="19" height="12" fill="#00003C"/><rect x="148" y="15" width="19" height="12" fill="#00003C"/><rect x="169" y="15" width="19" height="12" fill="#00003C"/><rect x="190" y="15" width="19" height="12" fill="#00003C"/><rect x="211" y="15" width="19" height="12" fill="#00003C"/><rect x="232" y="15" width="19" height="12" fill="#00003C"/><rect x="253" y="15" width="19" height="12" fill="#00003C"/><rect x="274" y="15" width="19" height="12" fill="#00003C"/><rect x="295" y="15" width="19" height="12" fill="#00003C"/><rect x="316" y="15" width="19" height="12" fill="#00003C"/><rect x="337" y="15" width="19" height="12" fill="#00003C"/><rect x="358" y="15" width="19" height="12" fill="#00003C"/><rect x="379" y="15" width="19" height="12" fill="#00003C"/><rect x="400" y="15" width="19" height="12" fill="#00003C"/><rect x="421" y="15" width="19" height="12" fill="#00003C"/><rect x="442" y="15" width="19" height="12" fill="#00003C"/><rect x="463" y="15" width="19" height="12" fill="#00003C"/><rect x="484" y="15" width="19" height="12" fill="#00003C"/><rect x="1" y="29" width="19" height="12" fill="#00003C"/><rect x="22" y="29" width="19" height="12" fill="#00003C"/><rect x="43" y="29" width="19" height="12" fill="#00003C"/><rect x="64" y="29" width="19" height="12" fill="#00003C"/><rect x="85" y="29" width="19" height="12" fill="#00003C"/><rect x="106" y="29" width="19" height="12" fill="#00003C"/><rect x="127" y="29" width="19" height="12" fill="#00003C"/><rect x="148" y="29" width="19" height="12" fill="#00003C"/><rect x="169" y="29" width="19" height="12" fill="#00003C"/><rect x="190" y="29" width="19" height="12" fill="#00003C"/><rect x="211" y="29" width="19" height="12" fill="#00003C"/><rect x="232" y="29" width="19" height="12" fill="#00003C"/><rect x="253" y="29" width="19" height="12" fill="#00003C"/><rect x="274" y="29" width="19" height="12" fill="#00003C"/><rect x="295" y="29" width="19" height="12" fill="#00003C"/><rect x="316" y="29" width="19" height="12" fill="#00003C"/><rect x="337" y="29" width="19" height="12" fill="#00003C"/><rect x="358" y="29" width="19" height="12" fill="#00003C"/><rect x="379" y="29" width="19" height="12" fill="#00003C"/><rect x="400" y="29" width="19" height="12" fill="#00003C"/><rect x="421" y="29" width="19" height="12" fill="#00003C"/><rect x="442" y="29" width="19" height="12" fill="#00003C"/><rect x="463" y="29" width="19" height="12" fill="#00003C"/><rect x="484" y="29" width="19" height="12" fill="#00003C"/><rect x="1" y="43" width="19" height="12" fill="#00003C"/><rect x="22" y="43" width="19" height="12" fill="#00003C"/><rect x="43" y="43" width="19" height="12" fill="#00003C"/><rect x="64" y="43" width="19" height="12" fill="#00003C"/><rect x="85" y="43" width="19" height="12" fill="#00003C"/><rect x="106" y="43" width="19" height="12" fill="#00003C"/><rect x="127" y="43" width="19" height="12" fill="#00003C"/><rect x="148" y="43" width="19" height="12" fill="#00003C"/><rect x="169" y="43" width="19" height="12" fill="#00003C"/><rect x="190" y="43" width="19" height="12" fill="#00003C"/><rect x="211" y="43" width="19" height="12" fill="#00003C"/><rect x="232" y="43" width="19" height="12" fill="#00003C"/><rect x="253" y="43" width="19" height="12" fill="#00003C"/><rect x="274" y="43" width="19" height="12" fill="#00003C"/><rect x="295" y="43" width="19" height="12" fill="#00003C"/><rect x="316" y="43" width="19" height="12" fill="#00003C"/><rect x="337" y="43" width="19" height="12" fill="#00003C"/><rect x="358" y="43" width="19" height="12" fill="#00003C"/><rect x="379" y="43" width="19" height="12" fill="#00003C"/><rect x="400" y="43" width="19" height="12" fill="#00003C"/><rect x="421" y="43" width="19" height="12" fill="#00003C"/><rect x="442" y="43" width="19" height="12" fill="#00003C"/><rect x="463" y="43" width="19" height="12" fill="#00003C"/><rect x="484" y="43" width="19" height="12" fill="#00003C"/><rect x="1" y="57" width="19" height="12" fill="#00003C"/><rect x="22" y="57" width="19" height="12" fill="#00003C"/><rect x="43" y="57" width="19" height="12" fill="#00003C"/><rect x="64" y="57" width="19" height="12" fill="#00003C"/><rect x="85" y="57" width="19" height="12" fill="#00003C"/><rect x="106" y="57" width="19" height="12" fill="#00003C"/><rect x="127" y="57" width="19" height="12" fill="#00003C"/><rect x="148" y="57" width="19" height="12" fill="#00003C"/><rect x="169" y="57" width="19" height="12" fill="#00003C"/><rect x="190" y="57" width="19" height="12" fill="#00003C"/><rect x="211" y="57" width="19" height="12" fill="#00003C"/><rect x="232" y="57" width="19" height="12" fill="#00003C"/><rect x="253" y="57" width="19" height="12" fill="#00003C"/><rect x="274" y="57" width="19" height="12" fill="#00003C"/><rect x="295" y="57" width="19" height="12" fill="#00003C"/><rect x="316" y="57" width="19" height="12" fill="#00003C"/><rect x="337" y="57" width="19" height="12" fill="#00003C"/><rect x="358" y="57" width="19" height="12" fill="#00003C"/><rect x="379" y="57" width="19" height="12" fill="#00003C"/><rect x="400" y="57" width="19" height="12" fill="#00003C"/><rect x="421" y="57" width="19" height="12" fill="#00003C"/><rect x="442" y="57" width="19" height="12" fill="#00003C"/><rect x="463" y="57" width="19" height="12" fill="#00003C"/><rect x="484" y="57" width="19" height="12" fill="#00003C"/><rect x="1" y="71" width="19" height="12" fill="#00003C"/><rect x="22" y="71" width="19" height="12" fill="#00003C"/><rect x="43" y="71" width="19" height="12" fill="#00003C"/><rect x="64" y="71" width="19" height="12" fill="#00003C"/><rect x="85" y="71" width="19" height="12" fill="#00003C"/><rect x="106" y="71" width="19" height="12" fill="#00003C"/><rect x="127" y="71" width="19" height="12" fill="#00003C"/><rect x="148" y="71" width="19" height="12" fill="#00003C"/><rect x="169" y="71" width="19" height="12" fill="#00003C"/><rect x="190" y="71" width="19" height="12" fill="#00003C"/><rect x="211" y="71" width="19" height="12" fill="#00003C"/><rect x="232" y="71" width="19" height="12" fill="#00003C"/><rect x="253" y="71" width="19" height="12" fill="#00003C"/><rect x="274" y="71" width="19" height="12" fill="#00003C"/><rect x="295" y="71" width="19" height="12" fill="#00003C"/><rect x="316" y="71" width="19" height="12" fill="#00003C"/><rect x="337" y="71" width="19" height="12" fill="#00003C"/><rect x="358" y="71" width="19" height="12" fill="#00003C"/><rect x="379" y="71" width="19" height="12" fill="#00003C"/><rect x="400" y="71" width="19" height="12" fill="#00003C"/><rect x="421" y="71" width="19" height="12" fill="#00003C"/><rect x="442" y="71" width="19" height="12" fill="#00003C"/><rect x="463" y="71" width="19" height="12" fill="#00003C"/><rect x="484" y="71" width="19" height="12" fill="#00003C"/><rect x="1" y="85" width="19" height="12" fill="#00003C"/><rect x="22" y="85" width="19" height="12" fill="#00003C"/><rect x="43" y="85" width="19" height="12" fill="#00003C"/><rect x="64" y="85" width="19" height="12" fill="#00003C"/><rect x="85" y="85" width="19" height="12" fill="#00003C"/><rect x="106" y="85" width="19" height="12" fill="#00003C"/><rect x="127" y="85" width="19" height="12" fill="#00003C"/><rect x="148" y="85" width="19" height="12" fill="#00003C"/><rect x="169" y="85" width="19" height="12" fill="#00003C"/><rect x="190" y="85" width="19" height="12" fill="#00003C"/><rect x="211" y="85" width="19" height="12" fill="#00003C"/><rect x="232" y="85" width="19" height="12" fill="#00003C"/><rect x="253" y="85" width="19" height="12" fill="#00003C"/><rect x="274" y="85" width="19" height="12" fill="#00003C"/><rect x="295" y="85" width="19" height="12" fill="#00003C"/><rect x="316" y="85" width="19" height="12" fill="#00003C"/><rect x="337" y="85" width="19" height="12" fill="#00003C"/><rect x="358" y="85" width="19" height="12" fill="#00003C"/><rect x="379" y="85" width="19" height="12" fill="#00003C"/><rect x="400" y="85" width="19" height="12" fill="#00003C"/><rect x="421" y="85" width="19" height="12" fill="#00003C"/><rect x="442" y="85" width="19" height="12" fill="#00003C"/><rect x="463" y="85" width="19" height="12" fill="#00003C"/><rect x="484" y="85" width="19" height="12" fill="#00003C"/><rect x="1" y="99" width="19" height="12" fill="#00003C"/><rect x="22" y="99" width="19" height="12" fill="#00003C"/><rect x="43" y="99" width="19" height="12" fill="#00003C"/><rect x="64" y="99" width="19" height="12" fill="#00003C"/><rect x="85" y="99" width="19" height="12" fill="#00003C"/><rect x="106" y="99" width="19" height="12" fill="#00003C"/><rect x="127" y="99" width="19" height="12" fill="#00003C"/><rect x="148" y="99" width="19" height="12" fill="#00003C"/><rect x="169" y="99" width="19" height="12" fill="#00003C"/><rect x="190" y="99" width="19" height="12" fill="#00003C"/><rect x="211" y="99" width="19" height="12" fill="#00003C"/><rect x="232" y="99" width="19" height="12" fill="#00003C"/><rect x="253" y="99" width="19" height="12" fill="#00003C"/><rect x="274" y="99" width="19" height="12" fill="#00003C"/><rect x="295" y="99" width="19" height="12" fill="#00003C"/><rect x="316" y="99" width="19" height="12" fill="#00003C"/><rect x="337" y="99" width="19" height="12" fill="#00003C"/><rect x="358" y="99" width="19" height="12" fill="#00003C"/><rect x="379" y="99" width="19" height="12" fill="#00003C"/><rect x="400" y="99" width="19" height="12" fill="#00003C"/><rect x="421" y="99" width="19" height="12" fill="#00003C"/><rect x="442" y="99" width="19" height="12" fill="#00003C"/><rect x="463" y="99" width="19" height="12" fill="#00003C"/><rect x="484" y="99" width="19" height="12" fill="#00003C"/><rect x="1" y="113" width="19" height="12" fill="#00003C"/><rect x="22" y="113" width="19" height="12" fill="#00003C"/><rect x="43" y="113" width="19" height="12" fill="#00003C"/><rect x="64" y="113" width="19" height="12" fill="#00003C"/><rect x="85" y="113" width="19" height="12" fill="#00003C"/><rect x="106" y="113" width="19" height="12" fill="#00003C"/><rect x="127" y="113" width="19" height="12" fill="#00003C"/><rect x="148" y="113" width="19" height="12" fill="#00003C"/><rect x="169" y="113" width="19" height="12" fill="#00003C"/><rect x="190" y="113" width="19" height="12" fill="#00003C"/><rect x="211" y="113" width="19" height="12" fill="#00003C"/><rect x="232" y="113" width="19" height="12" fill="#00003C"/><rect x="253" y="113" width="19" height="12" fill="#00003C"/><rect x="274" y="113" width="19" height="12" fill="#00003C"/><rect x="295" y="113" width="19" height="12" fill="#00003C"/><rect x="316" y="113" width="19" height="12" fill="#00003C"/><rect x="337" y="113" width="19" height="12" fill="#00003C"/><rect x="358" y="113" width="19" height="12" fill="#00003C"/><rect x="379" y="113" width="19" height="12" fill="#00003C"/><rect x="400" y="113" width="19" height="12" fill="#00003C"/><rect x="421" y="113" width="19" height="12" fill="#00003C"/><rect x="442" y="113" width="19" height="12" fill="#00003C"/><rect x="463" y="113" width="19" height="12" fill="#00003C"/><rect x="484" y="113" width="19" height="12" fill="#00003C"/><rect x="1" y="127" width="19" height="12" fill="#00003C"/><rect x="22" y="127" width="19" height="12" fill="#00003C"/><rect x="43" y="127" width="19" height="12" fill="#00003C"/><rect x="64" y="127" width="19" height="12" fill="#00003C"/><rect x="85" y="127" width="19" height="12" fill="#00003C"/><rect x="106" y="127" width="19" height="12" fill="#00003C"/><rect x="127" y="127" width="19" height="12" fill="#00003C"/><rect x="148" y="127" width="19" height="12" fill="#00003C"/><rect x="169" y="127" width="19" height="12" fill="#00003C"/><rect x="190" y="127" width="19" height="12" fill="#00003C"/><rect x="211" y="127" width="19" height="12" fill="#00003C"/><rect x="232" y="127" width="19" height="12" fill="#00003C"/><rect x="253" y="127" width="19" height="12" fill="#00003C"/><rect x="274" y="127" width="19" height="12" fill="#00003C"/><rect x="295" y="127" width="19" height="12" fill="#00003C"/><rect x="316" y="127" width="19" height="12" fill="#00003C"/><rect x="337" y="127" width="19" height="12" fill="#00003C"/><rect x="358" y="127" width="19" height="12" fill="#00003C"/><rect x="379" y="127" width="19" height="12" fill="#00003C"/><rect x="400" y="127" width="19" height="12" fill="#00003C"/><rect x="421" y="127" width="19" height="12" fill="#00003C"/><rect x="442" y="127" width="19" height="12" fill="#00003C"/><rect x="463" y="127" width="19" height="12" fill="#00003C"/><rect x="484" y="127" width="19" height="12" fill="#00003C"/><rect x="1" y="141" width="19" height="12" fill="#00003C"/><rect x="22" y="141" width="19" height="12" fill="#00003C"/><rect x="43" y="141" width="19" height="12" fill="#00003C"/><rect x="64" y="141" width="19" height="12" fill="#00003C"/><rect x="85" y="141" width="19" height="12" fill="#00003C"/><rect x="106" y="141" width="19" height="12" fill="#00003C"/><rect x="127" y="141" width="19" height="12" fill="#00003C"/><rect x="148" y="141" width="19" height="12" fill="#00003C"/><rect x="169" y="141" width="19" height="12" fill="#00003C"/><rect x="190" y="141" width="19" height="12" fill="#00003C"/><rect x="211" y="141" width="19" height="12" fill="#00003C"/><rect x="232" y="141" width="19" height="12" fill="#00003C"/><rect x="253" y="141" width="19" height="12" fill="#00003C"/><rect x="274" y="141" width="19" height="12" fill="#00003C"/><rect x="295" y="141" width="19" height="12" fill="#00003C"/><rect x="316" y="141" width="19" height="12" fill="#00003C"/><rect x="337" y="141" width="19" height="12" fill="#00003C"/><rect x="358" y="141" width="19" height="12" fill="#00003C"/><rect x="379" y="141" width="19" height="12" fill="#00003C"/><rect x="400" y="141" width="19" height="12" fill="#00003C"/><rect x="421" y="141" width="19" height="12" fill="#00003C"/><rect x="442" y="141" width="19" height="12" fill="#00003C"/><rect x="463" y="141" width="19" height="12" fill="#00003C"/><rect x="484" y="141" width="19" height="12" fill="#00003C"/><rect x="1" y="155" width="19" height="12" fill="#00003C"/><rect x="22" y="155" width="19" height="12" fill="#00003C"/><rect x="43" y="155" width="19" height="12" fill="#00003C"/><rect x="64" y="155" width="19" height="12" fill="#00003C"/><rect x="85" y="155" width="19" height="12" fill="#00003C"/><rect x="106" y="155" width="19" height="12" fill="#00003C"/><rect x="127" y="155" width="19" height="12" fill="#00003C"/><rect x="148" y="155" width="19" height="12" fill="#00003C"/><rect x="169" y="155" width="19" height="12" fill="#00003C"/><rect x="190" y="155" width="19" height="12" fill="#00003C"/><rect x="211" y="155" width="19" height="12" fill="#00003C"/><rect x="232" y="155" width="19" height="12" fill="#00003C"/><rect x="253" y="155" width="19" height="12" fill="#00003C"/><rect x="274" y="155" width="19" height="12" fill="#00003C"/><rect x="295" y="155" width="19" height="12" fill="#00003C"/><rect x="316" y="155" width="19" height="12" fill="#00003C"/><rect x="337" y="155" width="19" height="12" fill="#00003C"/><rect x="358" y="155" width="19" height="12" fill="#00003C"/><rect x="379" y="155" width="19" height="12" fill="#00003C"/><rect x="400" y="155" width="19" height="12" fill="#00003C"/><rect x="421" y="155" width="19" height="12" fill="#00003C"/><rect x="442" y="155" width="19" height="12" fill="#00003C"/><rect x="463" y="155" width="19" height="12" fill="#00003C"/><rect x="484" y="155" width="19" height="12" fill="#00003C"/><rect x="1" y="169" width="19" height="12" fill="#00003C"/><rect x="22" y="169" width="19" height="12" fill="#00003C"/><rect x="43" y="169" width="19" height="12" fill="#00003C"/><rect x="64" y="169" width="19" height="12" fill="#00003C"/><rect x="85" y="169" width="19" height="12" fill="#00003C"/><rect x="106" y="169" width="19" height="12" fill="#00003C"/><rect x="127" y="169" width="19" height="12" fill="#00003C"/><rect x="148" y="169" width="19" height="12" fill="#00003C"/><rect x="169" y="169" width="19" height="12" fill="#00003C"/><rect x="190" y="169" width="19" height="12" fill="#00003C"/><rect x="211" y="169" width="19" height="12" fill="#00003C"/><rect x="232" y="169" width="19" height="12" fill="#00003C"/><rect x="253" y="169" width="19" height="12" fill="#00003C"/><rect x="274" y="169" width="19" height="12" fill="#00003C"/><rect x="295" y="169" width="19" height="12" fill="#00003C"/><rect x="316" y="169" width="19" height="12" fill="#00003C"/><rect x="337" y="169" width="19" height="12" fill="#00003C"/><rect x="358" y="169" width="19" height="12" fill="#00003C"/><rect x="379" y="169" width="19" height="12" fill="#00003C"/><rect x="400" y="169" width="19" height="12" fill="#00003C"/><rect x="421" y="169" width="19" height="12" fill="#00003C"/><rect x="442" y="169" width="19" height="12" fill="#00003C"/><rect x="463" y="169" width="19" height="12" fill="#00003C"/><rect x="484" y="169" width="19" height="12" fill="#00003C"/><rect x="1" y="183" width="19" height="12" fill="#00003C"/><rect x="22" y="183" width="19" height="12" fill="#00003C"/><rect x="43" y="183" width="19" height="12" fill="#00003C"/><rect x="64" y="183" width="19" height="12" fill="#00003C"/><rect x="85" y="183" width="19" height="12" fill="#00003C"/><rect x="106" y="183" width="19" height="12" fill="#00003C"/><rect x="127" y="183" width="19" height="12" fill="#00003C"/><rect x="148" y="183" width="19" height="12" fill="#00003C"/><rect x="169" y="183" width="19" height="12" fill="#00003C"/><rect x="190" y="183" width="19" height="12" fill="#00003C"/><rect x="211" y="183" width="19" height="12" fill="#00003C"/><rect x="232" y="183" width="19" height="12" fill="#00003C"/><rect x="253" y="183" width="19" height="12" fill="#00003C"/><rect x="274" y="183" width="19" height="12" fill="#00003C"/><rect x="295" y="183" width="19" height="12" fill="#00003C"/><rect x="316" y="183" width="19" height="12" fill="#00003C"/><rect x="337" y="183" width="19" height="12" fill="#00003C"/><rect x="358" y="183" width="19" height="12" fill="#00003C"/><rect x="379" y="183" width="19" height="12" fill="#00003C"/><rect x="400" y="183" width="19" height="12" fill="#00003C"/><rect x="421" y="183" width="19" height="12" fill="#00003C"/><rect x="442" y="183" width="19" height="12" fill="#00003C"/><rect x="463" y="183" width="19" height="12" fill="#00003C"/><rect x="484" y="183" width="19" height="12" fill="#00003C"/><rect x="1" y="197" width="19" height="12" fill="#00003C"/><rect x="22" y="197" width="19" height="12" fill="#00003C"/><rect x="43" y="197" width="19" height="12" fill="#00003C"/><rect x="64" y="197" width="19" height="12" fill="#00003C"/><rect x="85" y="197" width="19" height="12" fill="#00003C"/><rect x="106" y="197" width="19" height="12" fill="#00003C"/><rect x="127" y="197" width="19" height="12" fill="#00003C"/><rect x="148" y="197" width="19" height="12" fill="#00003C"/><rect x="169" y="197" width="19" height="12" fill="#00003C"/><rect x="190" y="197" width="19" height="12" fill="#00003C"/><rect x="211" y="197" width="19" height="12" fill="#00003C"/><rect x="232" y="197" width="19" height="12" fill="#00003C"/><rect x="253" y="197" width="19" height="12" fill="#00003C"/><rect x="274" y="197" width="19" height="12" fill="#00003C"/><rect x="295" y="197" width="19" height="12" fill="#00003C"/><rect x="316" y="197" width="19" height="12" fill="#00003C"/><rect x="337" y="197" width="19" height="12" fill="#00003C"/><rect x="358" y="197" width="19" height="12" fill="#00003C"/><rect x="379" y="197" width="19" height="12" fill="#00003C"/><rect x="400" y="197" width="19" height="12" fill="#00003C"/><rect x="421" y="197" width="19" height="12" fill="#00003C"/><rect x="442" y="197" width="19" height="12" fill="#00003C"/><rect x="463" y="197" width="19" height="12" fill="#00003C"/><rect x="484" y="197" width="19" height="12" fill="#00003C"/><rect x="1" y="211" width="19" height="12" fill="#00003C"/><rect x="22" y="211" width="19" height="12" fill="#00003C"/><rect x="43" y="211" width="19" height="12" fill="#00003C"/><rect x="64" y="211" width="19" height="12" fill="#00003C"/><rect x="85" y="211" width="19" height="12" fill="#00003C"/><rect x="106" y="211" width="19" height="12" fill="#00003C"/><rect x="127" y="211" width="19" height="12" fill="#00003C"/><rect x="148" y="211" width="19" height="12" fill="#00003C"/><rect x="169" y="211" width="19" height="12" fill="#00003C"/><rect x="190" y="211" width="19" height="12" fill="#00003C"/><rect x="211" y="211" width="19" height="12" fill="#00003C"/><rect x="232" y="211" width="19" height="12" fill="#00003C"/><rect x="253" y="211" width="19" height="12" fill="#00003C"/><rect x="274" y="211" width="19" height="12" fill="#00003C"/><rect x="295" y="211" width="19" height="12" fill="#00003C"/><rect x="316" y="211" width="19" height="12" fill="#00003C"/><rect x="337" y="211" width="19" height="12" fill="#00003C"/><rect x="358" y="211" width="19" height="12" fill="#00003C"/><rect x="379" y="211" width="19" height="12" fill="#00003C"/><rect x="400" y="211" width="19" height="12" fill="#00003C"/><rect x="421" y="211" width="19" height="12" fill="#00003C"/><rect x="442" y="211" width="19" height="12" fill="#00003C"/><rect x="463" y="211" width="19" height="12" fill="#00003C"/><rect x="484" y="211" width="19" height="12" fill="#00003C"/></svg>
<div class="t" style="left:21px;top:883px;width:21px;text-align:center">1</div>
<div class="t" style="left:42px;top:883px;width:21px;text-align:center">2</div>
<div class="t" style="left:63px;top:883px;width:21px;text-align:center">3</div>
<div class="t" style="left:84px;top:883px;width:21px;text-align:center">4</div>
<div class="t" style="left:105px;top:883px;width:21px;text-align:center">5</div>
<div class="t" style="left:126px;top:883px;width:21px;text-align:center">6</div>
<div class="t" style="left:147px;top:883px;width:21px;text-align:center">7</div>
<div class="t" style="left:168px;top:883px;width:21px;text-align:center">8</div>
<div class="t" style="left:189px;top:883px;width:21px;text-align:center">9</div>
<div class="t" style="left:210px;top:883px;width:21px;text-align:center">10</div>
<div class="t" style="left:231px;top:883px;width:21px;text-align:center">11</div>
<div class="t" style="left:252px;top:883px;width:21px;text-align:center">12</div>
<div class="t" style="left:273px;top:883px;width:21px;text-align:center">13</div>
<div class="t" style="left:294px;top:883px;width:21px;text-align:center">14</div>
<div class="t" style="left:315px;top:883px;width:21px;text-align:center">15</div>
<div class="t" style="left:336px;top:883px;width:21px;text-align:center">16</div>
<div class="t" style="left:357px;top:883px;width:21px;text-align:center">17</div>
<div class="t" style="left:378px;top:883px;width:21px;text-align:center">18</div>
<div class="t" style="left:399px;top:883px;width:21px;text-align:center">19</div>
<div class="t" style="left:420px;top:883px;width:21px;text-align:center">20</div>
<div class="t" style="left:441px;top:883px;width:21px;text-align:center">21</div>
<div class="t" style="left:462px;top:883px;width:21px;text-align:center">22</div>
<div class="t" style="left:483px;top:883px;width:21px;text-align:center">23</div>
<div class="t" style="left:504px;top:883px;width:21px;text-align:center">24</div>
<div class="t" style="left:7px;top:897px;width:12px;text-align:center">A</div>
<div class="t" style="left:7px;top:911px;width:12px;text-align:center">B</div>
<div class="t" style="left:7px;top:925px;width:12px;text-align:center">C</div>
<div class="t" style="left:7px;top:939px;width:12px;text-align:center">D</div>
<div class="t" style="left:7px;top:953px;width:12px;text-align:center">E</div>
<div class="t" style="left:7px;top:967px;width:12px;text-align:center">F</div>
<div class="t" style="left:7px;top:981px;width:12px;text-align:center">G</div>
<div class="t" style="left:7px;top:995px;width:12px;text-align:center">H</div>
<div class="t" style="left:7px;top:1009px;width:12px;text-align:center">I</div>
<div class="t" style="left:7px;top:1023px;width:12px;text-align:center">J</div>
<div class="t" style="left:7px;top:1037px;width:12px;text-align:center">K</div>
<div class="t" style="left:7px;top:1051px;width:12px;text-align:center">L</div>
<div class="t" style="left:7px;top:1065px;width:12px;text-align:center">M</div>
<div class="t" style="left:7px;top:1079px;width:12px;text-align:center">N</div>
<div class="t" style="left:7px;top:1093px;width:12px;text-align:center">O</div>
<div class="t" style="left:7px;top:1107px;width:12px;text-align:center">P</div>
<div class="ab" style="left:527px;top:896px;width:20px;height:202px;border:1px solid #000;background:linear-gradient(to bottom,#FF0000 0%,#FF6000 12%,#FFFF00 25%,#A0FF00 35%,#00FF00 46%,#00FFA0 54%,#00FFFF 62%,#0080FF 70%,#0000FF 78%,#0000A0 88%,#000050 100%)"></div>
<div class="btn" style="left:527px;top:1100px;width:20px;height:20px"><div class="ab" style="left:3px;top:2px;width:4px;height:13px;background:#f00"></div><div class="ab" style="left:7px;top:2px;width:4px;height:13px;background:#0f0"></div><div class="ab" style="left:11px;top:2px;width:4px;height:13px;background:#00f"></div></div>
<div class="ab" style="left:567px;top:885px;width:528px;height:251px;border-top:1px solid #ACA899;border-left:1px solid #ACA899;border-right:1px solid #fff;border-bottom:1px solid #fff"></div>
<div class="ab" style="left:568px;top:886px;width:526px;height:249px;border-top:1px solid #716F64;border-left:1px solid #716F64;border-right:1px solid #F1EFE2;border-bottom:1px solid #F1EFE2;background:#fff"></div>
<div class="ab" style="left:569px;top:887px;width:29px;height:16px;background:#ECE9D8;border-top:1px solid #fff;border-left:1px solid #fff;border-right:1px solid #ACA899;border-bottom:1px solid #ACA899;box-shadow:1px 1px 0 #716F64"></div>
<div class="t" style="left:575px;top:891px;font-size:11px">Hit</div>
<div class="ab" style="left:599px;top:887px;width:36px;height:16px;background:#ECE9D8;border-top:1px solid #fff;border-left:1px solid #fff;border-right:1px solid #ACA899;border-bottom:1px solid #ACA899;box-shadow:1px 1px 0 #716F64"></div>
<div class="t" style="left:605px;top:891px;font-size:11px">W...</div>
<div class="ab" style="left:636px;top:887px;width:75px;height:16px;background:#ECE9D8;border-top:1px solid #fff;border-left:1px solid #fff;border-right:1px solid #ACA899;border-bottom:1px solid #ACA899;box-shadow:1px 1px 0 #716F64"></div>
<div class="t" style="left:642px;top:891px;font-size:11px">No.1 Integ....</div>
<div class="ab" style="left:712px;top:887px;width:75px;height:16px;background:#ECE9D8;border-top:1px solid #fff;border-left:1px solid #fff;border-right:1px solid #ACA899;border-bottom:1px solid #ACA899;box-shadow:1px 1px 0 #716F64"></div>
<div class="t" style="left:718px;top:891px;font-size:11px">No.1 Max....</div>
<div class="ab" style="left:788px;top:887px;width:75px;height:16px;background:#ECE9D8;border-top:1px solid #fff;border-left:1px solid #fff;border-right:1px solid #ACA899;border-bottom:1px solid #ACA899;box-shadow:1px 1px 0 #716F64"></div>
<div class="t" style="left:794px;top:891px;font-size:11px">No.2 Integ....</div>
<div class="ab" style="left:864px;top:887px;width:75px;height:16px;background:#ECE9D8;border-top:1px solid #fff;border-left:1px solid #fff;border-right:1px solid #ACA899;border-bottom:1px solid #ACA899;box-shadow:1px 1px 0 #716F64"></div>
<div class="t" style="left:870px;top:891px;font-size:11px">No.2 Max....</div>
<div class="ab" style="left:940px;top:887px;width:75px;height:16px;background:#ECE9D8;border-top:1px solid #fff;border-left:1px solid #fff;border-right:1px solid #ACA899;border-bottom:1px solid #ACA899;box-shadow:1px 1px 0 #716F64"></div>
<div class="t" style="left:946px;top:891px;font-size:11px">No.3 Integ....</div>
<div class="ab" style="left:1016px;top:887px;width:59px;height:16px;background:#ECE9D8;border-top:1px solid #fff;border-left:1px solid #fff;border-right:1px solid #ACA899;border-bottom:1px solid #ACA899;box-shadow:1px 1px 0 #716F64"></div>
<div class="t" style="left:1022px;top:891px;font-size:11px">No.3 Max...</div>
<svg class="ab" style="left:569px;top:905px" width="507" height="211"><rect x="0" y="14" width="507" height="1" fill="#F1EFE2"/><rect x="0" y="28" width="507" height="1" fill="#F1EFE2"/><rect x="0" y="42" width="507" height="1" fill="#F1EFE2"/><rect x="0" y="56" width="507" height="1" fill="#F1EFE2"/><rect x="0" y="70" width="507" height="1" fill="#F1EFE2"/><rect x="0" y="84" width="507" height="1" fill="#F1EFE2"/><rect x="0" y="98" width="507" height="1" fill="#F1EFE2"/><rect x="0" y="112" width="507" height="1" fill="#F1EFE2"/><rect x="0" y="126" width="507" height="1" fill="#F1EFE2"/><rect x="0" y="140" width="507" height="1" fill="#F1EFE2"/><rect x="0" y="154" width="507" height="1" fill="#F1EFE2"/><rect x="0" y="168" width="507" height="1" fill="#F1EFE2"/><rect x="0" y="182" width="507" height="1" fill="#F1EFE2"/><rect x="0" y="196" width="507" height="1" fill="#F1EFE2"/><rect x="0" y="210" width="507" height="1" fill="#F1EFE2"/><rect x="30" y="0" width="1" height="211" fill="#F1EFE2"/><rect x="67" y="0" width="1" height="211" fill="#F1EFE2"/><rect x="143" y="0" width="1" height="211" fill="#F1EFE2"/><rect x="219" y="0" width="1" height="211" fill="#F1EFE2"/><rect x="295" y="0" width="1" height="211" fill="#F1EFE2"/><rect x="371" y="0" width="1" height="211" fill="#F1EFE2"/><rect x="447" y="0" width="1" height="211" fill="#F1EFE2"/></svg>
<div class="t" style="left:605px;top:907px;letter-spacing:-0.05px">A1</div>
<div class="t" style="left:642px;top:907px;letter-spacing:-0.05px">1295.598</div>
<div class="t" style="left:718px;top:907px;letter-spacing:-0.05px">1.210</div>
<div class="t" style="left:794px;top:907px;letter-spacing:-0.05px">N/A</div>
<div class="t" style="left:870px;top:907px;letter-spacing:-0.05px">N/A</div>
<div class="t" style="left:946px;top:907px;letter-spacing:-0.05px">N/A</div>
<div class="t" style="left:1022px;top:907px;letter-spacing:-0.05px">N/A</div>
<div class="t" style="left:605px;top:921px;letter-spacing:-0.05px">A2</div>
<div class="t" style="left:642px;top:921px;letter-spacing:-0.05px">1177.921</div>
<div class="t" style="left:718px;top:921px;letter-spacing:-0.05px">1.120</div>
<div class="t" style="left:794px;top:921px;letter-spacing:-0.05px">N/A</div>
<div class="t" style="left:870px;top:921px;letter-spacing:-0.05px">N/A</div>
<div class="t" style="left:946px;top:921px;letter-spacing:-0.05px">N/A</div>
<div class="t" style="left:1022px;top:921px;letter-spacing:-0.05px">N/A</div>
<div class="t" style="left:605px;top:935px;letter-spacing:-0.05px">A3</div>
<div class="t" style="left:642px;top:935px;letter-spacing:-0.05px">1281.489</div>
<div class="t" style="left:718px;top:935px;letter-spacing:-0.05px">1.212</div>
<div class="t" style="left:794px;top:935px;letter-spacing:-0.05px">N/A</div>
<div class="t" style="left:870px;top:935px;letter-spacing:-0.05px">N/A</div>
<div class="t" style="left:946px;top:935px;letter-spacing:-0.05px">N/A</div>
<div class="t" style="left:1022px;top:935px;letter-spacing:-0.05px">N/A</div>
<div class="t" style="left:605px;top:949px;letter-spacing:-0.05px">A4</div>
<div class="t" style="left:642px;top:949px;letter-spacing:-0.05px">1149.907</div>
<div class="t" style="left:718px;top:949px;letter-spacing:-0.05px">1.089</div>
<div class="t" style="left:794px;top:949px;letter-spacing:-0.05px">N/A</div>
<div class="t" style="left:870px;top:949px;letter-spacing:-0.05px">N/A</div>
<div class="t" style="left:946px;top:949px;letter-spacing:-0.05px">N/A</div>
<div class="t" style="left:1022px;top:949px;letter-spacing:-0.05px">N/A</div>
<div class="t" style="left:605px;top:963px;letter-spacing:-0.05px">A5</div>
<div class="t" style="left:642px;top:963px;letter-spacing:-0.05px">1312.300</div>
<div class="t" style="left:718px;top:963px;letter-spacing:-0.05px">1.247</div>
<div class="t" style="left:794px;top:963px;letter-spacing:-0.05px">N/A</div>
<div class="t" style="left:870px;top:963px;letter-spacing:-0.05px">N/A</div>
<div class="t" style="left:946px;top:963px;letter-spacing:-0.05px">N/A</div>
<div class="t" style="left:1022px;top:963px;letter-spacing:-0.05px">N/A</div>
<div class="t" style="left:605px;top:977px;letter-spacing:-0.05px">A6</div>
<div class="t" style="left:642px;top:977px;letter-spacing:-0.05px">1332.521</div>
<div class="t" style="left:718px;top:977px;letter-spacing:-0.05px">1.267</div>
<div class="t" style="left:794px;top:977px;letter-spacing:-0.05px">N/A</div>
<div class="t" style="left:870px;top:977px;letter-spacing:-0.05px">N/A</div>
<div class="t" style="left:946px;top:977px;letter-spacing:-0.05px">N/A</div>
<div class="t" style="left:1022px;top:977px;letter-spacing:-0.05px">N/A</div>
<div class="t" style="left:605px;top:991px;letter-spacing:-0.05px">A7</div>
<div class="t" style="left:642px;top:991px;letter-spacing:-0.05px">1261.557</div>
<div class="t" style="left:718px;top:991px;letter-spacing:-0.05px">1.165</div>
<div class="t" style="left:794px;top:991px;letter-spacing:-0.05px">N/A</div>
<div class="t" style="left:870px;top:991px;letter-spacing:-0.05px">N/A</div>
<div class="t" style="left:946px;top:991px;letter-spacing:-0.05px">N/A</div>
<div class="t" style="left:1022px;top:991px;letter-spacing:-0.05px">N/A</div>
<div class="t" style="left:605px;top:1005px;letter-spacing:-0.05px">A8</div>
<div class="t" style="left:642px;top:1005px;letter-spacing:-0.05px">1080.603</div>
<div class="t" style="left:718px;top:1005px;letter-spacing:-0.05px">1.015</div>
<div class="t" style="left:794px;top:1005px;letter-spacing:-0.05px">N/A</div>
<div class="t" style="left:870px;top:1005px;letter-spacing:-0.05px">N/A</div>
<div class="t" style="left:946px;top:1005px;letter-spacing:-0.05px">N/A</div>
<div class="t" style="left:1022px;top:1005px;letter-spacing:-0.05px">N/A</div>
<div class="t" style="left:605px;top:1019px;letter-spacing:-0.05px">A9</div>
<div class="t" style="left:642px;top:1019px;letter-spacing:-0.05px">1287.444</div>
<div class="t" style="left:718px;top:1019px;letter-spacing:-0.05px">1.201</div>
<div class="t" style="left:794px;top:1019px;letter-spacing:-0.05px">N/A</div>
<div class="t" style="left:870px;top:1019px;letter-spacing:-0.05px">N/A</div>
<div class="t" style="left:946px;top:1019px;letter-spacing:-0.05px">N/A</div>
<div class="t" style="left:1022px;top:1019px;letter-spacing:-0.05px">N/A</div>
<div class="t" style="left:605px;top:1033px;letter-spacing:-0.05px">A10</div>
<div class="t" style="left:642px;top:1033px;letter-spacing:-0.05px">1097.425</div>
<div class="t" style="left:718px;top:1033px;letter-spacing:-0.05px">1.029</div>
<div class="t" style="left:794px;top:1033px;letter-spacing:-0.05px">N/A</div>
<div class="t" style="left:870px;top:1033px;letter-spacing:-0.05px">N/A</div>
<div class="t" style="left:946px;top:1033px;letter-spacing:-0.05px">N/A</div>
<div class="t" style="left:1022px;top:1033px;letter-spacing:-0.05px">N/A</div>
<div class="t" style="left:605px;top:1047px;letter-spacing:-0.05px">A11</div>
<div class="t" style="left:642px;top:1047px;letter-spacing:-0.05px">1069.494</div>
<div class="t" style="left:718px;top:1047px;letter-spacing:-0.05px">1.008</div>
<div class="t" style="left:794px;top:1047px;letter-spacing:-0.05px">N/A</div>
<div class="t" style="left:870px;top:1047px;letter-spacing:-0.05px">N/A</div>
<div class="t" style="left:946px;top:1047px;letter-spacing:-0.05px">N/A</div>
<div class="t" style="left:1022px;top:1047px;letter-spacing:-0.05px">N/A</div>
<div class="t" style="left:605px;top:1061px;letter-spacing:-0.05px">A12</div>
<div class="t" style="left:642px;top:1061px;letter-spacing:-0.05px">1055.412</div>
<div class="t" style="left:718px;top:1061px;letter-spacing:-0.05px">1.001</div>
<div class="t" style="left:794px;top:1061px;letter-spacing:-0.05px">N/A</div>
<div class="t" style="left:870px;top:1061px;letter-spacing:-0.05px">N/A</div>
<div class="t" style="left:946px;top:1061px;letter-spacing:-0.05px">N/A</div>
<div class="t" style="left:1022px;top:1061px;letter-spacing:-0.05px">N/A</div>
<div class="t" style="left:605px;top:1075px;letter-spacing:-0.05px">A13</div>
<div class="t" style="left:642px;top:1075px;letter-spacing:-0.05px">1274.416</div>
<div class="t" style="left:718px;top:1075px;letter-spacing:-0.05px">1.237</div>
<div class="t" style="left:794px;top:1075px;letter-spacing:-0.05px">N/A</div>
<div class="t" style="left:870px;top:1075px;letter-spacing:-0.05px">N/A</div>
<div class="t" style="left:946px;top:1075px;letter-spacing:-0.05px">N/A</div>
<div class="t" style="left:1022px;top:1075px;letter-spacing:-0.05px">N/A</div>
<div class="t" style="left:605px;top:1089px;letter-spacing:-0.05px">A14</div>
<div class="t" style="left:642px;top:1089px;letter-spacing:-0.05px">1087.894</div>
<div class="t" style="left:718px;top:1089px;letter-spacing:-0.05px">1.037</div>
<div class="t" style="left:794px;top:1089px;letter-spacing:-0.05px">N/A</div>
<div class="t" style="left:870px;top:1089px;letter-spacing:-0.05px">N/A</div>
<div class="t" style="left:946px;top:1089px;letter-spacing:-0.05px">N/A</div>
<div class="t" style="left:1022px;top:1089px;letter-spacing:-0.05px">N/A</div>
<div class="t" style="left:605px;top:1103px;letter-spacing:-0.05px">A15</div>
<div class="t" style="left:642px;top:1103px;letter-spacing:-0.05px">1157.475</div>
<div class="t" style="left:718px;top:1103px;letter-spacing:-0.05px">1.104</div>
<div class="t" style="left:794px;top:1103px;letter-spacing:-0.05px">N/A</div>
<div class="t" style="left:870px;top:1103px;letter-spacing:-0.05px">N/A</div>
<div class="t" style="left:946px;top:1103px;letter-spacing:-0.05px">N/A</div>
<div class="t" style="left:1022px;top:1103px;letter-spacing:-0.05px">N/A</div>
<div class="ab" style="left:1076px;top:887px;width:17px;height:229px;background:linear-gradient(to right,#F3F1EA,#FEFEFB)"></div>
<div class="ab" style="left:1077px;top:887px;width:15px;height:15px;border-radius:2px;border:1px solid #fff;background:linear-gradient(135deg,#C8D6FB,#B4C8F6);box-shadow:1px 1px 0 #A6B9E8"><svg class="ab" style="left:2px;top:2px" width="9" height="9"><path d="M1 6 L4.5 2.5 L8 6" stroke="#4D6185" stroke-width="2" fill="none"/></svg></div>
<div class="ab" style="left:1077px;top:905px;width:15px;height:7px;border-radius:2px;border:1px solid #fff;background:linear-gradient(135deg,#C8D6FB,#B4C8F6);box-shadow:1px 1px 0 #A6B9E8"></div>
<div class="ab" style="left:1077px;top:1100px;width:15px;height:15px;border-radius:2px;border:1px solid #fff;background:linear-gradient(135deg,#C8D6FB,#B4C8F6);box-shadow:1px 1px 0 #A6B9E8"><svg class="ab" style="left:2px;top:2px" width="9" height="9"><path d="M1 3 L4.5 6.5 L8 3" stroke="#4D6185" stroke-width="2" fill="none"/></svg></div>
<div class="ab" style="left:569px;top:1116px;width:507px;height:17px;background:linear-gradient(to bottom,#F3F1EA,#FEFEFB)"></div>
<div class="ab" style="left:570px;top:1117px;width:15px;height:15px;border-radius:2px;border:1px solid #fff;background:linear-gradient(135deg,#C8D6FB,#B4C8F6);box-shadow:1px 1px 0 #A6B9E8"><svg class="ab" style="left:2px;top:2px" width="9" height="9"><path d="M6 1 L2.5 4.5 L6 8" stroke="#4D6185" stroke-width="2" fill="none"/></svg></div>
<div class="ab" style="left:587px;top:1117px;width:457px;height:15px;border-radius:2px;border:1px solid #fff;background:linear-gradient(135deg,#C8D6FB,#B4C8F6);box-shadow:1px 1px 0 #A6B9E8"><svg class="ab" style="left:223px;top:2px" width="9" height="9"><path d="M0 0" /></svg></div>
<div class="ab" style="left:812px;top:1122px;width:8px;height:7px;background:repeating-linear-gradient(to right,#EEF3FE 0 1px,#8CA3E0 1px 2px)"></div>
<div class="ab" style="left:1060px;top:1117px;width:15px;height:15px;border-radius:2px;border:1px solid #fff;background:linear-gradient(135deg,#C8D6FB,#B4C8F6);box-shadow:1px 1px 0 #A6B9E8"><svg class="ab" style="left:2px;top:2px" width="9" height="9"><path d="M3 1 L6.5 4.5 L3 8" stroke="#4D6185" stroke-width="2" fill="none"/></svg></div>
<div class="ab" style="left:1076px;top:1116px;width:17px;height:17px;background:#ECE9D8"></div>
<div class="ab" style="left:1126px;top:891px;width:448px;height:242px;border:1px solid #ACA899;box-shadow:inset 1px 1px 0 #fff, 1px 1px 0 #fff"></div>
<div class="t" style="left:1133px;top:886px;padding:0 2px;background:#ECE9D8;letter-spacing:-0.18px">Data Control [ iCell Ca read-180724001 ]</div>
<div class="ab" style="left:1136px;top:905px;width:428px;height:28px;border:1px solid #ACA899;box-shadow:inset 1px 1px 0 #fff, 1px 1px 0 #fff"></div>
<div class="t" style="left:1141px;top:914px">Samp.Line :</div>
<div class="sunk" style="left:1216px;top:910px;width:163px;height:20px;background:#ECE9D8"></div>
<div class="t" style="left:1216px;top:914px;width:160px;text-align:right;letter-spacing:-0.15px">00:00.000(m:s.ms)[1/1207]</div>
<div class="btn" style="left:1381px;top:910px;width:17px;height:20px"><svg class="ab" style="left:4px;top:5px" width="6" height="9"><path d="M5 0 V8 L1 4Z" fill="#000"/></svg></div>
<div class="btn" style="left:1398px;top:910px;width:17px;height:20px"></div>
<div class="ab" style="left:1415px;top:910px;width:50px;height:20px;background:repeating-conic-gradient(#fff 0 25%,#ECE9D8 0 50%) 0 0/2px 2px"></div>
<div class="btn" style="left:1465px;top:910px;width:16px;height:20px"><svg class="ab" style="left:5px;top:5px" width="6" height="9"><path d="M1 0 V8 L5 4Z" fill="#000"/></svg></div>
<div class="btn" style="left:1482px;top:909px;width:20px;height:21px"><svg class="ab" style="left:1px;top:1px" width="17" height="18"><path d="M1 0 L16 9 L1 18Z" fill="#FF0000"/></svg></div>
<div class="btn" style="left:1503px;top:909px;width:20px;height:21px"><div class="ab" style="left:2px;top:2px;width:14px;height:15px;background:#000"></div></div>
<div class="btn" style="left:1523px;top:909px;width:20px;height:21px"><svg class="ab" style="left:1px;top:1px" width="17" height="17"><rect x="5" y="1" width="10" height="8" fill="#A0B0C0" stroke="#506070"/><rect x="8" y="3" width="5" height="4" fill="#2040E0"/><rect x="1" y="7" width="8" height="7" fill="#C0C8D0" stroke="#506070"/><rect x="2" y="9" width="5" height="3" fill="#2060F0"/><path d="M10 10 L12 15 M12 10 L10 15" stroke="#E0C000"/></svg></div>
<div class="ab" style="left:1136px;top:940px;width:345px;height:43px;border:1px solid #ACA899;box-shadow:inset 1px 1px 0 #fff, 1px 1px 0 #fff"></div>
<div class="t" style="left:1141px;top:949px">Select Well :</div>
<div class="sunk" style="left:1216px;top:945px;width:33px;height:36px;border-top-color:#716F64;border-left-color:#716F64;background:repeating-conic-gradient(#fff 0 25%,#ECE9D8 0 50%) 0 0/2px 2px"><svg class="ab" style="left:5px;top:7px" width="22" height="21"><rect x="0" y="0" width="6" height="6" fill="#FF00FF"/><path d="M0 5 h2 l2 -3 v3 h2" stroke="#000" fill="none" stroke-width="0.8"/><rect x="7" y="0" width="6" height="6" fill="#000"/><path d="M7 5 h2 v-2 h4" stroke="#fff" fill="none" stroke-width="0.6"/><rect x="14" y="0" width="6" height="6" fill="#000"/><path d="M14 5 h2 v-2 h4" stroke="#fff" fill="none" stroke-width="0.6"/><rect x="0" y="7" width="6" height="6" fill="#000"/><path d="M0 12 h2 v-2 h4" stroke="#fff" fill="none" stroke-width="0.6"/><rect x="7" y="7" width="6" height="6" fill="#000"/><path d="M7 12 h2 v-2 h4" stroke="#fff" fill="none" stroke-width="0.6"/><rect x="14" y="7" width="6" height="6" fill="#FF00FF"/><path d="M14 12 h2 l2 -3 v3 h2" stroke="#000" fill="none" stroke-width="0.8"/><rect x="0" y="14" width="6" height="6" fill="#FF00FF"/><path d="M0 19 h2 l2 -3 v3 h2" stroke="#000" fill="none" stroke-width="0.8"/><rect x="7" y="14" width="6" height="6" fill="#FF00FF"/><path d="M7 19 h2 l2 -3 v3 h2" stroke="#000" fill="none" stroke-width="0.8"/><rect x="14" y="14" width="6" height="6" fill="#000"/><path d="M14 19 h2 v-2 h4" stroke="#fff" fill="none" stroke-width="0.6"/></svg></div>
<div class="btn" style="left:1257px;top:945px;width:33px;height:36px"><svg class="ab" style="left:5px;top:7px" width="22" height="21"><rect x="0" y="0" width="6" height="6" fill="#00FF00"/><path d="M0 5 h2 l2 -3 v3 h2" stroke="#000" fill="none" stroke-width="0.8"/><rect x="7" y="0" width="6" height="6" fill="#000"/><path d="M7 5 h2 v-2 h4" stroke="#fff" fill="none" stroke-width="0.6"/><rect x="14" y="0" width="6" height="6" fill="#000"/><path d="M14 5 h2 v-2 h4" stroke="#fff" fill="none" stroke-width="0.6"/><rect x="0" y="7" width="6" height="6" fill="#000"/><path d="M0 12 h2 v-2 h4" stroke="#fff" fill="none" stroke-width="0.6"/><rect x="7" y="7" width="6" height="6" fill="#000"/><path d="M7 12 h2 v-2 h4" stroke="#fff" fill="none" stroke-width="0.6"/><rect x="14" y="7" width="6" height="6" fill="#FF00FF"/><path d="M14 12 h2 l2 -3 v3 h2" stroke="#000" fill="none" stroke-width="0.8"/><rect x="0" y="14" width="6" height="6" fill="#FFFF00"/><path d="M0 19 h2 l2 -3 v3 h2" stroke="#000" fill="none" stroke-width="0.8"/><rect x="7" y="14" width="6" height="6" fill="#00FFFF"/><path d="M7 19 h2 l2 -3 v3 h2" stroke="#000" fill="none" stroke-width="0.8"/><rect x="14" y="14" width="6" height="6" fill="#000"/><path d="M14 19 h2 v-2 h4" stroke="#fff" fill="none" stroke-width="0.6"/></svg></div>
<div class="btn" style="left:1298px;top:945px;width:33px;height:36px"><svg class="ab" style="left:5px;top:7px" width="22" height="21"><rect x="0" y="0" width="6" height="6" fill="#FF0000"/><path d="M0 5 h2 l2 -3 v3 h2" stroke="#000" fill="none" stroke-width="0.8"/><rect x="7" y="0" width="6" height="6" fill="#FF0000"/><path d="M7 5 h2 l2 -3 v3 h2" stroke="#000" fill="none" stroke-width="0.8"/><rect x="14" y="0" width="6" height="6" fill="#000"/><path d="M14 5 h2 v-2 h4" stroke="#fff" fill="none" stroke-width="0.6"/><rect x="0" y="7" width="6" height="6" fill="#000"/><path d="M0 12 h2 v-2 h4" stroke="#fff" fill="none" stroke-width="0.6"/><rect x="7" y="7" width="6" height="6" fill="#000"/><path d="M7 12 h2 v-2 h4" stroke="#fff" fill="none" stroke-width="0.6"/><rect x="14" y="7" width="6" height="6" fill="#FF0000"/><path d="M14 12 h2 l2 -3 v3 h2" stroke="#000" fill="none" stroke-width="0.8"/><rect x="0" y="14" width="6" height="6" fill="#000"/><path d="M0 19 h2 v-2 h4" stroke="#fff" fill="none" stroke-width="0.6"/><rect x="7" y="14" width="6" height="6" fill="#000"/><path d="M7 19 h2 v-2 h4" stroke="#fff" fill="none" stroke-width="0.6"/><rect x="14" y="14" width="6" height="6" fill="#000"/><path d="M14 19 h2 v-2 h4" stroke="#fff" fill="none" stroke-width="0.6"/><rect x="4" y="13" width="18" height="8" fill="#0000FF"/><text x="4.5" y="20.5" font-family="Liberation Sans" font-weight="bold" font-size="9" fill="#00FFFF">Hits</text></svg></div>
<div class="btn" style="left:1338px;top:945px;width:33px;height:36px"><svg class="ab" style="left:5px;top:7px" width="22" height="21"><rect x="0" y="0" width="6" height="6" fill="#00FF00"/><path d="M0 5 h2 l2 -3 v3 h2" stroke="#000" fill="none" stroke-width="0.8"/><rect x="7" y="0" width="6" height="6" fill="#000"/><path d="M7 5 h2 v-2 h4" stroke="#fff" fill="none" stroke-width="0.6"/><rect x="14" y="0" width="6" height="6" fill="#000"/><path d="M14 5 h2 v-2 h4" stroke="#fff" fill="none" stroke-width="0.6"/><rect x="0" y="7" width="6" height="6" fill="#000"/><path d="M0 12 h2 v-2 h4" stroke="#fff" fill="none" stroke-width="0.6"/><rect x="7" y="7" width="6" height="6" fill="#000"/><path d="M7 12 h2 v-2 h4" stroke="#fff" fill="none" stroke-width="0.6"/><rect x="14" y="7" width="6" height="6" fill="#FF00FF"/><path d="M14 12 h2 l2 -3 v3 h2" stroke="#000" fill="none" stroke-width="0.8"/><rect x="0" y="14" width="6" height="6" fill="#FFFF00"/><path d="M0 19 h2 l2 -3 v3 h2" stroke="#000" fill="none" stroke-width="0.8"/><rect x="7" y="14" width="6" height="6" fill="#00FFFF"/><path d="M7 19 h2 l2 -3 v3 h2" stroke="#000" fill="none" stroke-width="0.8"/><rect x="14" y="14" width="6" height="6" fill="#000"/><path d="M14 19 h2 v-2 h4" stroke="#fff" fill="none" stroke-width="0.6"/><text x="9.5" y="22" font-family="Liberation Sans" font-weight="bold" font-size="20" fill="#FF0000" stroke="#800000" stroke-width="0.6">S</text></svg></div>
<div class="btn" style="left:1378px;top:945px;width:89px;height:36px"><div class="t dis" style="left:3px;top:12px;letter-spacing:-0.5px">Hit &amp; Calc.Param.</div></div>
<div class="ab" style="left:1483px;top:940px;width:81px;height:43px;border:1px solid #ACA899;box-shadow:inset 1px 1px 0 #fff, 1px 1px 0 #fff"></div>
<div class="cb" style="left:1485px;top:945px"><svg class="ab" style="left:1px;top:1px" width="9" height="9"><path d="M1 4 L3.5 6.5 L8 1.5" stroke="#000" stroke-width="2" fill="none"/></svg></div><div class="t" style="left:1503px;top:946px">Diagram</div>
<div class="cb cbd" style="left:1485px;top:961px"><svg class="ab" style="left:1px;top:1px" width="9" height="9"><path d="M1 4 L3.5 6.5 L8 1.5" stroke="#ACA899" stroke-width="2" fill="none"/></svg></div><div class="t dis" style="left:1503px;top:962px">Microplate</div>
<div class="ab" style="left:1136px;top:990px;width:278px;height:89px;border:1px solid #ACA899;box-shadow:inset 1px 1px 0 #fff, 1px 1px 0 #fff"></div>
<div class="t" style="left:1141px;top:1000px">Select Graph :</div>
<div class="cb" style="left:1216px;top:1006px"></div><div class="t" style="left:1234px;top:1006px;background:#FF0000;color:#fff;padding:1px 0;height:13px;width:25px">Ratio</div>
<div class="cb" style="left:1216px;top:1021px"><svg class="ab" style="left:1px;top:1px" width="9" height="9"><path d="M1 4 L3.5 6.5 L8 1.5" stroke="#000" stroke-width="2" fill="none"/></svg></div><div class="t" style="left:1234px;top:1021px;background:#00FF00;padding:1px 0;height:13px;width:66px">Ex480:Em542</div>
<div class="cb cbd" style="left:1216px;top:1041px"></div><div class="t dis" style="left:1234px;top:1042px">Ex480:Em542 1st.Sam</div>
<div class="cb" style="left:1216px;top:1061px"></div><div class="t" style="left:1234px;top:1061px;background:#00FFFF;padding:1px 0;height:13px;width:52px">Integ.Ratio</div>
<div class="btn" style="left:1366px;top:1000px;width:34px;height:36px"><svg class="ab" style="left:3px;top:3px" width="28" height="28"><rect x="1" y="2" width="10" height="24" fill="#000"/><path d="M1 7 H11 M1 12 H11 M1 17 H11 M1 22 H11 M6 2 V26" stroke="#ECE9D8" stroke-width="1"/><path d="M1 6 L4 4 L7 7 M1 16 L4 13 L8 16 M2 25 L5 21 L8 24" stroke="#FF00FF" fill="none"/><path d="M1 10 L4 8 L8 11 M1 20 L4 18" stroke="#FFFF00" fill="none"/><rect x="16" y="2" width="11" height="17" fill="#000"/><path d="M16 14 L21 4 L27 16" stroke="#FF00FF" fill="none"/><path d="M16 16 L21 7 L27 18" stroke="#FFFF00" fill="none"/><path d="M8 12 L12 8 V10.5 H18 V8 L22 12 L18 16 V13.5 H12 V16Z" fill="#00FF00" stroke="#0000FF" stroke-width="0.8"/></svg></div>
<div class="btn" style="left:1366px;top:1040px;width:34px;height:36px"><svg class="ab" style="left:3px;top:3px" width="28" height="28"><rect x="1" y="2" width="11" height="16" fill="#000"/><path d="M1 14 L6 4 L12 15" stroke="#FF00FF" fill="none"/><path d="M1 16 L6 7 L12 17" stroke="#FFFF00" fill="none"/><rect x="15" y="12" width="12" height="14" fill="#fff"/><path d="M15 24 L21 13 L27 24" stroke="#FF00FF" fill="none"/><path d="M15 26 L21 16 L27 26" stroke="#FFFF00" fill="none"/><path d="M7 17 L11 13 V15.5 H17 V13 L21 17 L17 21 V18.5 H11 V21Z" fill="#00FF00" stroke="#0000FF" stroke-width="0.8"/></svg></div>
<div class="ab" style="left:1417px;top:990px;width:147px;height:89px;border:1px solid #ACA899;box-shadow:inset 1px 1px 0 #fff, 1px 1px 0 #fff"></div>
<div class="t" style="left:1422px;top:997px">Processing :</div>
<div class="ab" style="left:1496px;top:995px;width:56px;height:19px;border:1px solid #000;background:#ACA899;box-shadow:inset 2px 1px 0 #fff, inset -3px -1px 0 #fff"></div>
<div class="ab" style="left:1496px;top:1015px;width:56px;height:19px;border:1px solid #000;background:#ACA899;box-shadow:inset 2px 1px 0 #fff, inset -3px -1px 0 #fff"></div>
<div class="ab" style="left:1496px;top:1035px;width:56px;height:19px;border:1px solid #000;background:#ACA899;box-shadow:inset 2px 1px 0 #fff, inset -3px -1px 0 #fff"></div>
<div class="ab" style="left:1496px;top:1055px;width:56px;height:19px;border:1px solid #000;background:#ACA899;box-shadow:inset 2px 1px 0 #fff, inset -3px -1px 0 #fff"></div>
<div class="btn" style="left:1431px;top:1040px;width:33px;height:36px;background:#F0F0F0"><div class="t" style="left:1px;top:12px;letter-spacing:-0.5px">Setup</div></div>
<div class="ab" style="left:1136px;top:1085px;width:83px;height:45px;border:1px solid #ACA899;box-shadow:inset 1px 1px 0 #fff, 1px 1px 0 #fff"></div>
<div class="t" style="left:1141px;top:1095px">Info. :</div>
<div class="btn" style="left:1176px;top:1093px;width:33px;height:36px"><svg class="ab" style="left:-1px;top:-1px" width="33" height="36"><rect x="3" y="4" width="27" height="28" fill="#EFEFEF"/><path d="M10.5 8.5 H23 Q26.5 8.5 26.5 12 V15 Q26.5 18.5 23 18.5 H15.5 L11.5 22.5 L12.5 18.5 H10.5 Q7 18.5 7 15 V12 Q7 8.5 10.5 8.5 Z" fill="#fff" stroke="#000" stroke-width="1"/><text x="5" y="31" font-family="Liberation Sans" font-weight="bold" font-size="13" fill="#FF0000" textLength="25" lengthAdjust="spacingAndGlyphs">Info.</text></svg></div>
<div class="ab" style="left:1222px;top:1085px;width:83px;height:45px;border:1px solid #ACA899;box-shadow:inset 1px 1px 0 #fff, 1px 1px 0 #fff"></div>
<div class="t" style="left:1228px;top:1095px">Text :</div>
<div class="btn" style="left:1262px;top:1093px;width:33px;height:36px"><svg class="ab" style="left:-1px;top:-1px" width="33" height="36"><rect x="3" y="4" width="26" height="28" fill="#EFEFEF"/><rect x="7.5" y="9.5" width="17" height="16" fill="#fff" stroke="#000"/><rect x="7.5" y="9.5" width="17" height="3" fill="#C8C8C8" stroke="#000"/><path d="M13 12.5 V25.5 M8 17 H13 M8 21 H13" stroke="#C0C0C0"/><rect x="12.5" y="12.5" width="13" height="14" fill="#808000" stroke="#000"/><rect x="14" y="13" width="10" height="6" fill="#C8C8C8"/><rect x="14" y="21" width="10" height="5" fill="#000"/><rect x="21" y="22" width="2" height="3" fill="#fff"/></svg></div>
<div class="ab" style="left:1308px;top:1085px;width:83px;height:45px;border:1px solid #ACA899;box-shadow:inset 1px 1px 0 #fff, 1px 1px 0 #fff"></div>
<div class="t" style="left:1313px;top:1095px">Print :</div>
<div class="btn" style="left:1348px;top:1093px;width:33px;height:36px"><svg class="ab" style="left:-1px;top:-1px" width="33" height="36"><path d="M4 16 L7 13 H25 L28 16 V22 L23 28 H8 L4 24 Z" fill="#fff" transform="translate(1 1)"/><path d="M12.5 7.5 H25 L22.5 15 H8.5 Z" fill="#fff" stroke="#ACA899" stroke-width="1"/><path d="M4 16 L7 13 H25 L28 16 V22 L23 28 H8 L4 24 Z" fill="#ACA899"/><rect x="12" y="9" width="8" height="1.3" fill="#ACA899"/><rect x="11" y="11.5" width="8" height="1.2" fill="#ACA899"/><rect x="11" y="13.5" width="6" height="1" fill="#ACA899"/></svg></div>
<div class="ab" style="left:1393px;top:1085px;width:171px;height:45px;border:1px solid #ACA899;box-shadow:inset 1px 1px 0 #fff, 1px 1px 0 #fff"></div>
<div class="t" style="left:1398px;top:1095px">Scale :</div>
<div class="btn" style="left:1438px;top:1093px;width:33px;height:36px"><svg class="ab" style="left:-1px;top:-1px" width="33" height="36"><rect x="10.5" y="9.5" width="14" height="13" fill="#fff" stroke="#000" stroke-width="1.2"/><path d="M11 20.0 L13 18.0 L15 12.0 L17 18.0 L19 20.0" stroke="#00FF00" stroke-width="1.2" fill="none"/><path d="M11 21.0 L13.5 19.0 L15.5 13.0 L17.5 19.0 L19.5 21.0" stroke="#FF0000" stroke-width="1.2" fill="none"/><path d="M11 22.0 H14 L15.5 16.0 L17 21.0 L19 22.0" stroke="#0000FF" stroke-width="1.1" fill="none"/><rect x="3.5" y="9.8" width="4.5" height="2.2" fill="#FFFF00" stroke="#000" stroke-width="1.1"/><rect x="3.5" y="20.8" width="4.5" height="2.2" fill="#FFFF00" stroke="#000" stroke-width="1.1"/><rect x="10.5" y="25.8" width="4.5" height="2.2" fill="#FFFF00" stroke="#000" stroke-width="1.1"/><path d="M8 10.9 H10.5 M8 21.9 H10.5 M12.5 22.5 V25.8" stroke="#000" stroke-width="1.1"/><path d="M19.5 16.0 H24.5 L31 32.0 H25.5 L24.8 29.5 H19.2 L18.5 32.0 H14 Z" fill="#FF0000" stroke="#C00000" stroke-width="0.5"/><circle cx="22" cy="26.0" r="1" fill="#400000"/></svg></div>
<div class="btn" style="left:1479px;top:1093px;width:33px;height:36px"><svg class="ab" style="left:-1px;top:-1px" width="33" height="36"><rect x="10.5" y="9.5" width="14" height="13" fill="#fff" stroke="#000" stroke-width="1.2"/><path d="M11 20.0 L13 18.0 L15 12.0 L17 18.0 L19 20.0" stroke="#00FF00" stroke-width="1.2" fill="none"/><path d="M11 21.0 L13.5 19.0 L15.5 13.0 L17.5 19.0 L19.5 21.0" stroke="#FF0000" stroke-width="1.2" fill="none"/><path d="M11 22.0 H14 L15.5 16.0 L17 21.0 L19 22.0" stroke="#0000FF" stroke-width="1.1" fill="none"/><rect x="3.5" y="9.8" width="4.5" height="2.2" fill="#FFFF00" stroke="#000" stroke-width="1.1"/><rect x="3.5" y="20.8" width="4.5" height="2.2" fill="#FFFF00" stroke="#000" stroke-width="1.1"/><rect x="10.5" y="25.8" width="4.5" height="2.2" fill="#FFFF00" stroke="#000" stroke-width="1.1"/><path d="M8 10.9 H10.5 M8 21.9 H10.5 M12.5 22.5 V25.8" stroke="#000" stroke-width="1.1"/><path d="M14 32.0 V16.0 H19 L21.5 23.0 L24 16.0 H29 V32.0 H25.5 V24.0 L23 30.0 H20 L17.5 24.0 V32.0 Z" fill="#FF0000" stroke="#C00000" stroke-width="0.5"/></svg></div>
<div class="btn" style="left:1520px;top:1093px;width:33px;height:36px;background:#F0F0F0"><svg class="ab" style="left:-1px;top:-1px" width="33" height="36"><rect x="10.5" y="9.5" width="14" height="13" fill="#fff" stroke="#000" stroke-width="1.2"/><path d="M11 20.0 L13 18.0 L15 12.0 L17 18.0 L19 20.0" stroke="#00FF00" stroke-width="1.2" fill="none"/><path d="M11 21.0 L13.5 19.0 L15.5 13.0 L17.5 19.0 L19.5 21.0" stroke="#FF0000" stroke-width="1.2" fill="none"/><path d="M11 22.0 H14 L15.5 16.0 L17 21.0 L19 22.0" stroke="#0000FF" stroke-width="1.1" fill="none"/><rect x="3.5" y="9.8" width="4.5" height="2.2" fill="#FFFF00" stroke="#000" stroke-width="1.1"/><rect x="3.5" y="20.8" width="4.5" height="2.2" fill="#FFFF00" stroke="#000" stroke-width="1.1"/><rect x="10.5" y="25.8" width="4.5" height="2.2" fill="#FFFF00" stroke="#000" stroke-width="1.1"/><path d="M8 10.9 H10.5 M8 21.9 H10.5 M12.5 22.5 V25.8" stroke="#000" stroke-width="1.1"/><text x="14.5" y="32.0" font-family="Liberation Sans" font-weight="bold" font-size="20" fill="#FF0000" stroke="#A00000" stroke-width="0.6">S</text></svg></div>
<div class="ab" style="left:4px;top:1148px;width:1592px;height:1px;background:#fff"></div>
<div class="t" style="left:4px;top:1154px;letter-spacing:0px">Ready</div>
<div class="ab" style="left:657px;top:1151px;width:406px;height:16px;border-top:1px solid #ACA899;border-left:1px solid #ACA899;border-right:1px solid #fff;border-bottom:1px solid #fff"></div>
<div class="ab" style="left:1065px;top:1151px;width:406px;height:16px;border-top:1px solid #ACA899;border-left:1px solid #ACA899;border-right:1px solid #fff;border-bottom:1px solid #fff"></div>
<div class="ab" style="left:1473px;top:1151px;width:33px;height:16px;border-top:1px solid #ACA899;border-left:1px solid #ACA899;border-right:1px solid #fff;border-bottom:1px solid #fff"></div>
<div class="ab" style="left:1508px;top:1151px;width:26px;height:16px;border-top:1px solid #ACA899;border-left:1px solid #ACA899;border-right:1px solid #fff;border-bottom:1px solid #fff"></div>
<div class="ab" style="left:1536px;top:1151px;width:28px;height:16px;border-top:1px solid #ACA899;border-left:1px solid #ACA899;border-right:1px solid #fff;border-bottom:1px solid #fff"></div>
<div class="ab" style="left:1566px;top:1151px;width:30px;height:16px;border-top:1px solid #ACA899;border-left:1px solid #ACA899;border-right:1px solid #fff;border-bottom:1px solid #fff"></div>
<div class="t" style="left:1538px;top:1154px;font-size:11px">NUM</div>
<div class="ab" style="left:0;top:1170px;width:1600px;height:30px;background:linear-gradient(to bottom,#3168D5 0px,#4993E6 2px,#2157D7 5px,#2663E0 17px,#2561DE 26px,#1941A5 30px)"></div>
<div class="ab" style="left:0;top:1170px;width:96px;height:30px;border-radius:0 12px 12px 0;background:linear-gradient(to bottom,#3C8F3B 0px,#5EAC56 3px,#3A9C38 8px,#38A532 20px,#2F8A2E 27px,#2A6F2A 30px);box-shadow:inset -2px 0 3px rgba(0,0,0,0.3)"></div>
<svg class="ab" style="left:10px;top:1176px" width="20" height="19"><path d="M3 2 Q6 0 9 2 L8 8 Q5 6 2 8Z" fill="#F05A20"/><path d="M11 3 Q14 1 18 3 L17 9 Q14 7 10 9Z" fill="#7EC820"/><path d="M1 10 Q4 8 8 10 L7 16 Q4 14 0 16Z" fill="#3A7CF0"/><path d="M10 11 Q13 9 17 11 L16 17 Q13 15 9 17Z" fill="#F8C800"/></svg>
<div class="t" style="left:34px;top:1177px;font-size:17px;font-weight:bold;font-style:italic;color:#fff;text-shadow:1px 1px 1px #1A4A1A">start</div>
<div class="ab" style="left:106px;top:1173px;width:160px;height:25px;border-radius:3px;background:#1E52C5;border:1px solid #1A45A8;box-shadow:inset 1px 1px 1px #15398F"></div>
<svg class="ab" style="left:117px;top:1178px" width="16" height="16" viewBox="0 0 16 16"><rect width="16" height="16" fill="#fff"/><circle cx="4" cy="3.8" r="3.3" fill="#A040E0"/><circle cx="12" cy="3.8" r="3.3" fill="#D81010"/><path d="M12 1.5 L12.7 3.2 L14.2 3.3 L13 4.3 L13.4 5.8 L12 5 L10.6 5.8 L11 4.3 L9.8 3.3 L11.3 3.2Z" fill="#fff"/><circle cx="9.5" cy="8.2" r="3.2" fill="#2090D0"/><circle cx="3.5" cy="12" r="3.3" fill="#20C020"/><text x="2.5" y="15.6" font-family="Liberation Sans" font-weight="bold" font-size="6.5" fill="#FF0000" stroke="#600000" stroke-width="0.3" textLength="13.5" lengthAdjust="spacingAndGlyphs">FDSS</text></svg>
<div class="t" style="left:136px;top:1181px;color:#fff;letter-spacing:-0.4px">FDSS7000EX/uCELL ...</div>
<div class="ab" style="left:1453px;top:1170px;width:147px;height:30px;background:linear-gradient(to bottom,#1E9DF0 0px,#16A4F2 3px,#0D8DEA 8px,#0E8EE8 24px,#0A6ACF 30px);border-left:1px solid #1042AF"></div>
<div class="ab" style="left:1445px;top:1176px;width:18px;height:18px;border-radius:50%;background:radial-gradient(circle at 40% 35%,#7DBBF8,#2872D8);border:1px solid #BCD6F5"></div>
<svg class="ab" style="left:1449px;top:1180px" width="10" height="10"><path d="M6.5 1.5 L3 5 L6.5 8.5" stroke="#fff" stroke-width="2.2" fill="none"/></svg>
<svg class="ab" style="left:1464px;top:1177px" width="17" height="17"><rect x="6" y="1" width="7" height="6" fill="#404870"/><rect x="1" y="5" width="8" height="7" fill="#404870"/><rect x="1" y="12" width="8" height="3" fill="#C0C8E0"/><path d="M8 9 L15 16 M15 9 L8 16" stroke="#E02020" stroke-width="2"/></svg>
<svg class="ab" style="left:1482px;top:1177px" width="16" height="16"><rect x="0" y="0" width="16" height="16" fill="#fff"/><rect x="0" y="0" width="16" height="1" fill="#000"/><rect x="0" y="15" width="16" height="1" fill="#000"/><path d="M1 2 L4 13 L7 2" stroke="#10A010" stroke-width="2" fill="none"/><path d="M10 7 V4 Q12 1 14 4 V7" stroke="#2040E0" stroke-width="1.3" fill="none"/><path d="M15 9 H11 V13 H15" stroke="#E02020" stroke-width="1.3" fill="none"/></svg>
<svg class="ab" style="left:1500px;top:1177px" width="16" height="16"><rect x="0" y="0" width="16" height="16" rx="2" fill="#D01010"/><path d="M3 3 H13 V8 Q13 13 8 14 Q3 13 3 8Z" fill="#fff"/><path d="M8 3 V14 M3 7 H13" stroke="#D01010" stroke-width="1.5"/></svg>
<svg class="ab" style="left:1518px;top:1177px" width="16" height="16"><rect x="1" y="1" width="14" height="14" fill="#1E5EB8" stroke="#C8D8F0"/><rect x="0" y="14" width="15" height="2" fill="#0A2A80"/><circle cx="8" cy="8" r="2" fill="none" stroke="#A0C0F0" stroke-dasharray="1 1"/></svg>
<div class="t" style="left:1543px;top:1181px;color:#fff;letter-spacing:0px">2:56 PM</div>
</div></body></html>
